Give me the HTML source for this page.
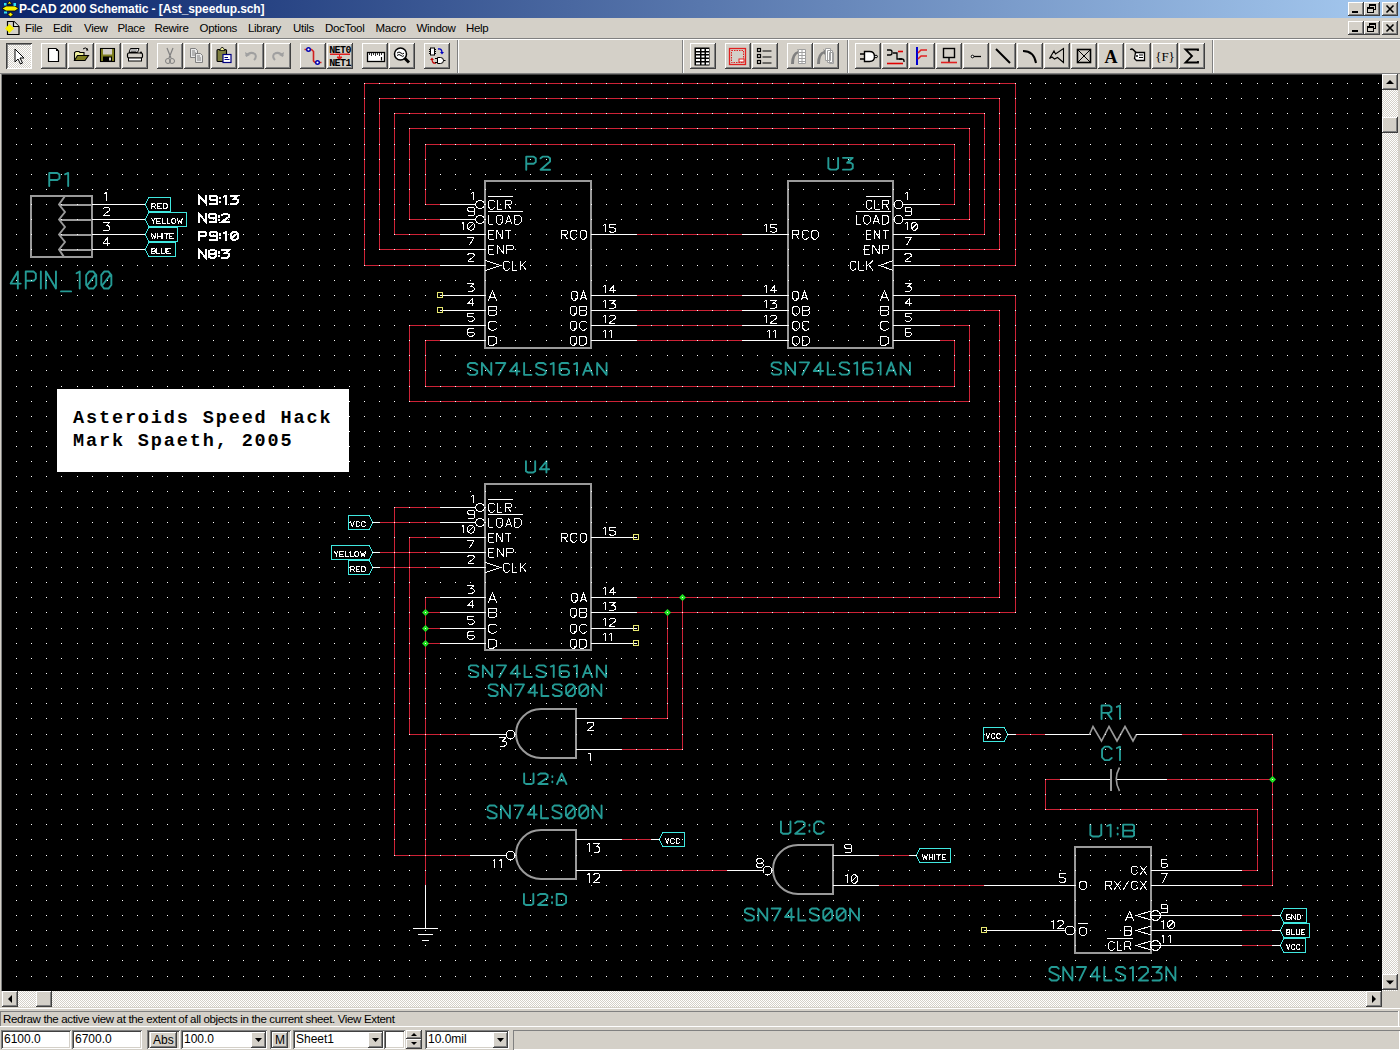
<!DOCTYPE html><html><head><meta charset="utf-8"><style>
*{margin:0;padding:0;box-sizing:border-box}
body{width:1400px;height:1050px;overflow:hidden;background:#d4d0c8;position:relative;font-family:"Liberation Sans",sans-serif;font-size:11px;color:#000}
.a{position:absolute}
.b{position:absolute;background:#d4d0c8}
.dither{background-color:#ffffff;background-image:linear-gradient(45deg,#d4d0c8 25%,transparent 25%,transparent 75%,#d4d0c8 75%),linear-gradient(45deg,#d4d0c8 25%,transparent 25%,transparent 75%,#d4d0c8 75%);background-size:2px 2px;background-position:0 0,1px 1px}
.menu{position:absolute;top:22px;font-size:11.5px;line-height:13px;letter-spacing:-0.3px}
.tsep{position:absolute;width:2px;box-shadow:inset 1px 0 #808080, inset -1px 0 #ffffff}
.field{position:absolute;background:#fff;box-shadow:inset 1px 1px #808080, inset -1px -1px #ffffff, inset 2px 2px #404040, inset -2px -2px #d4d0c8;font-size:12px;line-height:14px;padding:2px 0 0 3px}
</style></head><body>
<div class="a" style="left:0;top:0;width:1400px;height:18px;background:linear-gradient(to right,#0a246a,#a6caf0)"></div>
<svg class="a" style="left:0;top:0" width="20" height="18"><path d="M7,4 L9.5,1 L12,4 Z" fill="#f8f000" stroke="#000" stroke-width=".8"/><path d="M2,8.5 L6,6 L15,6 L18.5,8.5 L15,11 L6,11 Z" fill="#f8f000" stroke="#000" stroke-width=".8"/><path d="M8,14.5 L10.5,12 L13,14.5 L10.5,17 Z" fill="#f8f000" stroke="#000" stroke-width=".8"/><rect x="4" y="3" width="2.5" height="2.5" fill="#30e0f0"/><rect x="13.5" y="3" width="2.5" height="3" fill="#30e0f0"/><rect x="4" y="11.5" width="3" height="2" fill="#30e0f0"/></svg>
<div class="a" style="left:19px;top:2px;color:#fff;font-weight:bold;font-size:12px;line-height:14px;letter-spacing:-0.1px">P-CAD 2000 Schematic - [Ast_speedup.sch]</div>
<div class="b" style="left:1348px;top:2px;width:16px;height:14px;box-shadow: inset -1px -1px #404040, inset 1px 1px #ffffff, inset -2px -2px #808080, inset 2px 2px #d4d0c8;"><div class="a" style="left:4px;top:9px;width:6px;height:2px;background:#000"></div></div>
<div class="b" style="left:1348px;top:21px;width:16px;height:14px;box-shadow: inset -1px -1px #404040, inset 1px 1px #ffffff, inset -2px -2px #808080, inset 2px 2px #d4d0c8;"><div class="a" style="left:4px;top:9px;width:6px;height:2px;background:#000"></div></div>
<div class="b" style="left:1364px;top:2px;width:16px;height:14px;box-shadow: inset -1px -1px #404040, inset 1px 1px #ffffff, inset -2px -2px #808080, inset 2px 2px #d4d0c8;"><svg class="a" style="left:0;top:0" width="16" height="14"><rect x="5.5" y="2.5" width="6" height="5" fill="none" stroke="#000"/><rect x="5" y="2" width="7" height="2" fill="#000"/><rect x="3.5" y="5.5" width="6" height="5" fill="#d4d0c8" stroke="#000"/><rect x="3" y="5" width="7" height="2" fill="#000"/></svg></div>
<div class="b" style="left:1364px;top:21px;width:16px;height:14px;box-shadow: inset -1px -1px #404040, inset 1px 1px #ffffff, inset -2px -2px #808080, inset 2px 2px #d4d0c8;"><svg class="a" style="left:0;top:0" width="16" height="14"><rect x="5.5" y="2.5" width="6" height="5" fill="none" stroke="#000"/><rect x="5" y="2" width="7" height="2" fill="#000"/><rect x="3.5" y="5.5" width="6" height="5" fill="#d4d0c8" stroke="#000"/><rect x="3" y="5" width="7" height="2" fill="#000"/></svg></div>
<div class="b" style="left:1382px;top:2px;width:16px;height:14px;box-shadow: inset -1px -1px #404040, inset 1px 1px #ffffff, inset -2px -2px #808080, inset 2px 2px #d4d0c8;"><svg class="a" style="left:0;top:0" width="16" height="14"><path d="M4.5,3.5 L11.5,10.5 M11.5,3.5 L4.5,10.5" stroke="#000" stroke-width="1.6"/></svg></div>
<div class="b" style="left:1382px;top:21px;width:16px;height:14px;box-shadow: inset -1px -1px #404040, inset 1px 1px #ffffff, inset -2px -2px #808080, inset 2px 2px #d4d0c8;"><svg class="a" style="left:0;top:0" width="16" height="14"><path d="M4.5,3.5 L11.5,10.5 M11.5,3.5 L4.5,10.5" stroke="#000" stroke-width="1.6"/></svg></div>
<svg class="a" style="left:0;top:19px" width="22" height="18"><path d="M7.5,2.5 h6.5 l5,5 v8 h-11.5 z" fill="#d4d0c8" stroke="#000" stroke-width="1.2"/><path d="M13.5,2.5v5h5.5" fill="#e0e8e0" stroke="#000" stroke-width="1.2"/><path d="M5,9.5 L9.5,5 L14,9.5 L9.5,14 Z" fill="#f8f000"/></svg>
<div class="menu" style="left:25.0px">File</div>
<div class="menu" style="left:53.0px">Edit</div>
<div class="menu" style="left:84.0px">View</div>
<div class="menu" style="left:117.5px">Place</div>
<div class="menu" style="left:154.5px">Rewire</div>
<div class="menu" style="left:199.5px">Options</div>
<div class="menu" style="left:248.0px">Library</div>
<div class="menu" style="left:293.0px">Utils</div>
<div class="menu" style="left:325.0px">DocTool</div>
<div class="menu" style="left:375.5px">Macro</div>
<div class="menu" style="left:416.5px">Window</div>
<div class="menu" style="left:466.0px">Help</div>
<div class="a" style="left:0;top:38px;width:1400px;height:1px;background:#808080"></div>
<div class="a" style="left:0;top:39px;width:1400px;height:1px;background:#ffffff"></div>
<div class="a dither" style="left:6px;top:43px;width:26px;height:26px;box-shadow:inset 1px 1px #404040, inset -1px -1px #ffffff, inset 2px 2px #808080"><svg width="26" height="26" viewBox="0 0 26 26" style="position:absolute;left:0;top:0"><path d="M9,6 L9,19 L12,16 L14.5,21 L16.5,20 L14,15 L18,15 Z" fill="#fff" stroke="#000" stroke-width="1"/></svg></div>
<div class="b" style="left:41px;top:43px;width:26px;height:26px;box-shadow: inset -1px -1px #404040, inset 1px 1px #ffffff, inset -2px -2px #808080, inset 2px 2px #d4d0c8;"><svg width="26" height="26" viewBox="0 0 26 26" style="position:absolute;left:0;top:0"><path d="M7.5,5.5 L15,5.5 L17.5,8 L17.5,18.5 L7.5,18.5 Z" fill="#fff" stroke="#000" stroke-width="1.2"/><rect x="15" y="6" width="2" height="2" fill="#000"/></svg></div>
<div class="b" style="left:68px;top:43px;width:26px;height:26px;box-shadow: inset -1px -1px #404040, inset 1px 1px #ffffff, inset -2px -2px #808080, inset 2px 2px #d4d0c8;"><svg width="26" height="26" viewBox="0 0 26 26" style="position:absolute;left:0;top:0"><path d="M15,6 Q17,3.5 20,6.5" fill="none" stroke="#000"/><path d="M19,5 L20.5,7.5 L18,7.5Z" fill="#000"/><path d="M6.5,17.5 L6.5,9.5 L8,8.5 L11,8.5 L12,9.5 L16,9.5 L16,12" fill="#f0f0a0" stroke="#000" stroke-width="1.1"/><path d="M6.5,17.5 L9.5,12.5 L20.5,12.5 L17,17.5 Z" fill="#808020" stroke="#000" stroke-width="1.1"/></svg></div>
<div class="b" style="left:95px;top:43px;width:26px;height:26px;box-shadow: inset -1px -1px #404040, inset 1px 1px #ffffff, inset -2px -2px #808080, inset 2px 2px #d4d0c8;"><svg width="26" height="26" viewBox="0 0 26 26" style="position:absolute;left:0;top:0"><rect x="5.5" y="5.5" width="14" height="13" fill="#808020" stroke="#000" stroke-width="1.1"/><rect x="8" y="6" width="9" height="5.5" fill="#d4d0c8"/><rect x="8" y="13.5" width="9" height="5" fill="#000"/><rect x="14" y="14.5" width="2" height="3" fill="#d4d0c8"/></svg></div>
<div class="b" style="left:122px;top:43px;width:26px;height:26px;box-shadow: inset -1px -1px #404040, inset 1px 1px #ffffff, inset -2px -2px #808080, inset 2px 2px #d4d0c8;"><svg width="26" height="26" viewBox="0 0 26 26" style="position:absolute;left:0;top:0"><path d="M8.5,5.5 L17,5.5 L15.5,9.5 L7,9.5 Z" fill="#fff" stroke="#000"/><path d="M9,7h6M8.5,8.5h6" stroke="#000" stroke-width=".6"/><rect x="5.5" y="10" width="15" height="5" rx="1.5" fill="#d4d0c8" stroke="#000" stroke-width="1.2"/><rect x="6.5" y="15" width="13" height="3" fill="#fff" stroke="#000"/><circle cx="19" cy="9.5" r="1" fill="#000"/></svg></div>
<div class="b" style="left:157px;top:43px;width:26px;height:26px;box-shadow: inset -1px -1px #404040, inset 1px 1px #ffffff, inset -2px -2px #808080, inset 2px 2px #d4d0c8;"><svg width="26" height="26" viewBox="0 0 26 26" style="position:absolute;left:0;top:0"><path d="M10,5 L14,15 M16,5 L12,15" stroke="#808080" stroke-width="1.2" fill="none"/><circle cx="11" cy="18" r="2.5" fill="none" stroke="#808080"/><circle cx="15" cy="18" r="2.5" fill="none" stroke="#808080"/></svg></div>
<div class="b" style="left:184px;top:43px;width:26px;height:26px;box-shadow: inset -1px -1px #404040, inset 1px 1px #ffffff, inset -2px -2px #808080, inset 2px 2px #d4d0c8;"><svg width="26" height="26" viewBox="0 0 26 26" style="position:absolute;left:0;top:0"><path d="M6.5,5.5 h5 l2,2 v7 h-7 z" fill="#e8e8e8" stroke="#808080"/><path d="M8,8h3M8,10h4M8,12h4" stroke="#808080"/><path d="M11.5,10.5 h5 l2,2 v7 h-7 z" fill="#e8e8e8" stroke="#808080"/><path d="M13,13h3M13,15h4M13,17h4" stroke="#808080"/></svg></div>
<div class="b" style="left:211px;top:43px;width:26px;height:26px;box-shadow: inset -1px -1px #404040, inset 1px 1px #ffffff, inset -2px -2px #808080, inset 2px 2px #d4d0c8;"><svg width="26" height="26" viewBox="0 0 26 26" style="position:absolute;left:0;top:0"><rect x="6" y="6.5" width="9.5" height="12" rx="1" fill="#808040" stroke="#000" stroke-width="1.1"/><path d="M8.5,7.5 L10.5,4.5 L12,4.5 L14,7.5 Z" fill="#f0f0a0" stroke="#000" stroke-width=".8"/><rect x="12" y="11.5" width="8" height="8" fill="#fff" stroke="#000080" stroke-width="1.2"/><path d="M13.5,14.5h3.5M13.5,16.5h5" stroke="#000080"/></svg></div>
<div class="b" style="left:238px;top:43px;width:26px;height:26px;box-shadow: inset -1px -1px #404040, inset 1px 1px #ffffff, inset -2px -2px #808080, inset 2px 2px #d4d0c8;"><svg width="26" height="26" viewBox="0 0 26 26" style="position:absolute;left:0;top:0"><path d="M8,13 Q12,8 17,11 Q19,14 16,17" fill="none" stroke="#a0a0a0" stroke-width="2"/><path d="M7,9 L8,14 L12,12" fill="#a0a0a0"/></svg></div>
<div class="b" style="left:265px;top:43px;width:26px;height:26px;box-shadow: inset -1px -1px #404040, inset 1px 1px #ffffff, inset -2px -2px #808080, inset 2px 2px #d4d0c8;"><svg width="26" height="26" viewBox="0 0 26 26" style="position:absolute;left:0;top:0"><path d="M18,13 Q14,8 9,11 Q7,14 10,17" fill="none" stroke="#a0a0a0" stroke-width="2"/><path d="M19,9 L18,14 L14,12" fill="#a0a0a0"/></svg></div>
<div class="b" style="left:300px;top:43px;width:26px;height:26px;box-shadow: inset -1px -1px #404040, inset 1px 1px #ffffff, inset -2px -2px #808080, inset 2px 2px #d4d0c8;"><svg width="26" height="26" viewBox="0 0 26 26" style="position:absolute;left:0;top:0"><path d="M4.5,6.5 L11.5,6.5 L13.5,8.5 L13.5,18 L15,19.5 L21.5,19.5" fill="none" stroke="#d02020" stroke-width="1.6"/><circle cx="8.5" cy="6.5" r="1.8" fill="#fff" stroke="#0000b0" stroke-width="1.4"/><circle cx="17.5" cy="19.5" r="1.8" fill="#fff" stroke="#0000b0" stroke-width="1.4"/></svg></div>
<div class="b" style="left:327px;top:43px;width:26px;height:26px;box-shadow: inset -1px -1px #404040, inset 1px 1px #ffffff, inset -2px -2px #808080, inset 2px 2px #d4d0c8;"><svg width="26" height="26" viewBox="0 0 26 26" style="position:absolute;left:0;top:0"><text x="13" y="10" font-family="Liberation Mono" font-size="10" font-weight="bold" text-anchor="middle" fill="#000" letter-spacing="-0.6">NET0</text><rect x="3" y="10.5" width="20" height="1.5" fill="#e02020"/><path d="M12.5,12 v2 M10,14 L15,14 L12.5,17 Z" stroke="#e02020" fill="#e02020"/><text x="13" y="23" font-family="Liberation Mono" font-size="10" font-weight="bold" text-anchor="middle" fill="#000" letter-spacing="-0.6">NET1</text></svg></div>
<div class="b" style="left:362px;top:43px;width:26px;height:26px;box-shadow: inset -1px -1px #404040, inset 1px 1px #ffffff, inset -2px -2px #808080, inset 2px 2px #d4d0c8;"><svg width="26" height="26" viewBox="0 0 26 26" style="position:absolute;left:0;top:0"><rect x="5.5" y="9.5" width="17" height="9" fill="#fff" stroke="#000" stroke-width="1.3"/><path d="M7.5,10v2M9.5,10v3M11.5,10v2M13.5,10v3M15.5,10v2M17.5,10v3M19.5,10v2" stroke="#000" stroke-width=".8"/><path d="M19.5,14v3.5" stroke="#000" stroke-width="1.2"/></svg></div>
<div class="b" style="left:389px;top:43px;width:26px;height:26px;box-shadow: inset -1px -1px #404040, inset 1px 1px #ffffff, inset -2px -2px #808080, inset 2px 2px #d4d0c8;"><svg width="26" height="26" viewBox="0 0 26 26" style="position:absolute;left:0;top:0"><circle cx="11.5" cy="11" r="6" fill="#fff" stroke="#000" stroke-width="1.5"/><path d="M8,10 q2,-2 4,0 q2,2 3,0 M8,12.5 q2,-2 4,0 q2,2 3,0" stroke="#000" fill="none"/><path d="M15.5,15 L20,19.5" stroke="#000" stroke-width="3"/></svg></div>
<div class="b" style="left:424px;top:43px;width:26px;height:26px;box-shadow: inset -1px -1px #404040, inset 1px 1px #ffffff, inset -2px -2px #808080, inset 2px 2px #d4d0c8;"><svg width="26" height="26" viewBox="0 0 26 26" style="position:absolute;left:0;top:0"><rect x="6.5" y="5" width="4" height="7" fill="#fff" stroke="#000"/><path d="M5,6.5h1.5M5,8.5h1.5M5,10.5h1.5M10.5,6.5h1.5M10.5,8.5h1.5M10.5,10.5h1.5" stroke="#000"/><path d="M14,6 Q18,5 18,10" fill="none" stroke="#0000c0" stroke-width="1.3"/><path d="M16,9 L18,11.5 L20,9" fill="#0000c0"/><path d="M12,20 Q8,21 8,16" fill="none" stroke="#c00000" stroke-width="1.3"/><path d="M6,17 L8,14.5 L10,17" fill="#c00000"/><path d="M13.5,14.5 h3 q3,0 3,3 q0,3 -3,3 h-3 z M11,15.5h2.5M11,19.5h2.5M19.5,17.5h2" fill="#fff" stroke="#000"/></svg></div>
<div class="tsep" style="left:457px;top:40px;height:33px"></div>
<div class="tsep" style="left:682px;top:40px;height:33px"></div>
<div class="b" style="left:690px;top:43px;width:26px;height:26px;box-shadow: inset -1px -1px #404040, inset 1px 1px #ffffff, inset -2px -2px #808080, inset 2px 2px #d4d0c8;"><svg width="26" height="26" viewBox="0 0 26 26" style="position:absolute;left:0;top:0"><rect x="4.5" y="4.5" width="15" height="18" fill="#000"/><g fill="#fff"><rect x="6" y="6" width="4" height="2"/><rect x="11.5" y="6" width="3" height="2"/><rect x="16" y="6" width="3" height="2"/><rect x="6" y="9.5" width="4" height="1.5"/><rect x="11.5" y="9.5" width="3" height="1.5"/><rect x="16" y="9.5" width="3" height="1.5"/><rect x="6" y="12.5" width="4" height="2"/><rect x="11.5" y="12.5" width="3" height="2"/><rect x="16" y="12.5" width="3" height="2"/><rect x="6" y="16" width="4" height="2"/><rect x="11.5" y="16" width="3" height="2"/><rect x="16" y="16" width="3" height="2"/><rect x="6" y="19.5" width="4" height="2"/><rect x="11.5" y="19.5" width="3" height="2"/><rect x="16" y="19.5" width="3" height="2"/></g></svg></div>
<div class="b" style="left:725px;top:43px;width:26px;height:26px;box-shadow: inset -1px -1px #404040, inset 1px 1px #ffffff, inset -2px -2px #808080, inset 2px 2px #d4d0c8;"><svg width="26" height="26" viewBox="0 0 26 26" style="position:absolute;left:0;top:0"><rect x="4.5" y="5.5" width="16" height="16" fill="none" stroke="#e02020" stroke-width="1.3"/><rect x="6.5" y="7.5" width="12" height="12" fill="none" stroke="#e02020" stroke-dasharray="1.5,1"/><rect x="14" y="16" width="5" height="3" fill="#fff" stroke="#e02020"/></svg></div>
<div class="b" style="left:752px;top:43px;width:26px;height:26px;box-shadow: inset -1px -1px #404040, inset 1px 1px #ffffff, inset -2px -2px #808080, inset 2px 2px #d4d0c8;"><svg width="26" height="26" viewBox="0 0 26 26" style="position:absolute;left:0;top:0"><rect x="5.5" y="5.5" width="3" height="3" fill="none" stroke="#000" stroke-width="1.2"/><rect x="5.5" y="11.5" width="3" height="3" fill="none" stroke="#000" stroke-width="1.2"/><rect x="5.5" y="17.5" width="3" height="3" fill="none" stroke="#000" stroke-width="1.2"/><path d="M10.5,8h9M10.5,14h9M10.5,20h9" stroke="#000" stroke-width="1.2"/></svg></div>
<div class="b" style="left:787px;top:43px;width:26px;height:26px;box-shadow: inset -1px -1px #404040, inset 1px 1px #ffffff, inset -2px -2px #808080, inset 2px 2px #d4d0c8;"><svg width="26" height="26" viewBox="0 0 26 26" style="position:absolute;left:0;top:0"><path d="M4,21 Q4,10 11,8 L10,6 L14,8.5 L11,12 L11,10.5 Q7,12 7,21 Z" fill="#808080"/><path d="M11.5,6.5 h7v14h-7z" fill="#fff" stroke="#a0a0a0"/><path d="M11.5,9.5h7M11.5,12.5h7M11.5,15.5h7M11.5,18.5h7M15,6.5v14" stroke="#a0a0a0"/></svg></div>
<div class="b" style="left:813px;top:43px;width:26px;height:26px;box-shadow: inset -1px -1px #404040, inset 1px 1px #ffffff, inset -2px -2px #808080, inset 2px 2px #d4d0c8;"><svg width="26" height="26" viewBox="0 0 26 26" style="position:absolute;left:0;top:0"><path d="M4,21 Q4,10 11,8 L10,6 L14,8.5 L11,12 L11,10.5 Q7,12 7,21 Z" fill="#808080"/><path d="M12.5,5.5h5v12h-5z M14.5,7.5h5v12h-5z M16.5,9.5h4v11h-4z" fill="#fff" stroke="#a0a0a0"/></svg></div>
<div class="tsep" style="left:847px;top:40px;height:33px"></div>
<div class="b" style="left:855px;top:43px;width:26px;height:26px;box-shadow: inset -1px -1px #404040, inset 1px 1px #ffffff, inset -2px -2px #808080, inset 2px 2px #d4d0c8;"><svg width="26" height="26" viewBox="0 0 26 26" style="position:absolute;left:0;top:0"><path d="M9.5,8.5 h5 q5,0 5,5 q0,5 -5,5 h-5 z" fill="#fff" stroke="#000" stroke-width="1.4"/><path d="M5,11h4.5M5,16h4.5M19.5,13.5h3" stroke="#000" stroke-width="1.4"/><circle cx="21" cy="13.5" r="1.3" fill="#fff" stroke="#000"/></svg></div>
<div class="b" style="left:882px;top:43px;width:26px;height:26px;box-shadow: inset -1px -1px #404040, inset 1px 1px #ffffff, inset -2px -2px #808080, inset 2px 2px #d4d0c8;"><svg width="26" height="26" viewBox="0 0 26 26" style="position:absolute;left:0;top:0"><path d="M5,7h3q2,0 2,2v1q0,2 -2,2h-3" fill="none" stroke="#000" stroke-width="1.3"/><path d="M11,10h4v6h5" fill="none" stroke="#000" stroke-width="1.3"/><path d="M5,20.5h16" stroke="#e00000" stroke-width="1.6"/><path d="M16,8.5h5" stroke="#e00000" stroke-width="1.6"/><path d="M17,16h3q2,0 2,2v1" fill="none" stroke="#000" stroke-width="1.3"/></svg></div>
<div class="b" style="left:909px;top:43px;width:26px;height:26px;box-shadow: inset -1px -1px #404040, inset 1px 1px #ffffff, inset -2px -2px #808080, inset 2px 2px #d4d0c8;"><svg width="26" height="26" viewBox="0 0 26 26" style="position:absolute;left:0;top:0"><path d="M8,4v18" stroke="#0000d0" stroke-width="2"/><path d="M9,10 l3,-3 h6 M9,16 l3,-3 h6" fill="none" stroke="#e02020" stroke-width="1.5"/></svg></div>
<div class="b" style="left:936px;top:43px;width:26px;height:26px;box-shadow: inset -1px -1px #404040, inset 1px 1px #ffffff, inset -2px -2px #808080, inset 2px 2px #d4d0c8;"><svg width="26" height="26" viewBox="0 0 26 26" style="position:absolute;left:0;top:0"><rect x="7.5" y="5.5" width="11" height="9" fill="none" stroke="#000" stroke-width="1.4"/><path d="M13,14.5v5" stroke="#000" stroke-width="1.4"/><path d="M5,19.5h16" stroke="#e02020" stroke-width="1.6"/></svg></div>
<div class="b" style="left:963px;top:43px;width:26px;height:26px;box-shadow: inset -1px -1px #404040, inset 1px 1px #ffffff, inset -2px -2px #808080, inset 2px 2px #d4d0c8;"><svg width="26" height="26" viewBox="0 0 26 26" style="position:absolute;left:0;top:0"><circle cx="9.5" cy="13.5" r="1.3" fill="#fff" stroke="#000" stroke-width="1"/><path d="M11,13.5h7" stroke="#000" stroke-width="1.3"/></svg></div>
<div class="b" style="left:990px;top:43px;width:26px;height:26px;box-shadow: inset -1px -1px #404040, inset 1px 1px #ffffff, inset -2px -2px #808080, inset 2px 2px #d4d0c8;"><svg width="26" height="26" viewBox="0 0 26 26" style="position:absolute;left:0;top:0"><path d="M6,6 L20,20" stroke="#000" stroke-width="2"/></svg></div>
<div class="b" style="left:1017px;top:43px;width:26px;height:26px;box-shadow: inset -1px -1px #404040, inset 1px 1px #ffffff, inset -2px -2px #808080, inset 2px 2px #d4d0c8;"><svg width="26" height="26" viewBox="0 0 26 26" style="position:absolute;left:0;top:0"><path d="M6,8 Q17,8 19,20" fill="none" stroke="#000" stroke-width="2"/></svg></div>
<div class="b" style="left:1044px;top:43px;width:26px;height:26px;box-shadow: inset -1px -1px #404040, inset 1px 1px #ffffff, inset -2px -2px #808080, inset 2px 2px #d4d0c8;"><svg width="26" height="26" viewBox="0 0 26 26" style="position:absolute;left:0;top:0"><path d="M5.5,15.5 L10,8 L11.5,11 L19.5,5.5 L19.5,19.5 L13.5,14.5 L10.5,16 L8,14 Z" fill="none" stroke="#000" stroke-width="1.1"/></svg></div>
<div class="b" style="left:1071px;top:43px;width:26px;height:26px;box-shadow: inset -1px -1px #404040, inset 1px 1px #ffffff, inset -2px -2px #808080, inset 2px 2px #d4d0c8;"><svg width="26" height="26" viewBox="0 0 26 26" style="position:absolute;left:0;top:0"><rect x="6.5" y="6.5" width="13" height="13" fill="none" stroke="#000" stroke-width="1.6"/><path d="M7,7 L19,19 M19,7 L7,19" stroke="#000" stroke-width="1"/></svg></div>
<div class="b" style="left:1098px;top:43px;width:26px;height:26px;box-shadow: inset -1px -1px #404040, inset 1px 1px #ffffff, inset -2px -2px #808080, inset 2px 2px #d4d0c8;"><svg width="26" height="26" viewBox="0 0 26 26" style="position:absolute;left:0;top:0"><text x="13" y="19.5" font-family="Liberation Serif" font-size="18" font-weight="bold" text-anchor="middle" fill="#000">A</text></svg></div>
<div class="b" style="left:1125px;top:43px;width:26px;height:26px;box-shadow: inset -1px -1px #404040, inset 1px 1px #ffffff, inset -2px -2px #808080, inset 2px 2px #d4d0c8;"><svg width="26" height="26" viewBox="0 0 26 26" style="position:absolute;left:0;top:0"><path d="M10.5,9.5 h9 v8 h-8 l-2,-2 z" fill="#fff" stroke="#000" stroke-width="1.3"/><path d="M5.5,7 q1,-2 3,0 l3,3" fill="none" stroke="#000" stroke-width="1.6"/><circle cx="12" cy="13" r="1" fill="#000"/><path d="M14,12h4M14,14.5h4" stroke="#000"/></svg></div>
<div class="b" style="left:1152px;top:43px;width:26px;height:26px;box-shadow: inset -1px -1px #404040, inset 1px 1px #ffffff, inset -2px -2px #808080, inset 2px 2px #d4d0c8;"><svg width="26" height="26" viewBox="0 0 26 26" style="position:absolute;left:0;top:0"><text x="13" y="17.5" font-family="Liberation Serif" font-size="13" text-anchor="middle" fill="#000">{F}</text></svg></div>
<div class="b" style="left:1179px;top:43px;width:26px;height:26px;box-shadow: inset -1px -1px #404040, inset 1px 1px #ffffff, inset -2px -2px #808080, inset 2px 2px #d4d0c8;"><svg width="26" height="26" viewBox="0 0 26 26" style="position:absolute;left:0;top:0"><path d="M19,8 L19,6.5 L6.5,6.5 L13,13 L6.5,19.5 L19,19.5 L19,18" fill="none" stroke="#000" stroke-width="1.8"/></svg></div>
<div class="tsep" style="left:1212px;top:40px;height:33px"></div>
<div class="a" style="left:0;top:73px;width:1400px;height:1px;background:#808080"></div>
<div class="a" style="left:1px;top:73px;width:1px;height:918px;background:#808080"></div>
<svg class="a" style="left:0;top:0" width="1400" height="1050" shape-rendering="auto">
<rect x="2" y="74" width="1380" height="917" fill="#000"/><rect x="2" y="74" width="1380" height="1" fill="#404040"/>
<rect x="57" y="389" width="292" height="83" fill="#fff"/>
<rect x="364" y="265" width="77" height="1" fill="#cc2236"/>
<rect x="364" y="83" width="1" height="183" fill="#cc2236"/>
<rect x="364" y="83" width="652" height="1" fill="#cc2236"/>
<rect x="1015" y="83" width="1" height="183" fill="#cc2236"/>
<rect x="939" y="265" width="77" height="1" fill="#cc2236"/>
<rect x="379" y="249" width="62" height="1" fill="#cc2236"/>
<rect x="379" y="98" width="1" height="152" fill="#cc2236"/>
<rect x="379" y="98" width="621" height="1" fill="#cc2236"/>
<rect x="999" y="98" width="1" height="152" fill="#cc2236"/>
<rect x="939" y="249" width="61" height="1" fill="#cc2236"/>
<rect x="394" y="234" width="47" height="1" fill="#cc2236"/>
<rect x="394" y="113" width="1" height="122" fill="#cc2236"/>
<rect x="394" y="113" width="591" height="1" fill="#cc2236"/>
<rect x="984" y="113" width="1" height="122" fill="#cc2236"/>
<rect x="939" y="234" width="46" height="1" fill="#cc2236"/>
<rect x="409" y="219" width="32" height="1" fill="#cc2236"/>
<rect x="409" y="128" width="1" height="92" fill="#cc2236"/>
<rect x="409" y="128" width="561" height="1" fill="#cc2236"/>
<rect x="969" y="128" width="1" height="92" fill="#cc2236"/>
<rect x="939" y="219" width="31" height="1" fill="#cc2236"/>
<rect x="425" y="204" width="16" height="1" fill="#cc2236"/>
<rect x="425" y="144" width="1" height="61" fill="#cc2236"/>
<rect x="425" y="144" width="530" height="1" fill="#cc2236"/>
<rect x="954" y="144" width="1" height="61" fill="#cc2236"/>
<rect x="939" y="204" width="16" height="1" fill="#cc2236"/>
<rect x="636" y="234" width="107" height="1" fill="#cc2236"/>
<rect x="636" y="295" width="107" height="1" fill="#cc2236"/>
<rect x="636" y="310" width="107" height="1" fill="#cc2236"/>
<rect x="636" y="325" width="107" height="1" fill="#cc2236"/>
<rect x="636" y="340" width="107" height="1" fill="#cc2236"/>
<rect x="425" y="340" width="16" height="1" fill="#cc2236"/>
<rect x="425" y="340" width="1" height="47" fill="#cc2236"/>
<rect x="425" y="386" width="530" height="1" fill="#cc2236"/>
<rect x="954" y="340" width="1" height="47" fill="#cc2236"/>
<rect x="939" y="340" width="16" height="1" fill="#cc2236"/>
<rect x="409" y="325" width="32" height="1" fill="#cc2236"/>
<rect x="409" y="325" width="1" height="77" fill="#cc2236"/>
<rect x="409" y="401" width="561" height="1" fill="#cc2236"/>
<rect x="969" y="325" width="1" height="77" fill="#cc2236"/>
<rect x="939" y="325" width="31" height="1" fill="#cc2236"/>
<rect x="939" y="295" width="77" height="1" fill="#cc2236"/>
<rect x="1015" y="295" width="1" height="318" fill="#cc2236"/>
<rect x="636" y="612" width="380" height="1" fill="#cc2236"/>
<rect x="939" y="310" width="61" height="1" fill="#cc2236"/>
<rect x="999" y="310" width="1" height="288" fill="#cc2236"/>
<rect x="636" y="597" width="364" height="1" fill="#cc2236"/>
<rect x="682" y="597" width="1" height="153" fill="#cc2236"/>
<rect x="621" y="749" width="62" height="1" fill="#cc2236"/>
<rect x="667" y="612" width="1" height="107" fill="#cc2236"/>
<rect x="621" y="718" width="47" height="1" fill="#cc2236"/>
<rect x="394" y="507" width="47" height="1" fill="#cc2236"/>
<rect x="394" y="507" width="1" height="349" fill="#cc2236"/>
<rect x="394" y="855" width="77" height="1" fill="#cc2236"/>
<rect x="379" y="522" width="62" height="1" fill="#cc2236"/>
<rect x="409" y="537" width="32" height="1" fill="#cc2236"/>
<rect x="409" y="537" width="1" height="198" fill="#cc2236"/>
<rect x="409" y="734" width="62" height="1" fill="#cc2236"/>
<rect x="379" y="552" width="62" height="1" fill="#cc2236"/>
<rect x="379" y="567" width="62" height="1" fill="#cc2236"/>
<rect x="425" y="597" width="16" height="1" fill="#cc2236"/>
<rect x="425" y="597" width="1" height="289" fill="#cc2236"/>
<rect x="425" y="612" width="16" height="1" fill="#cc2236"/>
<rect x="425" y="628" width="16" height="1" fill="#cc2236"/>
<rect x="425" y="643" width="16" height="1" fill="#cc2236"/>
<rect x="621" y="839" width="31" height="1" fill="#cc2236"/>
<rect x="621" y="870" width="107" height="1" fill="#cc2236"/>
<rect x="878" y="855" width="32" height="1" fill="#cc2236"/>
<rect x="878" y="885" width="107" height="1" fill="#cc2236"/>
<rect x="1015" y="734" width="31" height="1" fill="#cc2236"/>
<rect x="1181" y="734" width="92" height="1" fill="#cc2236"/>
<rect x="1272" y="734" width="1" height="152" fill="#cc2236"/>
<rect x="1241" y="885" width="32" height="1" fill="#cc2236"/>
<rect x="1045" y="779" width="16" height="1" fill="#cc2236"/>
<rect x="1045" y="779" width="1" height="31" fill="#cc2236"/>
<rect x="1045" y="809" width="213" height="1" fill="#cc2236"/>
<rect x="1257" y="809" width="1" height="62" fill="#cc2236"/>
<rect x="1241" y="870" width="17" height="1" fill="#cc2236"/>
<rect x="1166" y="779" width="107" height="1" fill="#cc2236"/>
<rect x="1241" y="915" width="32" height="1" fill="#cc2236"/>
<rect x="1241" y="930" width="32" height="1" fill="#cc2236"/>
<rect x="1241" y="945" width="32" height="1" fill="#cc2236"/>
<rect x="485" y="181" width="106" height="167" fill="none" stroke="#9a9a9a" stroke-width="2"/>
<rect x="440" y="204" width="36" height="1" fill="#ffffff"/>
<circle cx="480.0" cy="204.5" r="4.2" fill="none" stroke="#ffffff" stroke-width="1" shape-rendering="crispEdges"/>
<path d="M 494.44,201.50 L 492.75,200.00 L 490.20,200.00 L 488.50,201.88 L 488.50,207.12 L 490.20,209.00 L 492.75,209.00 L 494.44,207.50 M 497.42,200.00 L 497.42,209.00 L 502.08,209.00 M 505.06,209.00 L 505.06,200.00 L 509.73,200.00 L 511.00,201.12 L 511.00,203.75 L 509.73,204.88 L 505.06,204.88 M 508.45,204.88 L 511.00,209.00" fill="none" stroke="#ffffff" stroke-width="1.00" stroke-linecap="round" stroke-linejoin="round" shape-rendering="crispEdges"/>
<rect x="488" y="196" width="25" height="1" fill="#ffffff"/>
<path d="M 471.18,193.25 L 473.12,192.50 L 473.12,200.00" fill="none" stroke="#ffffff" stroke-width="1" stroke-linecap="round" stroke-linejoin="round" shape-rendering="crispEdges"/>
<rect x="440" y="219" width="36" height="1" fill="#ffffff"/>
<circle cx="480.0" cy="219.5" r="4.2" fill="none" stroke="#ffffff" stroke-width="1" shape-rendering="crispEdges"/>
<path d="M 488.50,215.00 L 488.50,224.00 L 493.33,224.00 M 498.16,215.00 L 500.80,215.00 L 502.55,216.88 L 502.55,222.12 L 500.80,224.00 L 498.16,224.00 L 496.41,222.12 L 496.41,216.88 Z M 505.63,224.00 L 508.70,215.00 L 511.78,224.00 M 506.68,221.00 L 510.72,221.00 M 514.85,215.00 L 518.80,215.00 L 521.00,216.88 L 521.00,222.12 L 518.80,224.00 L 514.85,224.00 Z" fill="none" stroke="#ffffff" stroke-width="1.00" stroke-linecap="round" stroke-linejoin="round" shape-rendering="crispEdges"/>
<rect x="488" y="211" width="35" height="1" fill="#ffffff"/>
<path d="M 474.00,211.56 L 469.16,211.56 L 467.84,210.62 L 467.84,208.12 L 468.72,207.50 L 473.12,207.50 L 474.00,208.12 L 474.00,215.00 L 468.28,215.00" fill="none" stroke="#ffffff" stroke-width="1" stroke-linecap="round" stroke-linejoin="round" shape-rendering="crispEdges"/>
<rect x="440" y="234" width="46" height="1" fill="#ffffff"/>
<path d="M 493.82,230.00 L 488.50,230.00 L 488.50,239.00 L 493.82,239.00 M 488.50,234.50 L 492.59,234.50 M 496.68,239.00 L 496.68,230.00 L 502.41,239.00 L 502.41,230.00 M 505.27,230.00 L 511.00,230.00 M 508.14,230.00 L 508.14,239.00" fill="none" stroke="#ffffff" stroke-width="1.00" stroke-linecap="round" stroke-linejoin="round" shape-rendering="crispEdges"/>
<path d="M 461.94,223.25 L 463.88,222.50 L 463.88,230.00 M 469.60,222.50 L 472.24,222.50 L 474.00,224.06 L 474.00,228.44 L 472.24,230.00 L 469.60,230.00 L 467.84,228.44 L 467.84,224.06 Z M 468.28,228.75 L 473.56,223.75" fill="none" stroke="#ffffff" stroke-width="1" stroke-linecap="round" stroke-linejoin="round" shape-rendering="crispEdges"/>
<rect x="440" y="249" width="46" height="1" fill="#ffffff"/>
<path d="M 494.29,245.00 L 488.50,245.00 L 488.50,254.00 L 494.29,254.00 M 488.50,249.50 L 492.95,249.50 M 497.41,254.00 L 497.41,245.00 L 503.65,254.00 L 503.65,245.00 M 506.76,254.00 L 506.76,245.00 L 511.66,245.00 L 513.00,246.12 L 513.00,248.75 L 511.66,249.88 L 506.76,249.88" fill="none" stroke="#ffffff" stroke-width="1.00" stroke-linecap="round" stroke-linejoin="round" shape-rendering="crispEdges"/>
<path d="M 467.84,237.50 L 474.00,237.50 L 469.60,245.00" fill="none" stroke="#ffffff" stroke-width="1" stroke-linecap="round" stroke-linejoin="round" shape-rendering="crispEdges"/>
<rect x="440" y="265" width="46" height="1" fill="#ffffff"/>
<path d="M485.5,260.5 L500.5,265.5 L485.5,270.5" fill="none" stroke="#ffffff" stroke-width="1" shape-rendering="crispEdges"/>
<path d="M 509.44,262.50 L 507.75,261.00 L 505.20,261.00 L 503.50,262.88 L 503.50,268.12 L 505.20,270.00 L 507.75,270.00 L 509.44,268.50 M 512.42,261.00 L 512.42,270.00 L 517.08,270.00 M 520.06,261.00 L 520.06,270.00 M 526.00,261.00 L 520.06,266.62 M 522.18,264.75 L 526.00,270.00" fill="none" stroke="#ffffff" stroke-width="1.00" stroke-linecap="round" stroke-linejoin="round" shape-rendering="crispEdges"/>
<path d="M 467.84,254.44 L 469.16,253.50 L 472.68,253.50 L 474.00,254.44 L 474.00,256.31 L 467.84,261.00 L 474.00,261.00" fill="none" stroke="#ffffff" stroke-width="1" stroke-linecap="round" stroke-linejoin="round" shape-rendering="crispEdges"/>
<rect x="440" y="295" width="46" height="1" fill="#ffffff"/>
<path d="M 488.50,300.00 L 492.50,291.00 L 496.50,300.00 M 489.87,297.00 L 495.13,297.00" fill="none" stroke="#ffffff" stroke-width="1.00" stroke-linecap="round" stroke-linejoin="round" shape-rendering="crispEdges"/>
<path d="M 467.84,283.50 L 474.00,283.50 L 470.48,286.62 L 472.68,286.62 L 474.00,287.56 L 474.00,290.06 L 472.68,291.00 L 467.84,291.00" fill="none" stroke="#ffffff" stroke-width="1" stroke-linecap="round" stroke-linejoin="round" shape-rendering="crispEdges"/>
<rect x="440" y="310" width="46" height="1" fill="#ffffff"/>
<path d="M 488.50,315.00 L 488.50,306.00 L 495.36,306.00 L 496.50,306.75 L 496.50,309.75 L 495.36,310.50 L 488.50,310.50 M 495.36,310.50 L 496.50,311.25 L 496.50,314.25 L 495.36,315.00 L 488.50,315.00" fill="none" stroke="#ffffff" stroke-width="1.00" stroke-linecap="round" stroke-linejoin="round" shape-rendering="crispEdges"/>
<path d="M 472.24,306.00 L 472.24,298.50 L 467.84,303.81 L 474.00,303.81" fill="none" stroke="#ffffff" stroke-width="1" stroke-linecap="round" stroke-linejoin="round" shape-rendering="crispEdges"/>
<rect x="440" y="325" width="46" height="1" fill="#ffffff"/>
<path d="M 496.50,322.50 L 494.21,321.00 L 490.79,321.00 L 488.50,322.88 L 488.50,328.12 L 490.79,330.00 L 494.21,330.00 L 496.50,328.50" fill="none" stroke="#ffffff" stroke-width="1.00" stroke-linecap="round" stroke-linejoin="round" shape-rendering="crispEdges"/>
<path d="M 474.00,313.50 L 467.84,313.50 L 467.84,316.94 L 472.68,316.94 L 474.00,317.88 L 474.00,320.06 L 472.68,321.00 L 469.16,321.00 L 467.84,320.06" fill="none" stroke="#ffffff" stroke-width="1" stroke-linecap="round" stroke-linejoin="round" shape-rendering="crispEdges"/>
<rect x="440" y="340" width="46" height="1" fill="#ffffff"/>
<path d="M 488.50,336.00 L 493.64,336.00 L 496.50,337.88 L 496.50,343.12 L 493.64,345.00 L 488.50,345.00 Z" fill="none" stroke="#ffffff" stroke-width="1.00" stroke-linecap="round" stroke-linejoin="round" shape-rendering="crispEdges"/>
<path d="M 473.56,328.81 L 473.12,328.50 L 469.16,328.50 L 467.84,329.44 L 467.84,335.06 L 469.16,336.00 L 472.68,336.00 L 474.00,335.06 L 474.00,333.19 L 472.68,332.25 L 469.16,332.25 L 467.84,333.19" fill="none" stroke="#ffffff" stroke-width="1" stroke-linecap="round" stroke-linejoin="round" shape-rendering="crispEdges"/>
<rect x="591" y="234" width="46" height="1" fill="#ffffff"/>
<path d="M 561.00,239.00 L 561.00,230.00 L 566.01,230.00 L 567.38,231.12 L 567.38,233.75 L 566.01,234.88 L 561.00,234.88 M 564.64,234.88 L 567.38,239.00 M 576.94,231.50 L 575.12,230.00 L 572.38,230.00 L 570.56,231.88 L 570.56,237.12 L 572.38,239.00 L 575.12,239.00 L 576.94,237.50 M 581.95,230.00 L 584.68,230.00 L 586.50,231.88 L 586.50,237.12 L 584.68,239.00 L 581.95,239.00 L 580.12,237.12 L 580.12,231.88 Z" fill="none" stroke="#ffffff" stroke-width="1.00" stroke-linecap="round" stroke-linejoin="round" shape-rendering="crispEdges"/>
<path d="M 603.26,225.25 L 605.20,224.50 L 605.20,232.00 M 615.32,224.50 L 609.16,224.50 L 609.16,227.94 L 614.00,227.94 L 615.32,228.88 L 615.32,231.06 L 614.00,232.00 L 610.48,232.00 L 609.16,231.06" fill="none" stroke="#ffffff" stroke-width="1" stroke-linecap="round" stroke-linejoin="round" shape-rendering="crispEdges"/>
<rect x="591" y="295" width="46" height="1" fill="#ffffff"/>
<path d="M 573.21,291.00 L 575.79,291.00 L 577.50,292.88 L 577.50,298.12 L 575.79,300.00 L 573.21,300.00 L 571.50,298.12 L 571.50,292.88 Z M 575.36,298.88 L 576.64,300.00 M 580.50,300.00 L 583.50,291.00 L 586.50,300.00 M 581.53,297.00 L 585.47,297.00" fill="none" stroke="#ffffff" stroke-width="1.00" stroke-linecap="round" stroke-linejoin="round" shape-rendering="crispEdges"/>
<path d="M 603.26,286.25 L 605.20,285.50 L 605.20,293.00 M 613.56,293.00 L 613.56,285.50 L 609.16,290.81 L 615.32,290.81" fill="none" stroke="#ffffff" stroke-width="1" stroke-linecap="round" stroke-linejoin="round" shape-rendering="crispEdges"/>
<rect x="591" y="310" width="46" height="1" fill="#ffffff"/>
<path d="M 571.89,306.00 L 574.71,306.00 L 576.60,307.88 L 576.60,313.12 L 574.71,315.00 L 571.89,315.00 L 570.00,313.12 L 570.00,307.88 Z M 574.24,313.88 L 575.66,315.00 M 579.90,315.00 L 579.90,306.00 L 585.56,306.00 L 586.50,306.75 L 586.50,309.75 L 585.56,310.50 L 579.90,310.50 M 585.56,310.50 L 586.50,311.25 L 586.50,314.25 L 585.56,315.00 L 579.90,315.00" fill="none" stroke="#ffffff" stroke-width="1.00" stroke-linecap="round" stroke-linejoin="round" shape-rendering="crispEdges"/>
<path d="M 603.26,301.25 L 605.20,300.50 L 605.20,308.00 M 609.16,300.50 L 615.32,300.50 L 611.80,303.62 L 614.00,303.62 L 615.32,304.56 L 615.32,307.06 L 614.00,308.00 L 609.16,308.00" fill="none" stroke="#ffffff" stroke-width="1" stroke-linecap="round" stroke-linejoin="round" shape-rendering="crispEdges"/>
<rect x="591" y="325" width="46" height="1" fill="#ffffff"/>
<path d="M 571.89,321.00 L 574.71,321.00 L 576.60,322.88 L 576.60,328.12 L 574.71,330.00 L 571.89,330.00 L 570.00,328.12 L 570.00,322.88 Z M 574.24,328.88 L 575.66,330.00 M 586.50,322.50 L 584.61,321.00 L 581.79,321.00 L 579.90,322.88 L 579.90,328.12 L 581.79,330.00 L 584.61,330.00 L 586.50,328.50" fill="none" stroke="#ffffff" stroke-width="1.00" stroke-linecap="round" stroke-linejoin="round" shape-rendering="crispEdges"/>
<path d="M 603.26,316.25 L 605.20,315.50 L 605.20,323.00 M 609.16,316.44 L 610.48,315.50 L 614.00,315.50 L 615.32,316.44 L 615.32,318.31 L 609.16,323.00 L 615.32,323.00" fill="none" stroke="#ffffff" stroke-width="1" stroke-linecap="round" stroke-linejoin="round" shape-rendering="crispEdges"/>
<rect x="591" y="340" width="46" height="1" fill="#ffffff"/>
<path d="M 571.89,336.00 L 574.71,336.00 L 576.60,337.88 L 576.60,343.12 L 574.71,345.00 L 571.89,345.00 L 570.00,343.12 L 570.00,337.88 Z M 574.24,343.88 L 575.66,345.00 M 579.90,336.00 L 584.14,336.00 L 586.50,337.88 L 586.50,343.12 L 584.14,345.00 L 579.90,345.00 Z" fill="none" stroke="#ffffff" stroke-width="1.00" stroke-linecap="round" stroke-linejoin="round" shape-rendering="crispEdges"/>
<path d="M 603.26,331.25 L 605.20,330.50 L 605.20,338.00 M 609.42,331.25 L 611.36,330.50 L 611.36,338.00" fill="none" stroke="#ffffff" stroke-width="1" stroke-linecap="round" stroke-linejoin="round" shape-rendering="crispEdges"/>
<rect x="788" y="181" width="105" height="167" fill="none" stroke="#9a9a9a" stroke-width="2"/>
<rect x="903" y="204" width="37" height="1" fill="#ffffff"/>
<circle cx="898.5" cy="204.5" r="4.2" fill="none" stroke="#ffffff" stroke-width="1" shape-rendering="crispEdges"/>
<path d="M 871.94,201.50 L 870.25,200.00 L 867.70,200.00 L 866.00,201.88 L 866.00,207.12 L 867.70,209.00 L 870.25,209.00 L 871.94,207.50 M 874.92,200.00 L 874.92,209.00 L 879.58,209.00 M 882.56,209.00 L 882.56,200.00 L 887.23,200.00 L 888.50,201.12 L 888.50,203.75 L 887.23,204.88 L 882.56,204.88 M 885.95,204.88 L 888.50,209.00" fill="none" stroke="#ffffff" stroke-width="1.00" stroke-linecap="round" stroke-linejoin="round" shape-rendering="crispEdges"/>
<rect x="866" y="196" width="25" height="1" fill="#ffffff"/>
<path d="M 905.26,193.25 L 907.20,192.50 L 907.20,200.00" fill="none" stroke="#ffffff" stroke-width="1" stroke-linecap="round" stroke-linejoin="round" shape-rendering="crispEdges"/>
<rect x="903" y="219" width="37" height="1" fill="#ffffff"/>
<circle cx="898.5" cy="219.5" r="4.2" fill="none" stroke="#ffffff" stroke-width="1" shape-rendering="crispEdges"/>
<path d="M 856.00,215.00 L 856.00,224.00 L 860.83,224.00 M 865.66,215.00 L 868.30,215.00 L 870.05,216.88 L 870.05,222.12 L 868.30,224.00 L 865.66,224.00 L 863.91,222.12 L 863.91,216.88 Z M 873.13,224.00 L 876.20,215.00 L 879.28,224.00 M 874.18,221.00 L 878.22,221.00 M 882.35,215.00 L 886.30,215.00 L 888.50,216.88 L 888.50,222.12 L 886.30,224.00 L 882.35,224.00 Z" fill="none" stroke="#ffffff" stroke-width="1.00" stroke-linecap="round" stroke-linejoin="round" shape-rendering="crispEdges"/>
<rect x="856" y="211" width="35" height="1" fill="#ffffff"/>
<path d="M 911.16,211.56 L 906.32,211.56 L 905.00,210.62 L 905.00,208.12 L 905.88,207.50 L 910.28,207.50 L 911.16,208.12 L 911.16,215.00 L 905.44,215.00" fill="none" stroke="#ffffff" stroke-width="1" stroke-linecap="round" stroke-linejoin="round" shape-rendering="crispEdges"/>
<rect x="893" y="234" width="47" height="1" fill="#ffffff"/>
<path d="M 871.32,230.00 L 866.00,230.00 L 866.00,239.00 L 871.32,239.00 M 866.00,234.50 L 870.09,234.50 M 874.18,239.00 L 874.18,230.00 L 879.91,239.00 L 879.91,230.00 M 882.77,230.00 L 888.50,230.00 M 885.64,230.00 L 885.64,239.00" fill="none" stroke="#ffffff" stroke-width="1.00" stroke-linecap="round" stroke-linejoin="round" shape-rendering="crispEdges"/>
<path d="M 905.26,223.25 L 907.20,222.50 L 907.20,230.00 M 912.92,222.50 L 915.56,222.50 L 917.32,224.06 L 917.32,228.44 L 915.56,230.00 L 912.92,230.00 L 911.16,228.44 L 911.16,224.06 Z M 911.60,228.75 L 916.88,223.75" fill="none" stroke="#ffffff" stroke-width="1" stroke-linecap="round" stroke-linejoin="round" shape-rendering="crispEdges"/>
<rect x="893" y="249" width="47" height="1" fill="#ffffff"/>
<path d="M 869.79,245.00 L 864.00,245.00 L 864.00,254.00 L 869.79,254.00 M 864.00,249.50 L 868.45,249.50 M 872.91,254.00 L 872.91,245.00 L 879.15,254.00 L 879.15,245.00 M 882.26,254.00 L 882.26,245.00 L 887.16,245.00 L 888.50,246.12 L 888.50,248.75 L 887.16,249.88 L 882.26,249.88" fill="none" stroke="#ffffff" stroke-width="1.00" stroke-linecap="round" stroke-linejoin="round" shape-rendering="crispEdges"/>
<path d="M 905.00,237.50 L 911.16,237.50 L 906.76,245.00" fill="none" stroke="#ffffff" stroke-width="1" stroke-linecap="round" stroke-linejoin="round" shape-rendering="crispEdges"/>
<rect x="893" y="265" width="47" height="1" fill="#ffffff"/>
<path d="M893.5,260.5 L879.5,265.5 L893.5,270.5" fill="none" stroke="#ffffff" stroke-width="1" shape-rendering="crispEdges"/>
<path d="M 855.94,262.50 L 854.25,261.00 L 851.70,261.00 L 850.00,262.88 L 850.00,268.12 L 851.70,270.00 L 854.25,270.00 L 855.94,268.50 M 858.92,261.00 L 858.92,270.00 L 863.58,270.00 M 866.56,261.00 L 866.56,270.00 M 872.50,261.00 L 866.56,266.62 M 868.68,264.75 L 872.50,270.00" fill="none" stroke="#ffffff" stroke-width="1.00" stroke-linecap="round" stroke-linejoin="round" shape-rendering="crispEdges"/>
<path d="M 905.00,254.44 L 906.32,253.50 L 909.84,253.50 L 911.16,254.44 L 911.16,256.31 L 905.00,261.00 L 911.16,261.00" fill="none" stroke="#ffffff" stroke-width="1" stroke-linecap="round" stroke-linejoin="round" shape-rendering="crispEdges"/>
<rect x="893" y="295" width="47" height="1" fill="#ffffff"/>
<path d="M 880.50,300.00 L 884.50,291.00 L 888.50,300.00 M 881.87,297.00 L 887.13,297.00" fill="none" stroke="#ffffff" stroke-width="1.00" stroke-linecap="round" stroke-linejoin="round" shape-rendering="crispEdges"/>
<path d="M 905.00,283.50 L 911.16,283.50 L 907.64,286.62 L 909.84,286.62 L 911.16,287.56 L 911.16,290.06 L 909.84,291.00 L 905.00,291.00" fill="none" stroke="#ffffff" stroke-width="1" stroke-linecap="round" stroke-linejoin="round" shape-rendering="crispEdges"/>
<rect x="893" y="310" width="47" height="1" fill="#ffffff"/>
<path d="M 880.50,315.00 L 880.50,306.00 L 887.36,306.00 L 888.50,306.75 L 888.50,309.75 L 887.36,310.50 L 880.50,310.50 M 887.36,310.50 L 888.50,311.25 L 888.50,314.25 L 887.36,315.00 L 880.50,315.00" fill="none" stroke="#ffffff" stroke-width="1.00" stroke-linecap="round" stroke-linejoin="round" shape-rendering="crispEdges"/>
<path d="M 909.40,306.00 L 909.40,298.50 L 905.00,303.81 L 911.16,303.81" fill="none" stroke="#ffffff" stroke-width="1" stroke-linecap="round" stroke-linejoin="round" shape-rendering="crispEdges"/>
<rect x="893" y="325" width="47" height="1" fill="#ffffff"/>
<path d="M 888.50,322.50 L 886.21,321.00 L 882.79,321.00 L 880.50,322.88 L 880.50,328.12 L 882.79,330.00 L 886.21,330.00 L 888.50,328.50" fill="none" stroke="#ffffff" stroke-width="1.00" stroke-linecap="round" stroke-linejoin="round" shape-rendering="crispEdges"/>
<path d="M 911.16,313.50 L 905.00,313.50 L 905.00,316.94 L 909.84,316.94 L 911.16,317.88 L 911.16,320.06 L 909.84,321.00 L 906.32,321.00 L 905.00,320.06" fill="none" stroke="#ffffff" stroke-width="1" stroke-linecap="round" stroke-linejoin="round" shape-rendering="crispEdges"/>
<rect x="893" y="340" width="47" height="1" fill="#ffffff"/>
<path d="M 880.50,336.00 L 885.64,336.00 L 888.50,337.88 L 888.50,343.12 L 885.64,345.00 L 880.50,345.00 Z" fill="none" stroke="#ffffff" stroke-width="1.00" stroke-linecap="round" stroke-linejoin="round" shape-rendering="crispEdges"/>
<path d="M 910.72,328.81 L 910.28,328.50 L 906.32,328.50 L 905.00,329.44 L 905.00,335.06 L 906.32,336.00 L 909.84,336.00 L 911.16,335.06 L 911.16,333.19 L 909.84,332.25 L 906.32,332.25 L 905.00,333.19" fill="none" stroke="#ffffff" stroke-width="1" stroke-linecap="round" stroke-linejoin="round" shape-rendering="crispEdges"/>
<rect x="742" y="234" width="47" height="1" fill="#ffffff"/>
<path d="M 792.50,239.00 L 792.50,230.00 L 797.51,230.00 L 798.88,231.12 L 798.88,233.75 L 797.51,234.88 L 792.50,234.88 M 796.14,234.88 L 798.88,239.00 M 808.44,231.50 L 806.62,230.00 L 803.88,230.00 L 802.06,231.88 L 802.06,237.12 L 803.88,239.00 L 806.62,239.00 L 808.44,237.50 M 813.45,230.00 L 816.18,230.00 L 818.00,231.88 L 818.00,237.12 L 816.18,239.00 L 813.45,239.00 L 811.62,237.12 L 811.62,231.88 Z" fill="none" stroke="#ffffff" stroke-width="1.00" stroke-linecap="round" stroke-linejoin="round" shape-rendering="crispEdges"/>
<path d="M 764.44,225.25 L 766.38,224.50 L 766.38,232.00 M 776.50,224.50 L 770.34,224.50 L 770.34,227.94 L 775.18,227.94 L 776.50,228.88 L 776.50,231.06 L 775.18,232.00 L 771.66,232.00 L 770.34,231.06" fill="none" stroke="#ffffff" stroke-width="1" stroke-linecap="round" stroke-linejoin="round" shape-rendering="crispEdges"/>
<rect x="742" y="295" width="47" height="1" fill="#ffffff"/>
<path d="M 794.21,291.00 L 796.79,291.00 L 798.50,292.88 L 798.50,298.12 L 796.79,300.00 L 794.21,300.00 L 792.50,298.12 L 792.50,292.88 Z M 796.36,298.88 L 797.64,300.00 M 801.50,300.00 L 804.50,291.00 L 807.50,300.00 M 802.53,297.00 L 806.47,297.00" fill="none" stroke="#ffffff" stroke-width="1.00" stroke-linecap="round" stroke-linejoin="round" shape-rendering="crispEdges"/>
<path d="M 764.44,286.25 L 766.38,285.50 L 766.38,293.00 M 774.74,293.00 L 774.74,285.50 L 770.34,290.81 L 776.50,290.81" fill="none" stroke="#ffffff" stroke-width="1" stroke-linecap="round" stroke-linejoin="round" shape-rendering="crispEdges"/>
<rect x="742" y="310" width="47" height="1" fill="#ffffff"/>
<path d="M 794.39,306.00 L 797.21,306.00 L 799.10,307.88 L 799.10,313.12 L 797.21,315.00 L 794.39,315.00 L 792.50,313.12 L 792.50,307.88 Z M 796.74,313.88 L 798.16,315.00 M 802.40,315.00 L 802.40,306.00 L 808.06,306.00 L 809.00,306.75 L 809.00,309.75 L 808.06,310.50 L 802.40,310.50 M 808.06,310.50 L 809.00,311.25 L 809.00,314.25 L 808.06,315.00 L 802.40,315.00" fill="none" stroke="#ffffff" stroke-width="1.00" stroke-linecap="round" stroke-linejoin="round" shape-rendering="crispEdges"/>
<path d="M 764.44,301.25 L 766.38,300.50 L 766.38,308.00 M 770.34,300.50 L 776.50,300.50 L 772.98,303.62 L 775.18,303.62 L 776.50,304.56 L 776.50,307.06 L 775.18,308.00 L 770.34,308.00" fill="none" stroke="#ffffff" stroke-width="1" stroke-linecap="round" stroke-linejoin="round" shape-rendering="crispEdges"/>
<rect x="742" y="325" width="47" height="1" fill="#ffffff"/>
<path d="M 794.39,321.00 L 797.21,321.00 L 799.10,322.88 L 799.10,328.12 L 797.21,330.00 L 794.39,330.00 L 792.50,328.12 L 792.50,322.88 Z M 796.74,328.88 L 798.16,330.00 M 809.00,322.50 L 807.11,321.00 L 804.29,321.00 L 802.40,322.88 L 802.40,328.12 L 804.29,330.00 L 807.11,330.00 L 809.00,328.50" fill="none" stroke="#ffffff" stroke-width="1.00" stroke-linecap="round" stroke-linejoin="round" shape-rendering="crispEdges"/>
<path d="M 764.44,316.25 L 766.38,315.50 L 766.38,323.00 M 770.34,316.44 L 771.66,315.50 L 775.18,315.50 L 776.50,316.44 L 776.50,318.31 L 770.34,323.00 L 776.50,323.00" fill="none" stroke="#ffffff" stroke-width="1" stroke-linecap="round" stroke-linejoin="round" shape-rendering="crispEdges"/>
<rect x="742" y="340" width="47" height="1" fill="#ffffff"/>
<path d="M 794.39,336.00 L 797.21,336.00 L 799.10,337.88 L 799.10,343.12 L 797.21,345.00 L 794.39,345.00 L 792.50,343.12 L 792.50,337.88 Z M 796.74,343.88 L 798.16,345.00 M 802.40,336.00 L 806.64,336.00 L 809.00,337.88 L 809.00,343.12 L 806.64,345.00 L 802.40,345.00 Z" fill="none" stroke="#ffffff" stroke-width="1.00" stroke-linecap="round" stroke-linejoin="round" shape-rendering="crispEdges"/>
<path d="M 767.52,331.25 L 769.46,330.50 L 769.46,338.00 M 773.68,331.25 L 775.62,330.50 L 775.62,338.00" fill="none" stroke="#ffffff" stroke-width="1" stroke-linecap="round" stroke-linejoin="round" shape-rendering="crispEdges"/>
<rect x="485" y="484" width="106" height="166" fill="none" stroke="#9a9a9a" stroke-width="2"/>
<rect x="440" y="507" width="36" height="1" fill="#ffffff"/>
<circle cx="480.0" cy="507.5" r="4.2" fill="none" stroke="#ffffff" stroke-width="1" shape-rendering="crispEdges"/>
<path d="M 494.44,504.50 L 492.75,503.00 L 490.20,503.00 L 488.50,504.88 L 488.50,510.12 L 490.20,512.00 L 492.75,512.00 L 494.44,510.50 M 497.42,503.00 L 497.42,512.00 L 502.08,512.00 M 505.06,512.00 L 505.06,503.00 L 509.73,503.00 L 511.00,504.12 L 511.00,506.75 L 509.73,507.88 L 505.06,507.88 M 508.45,507.88 L 511.00,512.00" fill="none" stroke="#ffffff" stroke-width="1.00" stroke-linecap="round" stroke-linejoin="round" shape-rendering="crispEdges"/>
<rect x="488" y="499" width="25" height="1" fill="#ffffff"/>
<path d="M 471.18,496.25 L 473.12,495.50 L 473.12,503.00" fill="none" stroke="#ffffff" stroke-width="1" stroke-linecap="round" stroke-linejoin="round" shape-rendering="crispEdges"/>
<rect x="440" y="522" width="36" height="1" fill="#ffffff"/>
<circle cx="480.0" cy="522.5" r="4.2" fill="none" stroke="#ffffff" stroke-width="1" shape-rendering="crispEdges"/>
<path d="M 488.50,518.00 L 488.50,527.00 L 493.33,527.00 M 498.16,518.00 L 500.80,518.00 L 502.55,519.88 L 502.55,525.12 L 500.80,527.00 L 498.16,527.00 L 496.41,525.12 L 496.41,519.88 Z M 505.63,527.00 L 508.70,518.00 L 511.78,527.00 M 506.68,524.00 L 510.72,524.00 M 514.85,518.00 L 518.80,518.00 L 521.00,519.88 L 521.00,525.12 L 518.80,527.00 L 514.85,527.00 Z" fill="none" stroke="#ffffff" stroke-width="1.00" stroke-linecap="round" stroke-linejoin="round" shape-rendering="crispEdges"/>
<rect x="488" y="514" width="35" height="1" fill="#ffffff"/>
<path d="M 474.00,514.56 L 469.16,514.56 L 467.84,513.62 L 467.84,511.12 L 468.72,510.50 L 473.12,510.50 L 474.00,511.12 L 474.00,518.00 L 468.28,518.00" fill="none" stroke="#ffffff" stroke-width="1" stroke-linecap="round" stroke-linejoin="round" shape-rendering="crispEdges"/>
<rect x="440" y="537" width="46" height="1" fill="#ffffff"/>
<path d="M 493.82,533.00 L 488.50,533.00 L 488.50,542.00 L 493.82,542.00 M 488.50,537.50 L 492.59,537.50 M 496.68,542.00 L 496.68,533.00 L 502.41,542.00 L 502.41,533.00 M 505.27,533.00 L 511.00,533.00 M 508.14,533.00 L 508.14,542.00" fill="none" stroke="#ffffff" stroke-width="1.00" stroke-linecap="round" stroke-linejoin="round" shape-rendering="crispEdges"/>
<path d="M 461.94,526.25 L 463.88,525.50 L 463.88,533.00 M 469.60,525.50 L 472.24,525.50 L 474.00,527.06 L 474.00,531.44 L 472.24,533.00 L 469.60,533.00 L 467.84,531.44 L 467.84,527.06 Z M 468.28,531.75 L 473.56,526.75" fill="none" stroke="#ffffff" stroke-width="1" stroke-linecap="round" stroke-linejoin="round" shape-rendering="crispEdges"/>
<rect x="440" y="552" width="46" height="1" fill="#ffffff"/>
<path d="M 494.29,548.00 L 488.50,548.00 L 488.50,557.00 L 494.29,557.00 M 488.50,552.50 L 492.95,552.50 M 497.41,557.00 L 497.41,548.00 L 503.65,557.00 L 503.65,548.00 M 506.76,557.00 L 506.76,548.00 L 511.66,548.00 L 513.00,549.12 L 513.00,551.75 L 511.66,552.88 L 506.76,552.88" fill="none" stroke="#ffffff" stroke-width="1.00" stroke-linecap="round" stroke-linejoin="round" shape-rendering="crispEdges"/>
<path d="M 467.84,540.50 L 474.00,540.50 L 469.60,548.00" fill="none" stroke="#ffffff" stroke-width="1" stroke-linecap="round" stroke-linejoin="round" shape-rendering="crispEdges"/>
<rect x="440" y="567" width="46" height="1" fill="#ffffff"/>
<path d="M485.5,562.5 L500.5,567.5 L485.5,572.5" fill="none" stroke="#ffffff" stroke-width="1" shape-rendering="crispEdges"/>
<path d="M 509.44,564.50 L 507.75,563.00 L 505.20,563.00 L 503.50,564.88 L 503.50,570.12 L 505.20,572.00 L 507.75,572.00 L 509.44,570.50 M 512.42,563.00 L 512.42,572.00 L 517.08,572.00 M 520.06,563.00 L 520.06,572.00 M 526.00,563.00 L 520.06,568.62 M 522.18,566.75 L 526.00,572.00" fill="none" stroke="#ffffff" stroke-width="1.00" stroke-linecap="round" stroke-linejoin="round" shape-rendering="crispEdges"/>
<path d="M 467.84,556.44 L 469.16,555.50 L 472.68,555.50 L 474.00,556.44 L 474.00,558.31 L 467.84,563.00 L 474.00,563.00" fill="none" stroke="#ffffff" stroke-width="1" stroke-linecap="round" stroke-linejoin="round" shape-rendering="crispEdges"/>
<rect x="440" y="597" width="46" height="1" fill="#ffffff"/>
<path d="M 488.50,602.00 L 492.50,593.00 L 496.50,602.00 M 489.87,599.00 L 495.13,599.00" fill="none" stroke="#ffffff" stroke-width="1.00" stroke-linecap="round" stroke-linejoin="round" shape-rendering="crispEdges"/>
<path d="M 467.84,585.50 L 474.00,585.50 L 470.48,588.62 L 472.68,588.62 L 474.00,589.56 L 474.00,592.06 L 472.68,593.00 L 467.84,593.00" fill="none" stroke="#ffffff" stroke-width="1" stroke-linecap="round" stroke-linejoin="round" shape-rendering="crispEdges"/>
<rect x="440" y="612" width="46" height="1" fill="#ffffff"/>
<path d="M 488.50,617.00 L 488.50,608.00 L 495.36,608.00 L 496.50,608.75 L 496.50,611.75 L 495.36,612.50 L 488.50,612.50 M 495.36,612.50 L 496.50,613.25 L 496.50,616.25 L 495.36,617.00 L 488.50,617.00" fill="none" stroke="#ffffff" stroke-width="1.00" stroke-linecap="round" stroke-linejoin="round" shape-rendering="crispEdges"/>
<path d="M 472.24,608.00 L 472.24,600.50 L 467.84,605.81 L 474.00,605.81" fill="none" stroke="#ffffff" stroke-width="1" stroke-linecap="round" stroke-linejoin="round" shape-rendering="crispEdges"/>
<rect x="440" y="628" width="46" height="1" fill="#ffffff"/>
<path d="M 496.50,625.50 L 494.21,624.00 L 490.79,624.00 L 488.50,625.88 L 488.50,631.12 L 490.79,633.00 L 494.21,633.00 L 496.50,631.50" fill="none" stroke="#ffffff" stroke-width="1.00" stroke-linecap="round" stroke-linejoin="round" shape-rendering="crispEdges"/>
<path d="M 474.00,616.50 L 467.84,616.50 L 467.84,619.94 L 472.68,619.94 L 474.00,620.88 L 474.00,623.06 L 472.68,624.00 L 469.16,624.00 L 467.84,623.06" fill="none" stroke="#ffffff" stroke-width="1" stroke-linecap="round" stroke-linejoin="round" shape-rendering="crispEdges"/>
<rect x="440" y="643" width="46" height="1" fill="#ffffff"/>
<path d="M 488.50,639.00 L 493.64,639.00 L 496.50,640.88 L 496.50,646.12 L 493.64,648.00 L 488.50,648.00 Z" fill="none" stroke="#ffffff" stroke-width="1.00" stroke-linecap="round" stroke-linejoin="round" shape-rendering="crispEdges"/>
<path d="M 473.56,631.81 L 473.12,631.50 L 469.16,631.50 L 467.84,632.44 L 467.84,638.06 L 469.16,639.00 L 472.68,639.00 L 474.00,638.06 L 474.00,636.19 L 472.68,635.25 L 469.16,635.25 L 467.84,636.19" fill="none" stroke="#ffffff" stroke-width="1" stroke-linecap="round" stroke-linejoin="round" shape-rendering="crispEdges"/>
<rect x="591" y="537" width="46" height="1" fill="#ffffff"/>
<path d="M 561.00,542.00 L 561.00,533.00 L 566.01,533.00 L 567.38,534.12 L 567.38,536.75 L 566.01,537.88 L 561.00,537.88 M 564.64,537.88 L 567.38,542.00 M 576.94,534.50 L 575.12,533.00 L 572.38,533.00 L 570.56,534.88 L 570.56,540.12 L 572.38,542.00 L 575.12,542.00 L 576.94,540.50 M 581.95,533.00 L 584.68,533.00 L 586.50,534.88 L 586.50,540.12 L 584.68,542.00 L 581.95,542.00 L 580.12,540.12 L 580.12,534.88 Z" fill="none" stroke="#ffffff" stroke-width="1.00" stroke-linecap="round" stroke-linejoin="round" shape-rendering="crispEdges"/>
<path d="M 603.26,528.25 L 605.20,527.50 L 605.20,535.00 M 615.32,527.50 L 609.16,527.50 L 609.16,530.94 L 614.00,530.94 L 615.32,531.88 L 615.32,534.06 L 614.00,535.00 L 610.48,535.00 L 609.16,534.06" fill="none" stroke="#ffffff" stroke-width="1" stroke-linecap="round" stroke-linejoin="round" shape-rendering="crispEdges"/>
<rect x="591" y="597" width="46" height="1" fill="#ffffff"/>
<path d="M 573.21,593.00 L 575.79,593.00 L 577.50,594.88 L 577.50,600.12 L 575.79,602.00 L 573.21,602.00 L 571.50,600.12 L 571.50,594.88 Z M 575.36,600.88 L 576.64,602.00 M 580.50,602.00 L 583.50,593.00 L 586.50,602.00 M 581.53,599.00 L 585.47,599.00" fill="none" stroke="#ffffff" stroke-width="1.00" stroke-linecap="round" stroke-linejoin="round" shape-rendering="crispEdges"/>
<path d="M 603.26,588.25 L 605.20,587.50 L 605.20,595.00 M 613.56,595.00 L 613.56,587.50 L 609.16,592.81 L 615.32,592.81" fill="none" stroke="#ffffff" stroke-width="1" stroke-linecap="round" stroke-linejoin="round" shape-rendering="crispEdges"/>
<rect x="591" y="612" width="46" height="1" fill="#ffffff"/>
<path d="M 571.89,608.00 L 574.71,608.00 L 576.60,609.88 L 576.60,615.12 L 574.71,617.00 L 571.89,617.00 L 570.00,615.12 L 570.00,609.88 Z M 574.24,615.88 L 575.66,617.00 M 579.90,617.00 L 579.90,608.00 L 585.56,608.00 L 586.50,608.75 L 586.50,611.75 L 585.56,612.50 L 579.90,612.50 M 585.56,612.50 L 586.50,613.25 L 586.50,616.25 L 585.56,617.00 L 579.90,617.00" fill="none" stroke="#ffffff" stroke-width="1.00" stroke-linecap="round" stroke-linejoin="round" shape-rendering="crispEdges"/>
<path d="M 603.26,603.25 L 605.20,602.50 L 605.20,610.00 M 609.16,602.50 L 615.32,602.50 L 611.80,605.62 L 614.00,605.62 L 615.32,606.56 L 615.32,609.06 L 614.00,610.00 L 609.16,610.00" fill="none" stroke="#ffffff" stroke-width="1" stroke-linecap="round" stroke-linejoin="round" shape-rendering="crispEdges"/>
<rect x="591" y="628" width="46" height="1" fill="#ffffff"/>
<path d="M 571.89,624.00 L 574.71,624.00 L 576.60,625.88 L 576.60,631.12 L 574.71,633.00 L 571.89,633.00 L 570.00,631.12 L 570.00,625.88 Z M 574.24,631.88 L 575.66,633.00 M 586.50,625.50 L 584.61,624.00 L 581.79,624.00 L 579.90,625.88 L 579.90,631.12 L 581.79,633.00 L 584.61,633.00 L 586.50,631.50" fill="none" stroke="#ffffff" stroke-width="1.00" stroke-linecap="round" stroke-linejoin="round" shape-rendering="crispEdges"/>
<path d="M 603.26,619.25 L 605.20,618.50 L 605.20,626.00 M 609.16,619.44 L 610.48,618.50 L 614.00,618.50 L 615.32,619.44 L 615.32,621.31 L 609.16,626.00 L 615.32,626.00" fill="none" stroke="#ffffff" stroke-width="1" stroke-linecap="round" stroke-linejoin="round" shape-rendering="crispEdges"/>
<rect x="591" y="643" width="46" height="1" fill="#ffffff"/>
<path d="M 571.89,639.00 L 574.71,639.00 L 576.60,640.88 L 576.60,646.12 L 574.71,648.00 L 571.89,648.00 L 570.00,646.12 L 570.00,640.88 Z M 574.24,646.88 L 575.66,648.00 M 579.90,639.00 L 584.14,639.00 L 586.50,640.88 L 586.50,646.12 L 584.14,648.00 L 579.90,648.00 Z" fill="none" stroke="#ffffff" stroke-width="1.00" stroke-linecap="round" stroke-linejoin="round" shape-rendering="crispEdges"/>
<path d="M 603.26,634.25 L 605.20,633.50 L 605.20,641.00 M 609.42,634.25 L 611.36,633.50 L 611.36,641.00" fill="none" stroke="#ffffff" stroke-width="1" stroke-linecap="round" stroke-linejoin="round" shape-rendering="crispEdges"/>
<rect x="437.5" y="292.5" width="5" height="5" fill="none" stroke="#e8e870" stroke-width="1"/>
<rect x="437.5" y="307.5" width="5" height="5" fill="none" stroke="#e8e870" stroke-width="1"/>
<rect x="633.5" y="534.5" width="5" height="5" fill="none" stroke="#e8e870" stroke-width="1"/>
<rect x="633.5" y="625.5" width="5" height="5" fill="none" stroke="#e8e870" stroke-width="1"/>
<rect x="633.5" y="640.5" width="5" height="5" fill="none" stroke="#e8e870" stroke-width="1"/>
<path d="M 526.25,169.75 L 526.25,156.65 L 533.73,156.65 L 535.77,158.29 L 535.77,162.11 L 533.73,163.75 L 526.25,163.75 M 540.53,158.29 L 542.57,156.65 L 548.01,156.65 L 550.05,158.29 L 550.05,161.56 L 540.53,169.75 L 550.05,169.75" fill="none" stroke="#249a94" stroke-width="1.90" stroke-linecap="round" stroke-linejoin="round"/>
<path d="M 477.23,364.44 L 475.22,362.95 L 469.86,362.95 L 467.85,364.44 L 467.85,366.92 L 477.23,370.88 L 477.23,373.36 L 475.22,374.85 L 469.86,374.85 L 467.85,373.36 M 481.92,374.85 L 481.92,362.95 L 491.30,374.85 L 491.30,362.95 M 495.99,362.95 L 505.37,362.95 L 498.67,374.85 M 516.76,374.85 L 516.76,362.95 L 510.06,371.38 L 519.44,371.38 M 524.13,362.95 L 524.13,374.85 L 531.50,374.85 M 545.58,364.44 L 543.57,362.95 L 538.21,362.95 L 536.19,364.44 L 536.19,366.92 L 545.58,370.88 L 545.58,373.36 L 543.57,374.85 L 538.21,374.85 L 536.19,373.36 M 550.67,364.14 L 553.62,362.95 L 553.62,374.85 M 568.36,363.45 L 567.69,362.95 L 561.66,362.95 L 559.65,364.44 L 559.65,373.36 L 561.66,374.85 L 567.02,374.85 L 569.03,373.36 L 569.03,370.39 L 567.02,368.90 L 561.66,368.90 L 559.65,370.39 M 574.12,364.14 L 577.07,362.95 L 577.07,374.85 M 583.10,374.85 L 587.79,362.95 L 592.48,374.85 M 584.71,370.88 L 590.87,370.88 M 597.17,374.85 L 597.17,362.95 L 606.55,374.85 L 606.55,362.95" fill="none" stroke="#249a94" stroke-width="1.90" stroke-linecap="round" stroke-linejoin="round"/>
<path d="M 828.35,157.85 L 828.35,168.17 L 830.44,169.65 L 836.02,169.65 L 838.11,168.17 L 838.11,157.85 M 842.99,157.85 L 852.75,157.85 L 847.17,162.77 L 850.66,162.77 L 852.75,164.24 L 852.75,168.17 L 850.66,169.65 L 842.99,169.65" fill="none" stroke="#249a94" stroke-width="1.90" stroke-linecap="round" stroke-linejoin="round"/>
<path d="M 781.00,363.89 L 779.00,362.35 L 773.65,362.35 L 771.65,363.89 L 771.65,366.45 L 781.00,370.55 L 781.00,373.11 L 779.00,374.65 L 773.65,374.65 L 771.65,373.11 M 785.68,374.65 L 785.68,362.35 L 795.03,374.65 L 795.03,362.35 M 799.71,362.35 L 809.06,362.35 L 802.38,374.65 M 820.42,374.65 L 820.42,362.35 L 813.74,371.06 L 823.09,371.06 M 827.77,362.35 L 827.77,374.65 L 835.12,374.65 M 849.15,363.89 L 847.15,362.35 L 841.80,362.35 L 839.80,363.89 L 839.80,366.45 L 849.15,370.55 L 849.15,373.11 L 847.15,374.65 L 841.80,374.65 L 839.80,373.11 M 854.23,363.58 L 857.17,362.35 L 857.17,374.65 M 871.87,362.86 L 871.20,362.35 L 865.19,362.35 L 863.18,363.89 L 863.18,373.11 L 865.19,374.65 L 870.53,374.65 L 872.54,373.11 L 872.54,370.04 L 870.53,368.50 L 865.19,368.50 L 863.18,370.04 M 877.61,363.58 L 880.55,362.35 L 880.55,374.65 M 886.57,374.65 L 891.24,362.35 L 895.92,374.65 M 888.17,370.55 L 894.32,370.55 M 900.60,374.65 L 900.60,362.35 L 909.95,374.65 L 909.95,362.35" fill="none" stroke="#249a94" stroke-width="1.90" stroke-linecap="round" stroke-linejoin="round"/>
<path d="M 525.95,461.25 L 525.95,471.14 L 527.93,472.55 L 533.21,472.55 L 535.19,471.14 L 535.19,461.25 M 546.41,472.55 L 546.41,461.25 L 539.81,469.25 L 549.05,469.25" fill="none" stroke="#249a94" stroke-width="1.90" stroke-linecap="round" stroke-linejoin="round"/>
<path d="M 478.22,666.81 L 476.24,665.35 L 470.94,665.35 L 468.95,666.81 L 468.95,669.25 L 478.22,673.15 L 478.22,675.59 L 476.24,677.05 L 470.94,677.05 L 468.95,675.59 M 482.86,677.05 L 482.86,665.35 L 492.13,677.05 L 492.13,665.35 M 496.77,665.35 L 506.04,665.35 L 499.42,677.05 M 517.30,677.05 L 517.30,665.35 L 510.68,673.64 L 519.95,673.64 M 524.58,665.35 L 524.58,677.05 L 531.87,677.05 M 545.78,666.81 L 543.79,665.35 L 538.49,665.35 L 536.51,666.81 L 536.51,669.25 L 545.78,673.15 L 545.78,675.59 L 543.79,677.05 L 538.49,677.05 L 536.51,675.59 M 550.81,666.52 L 553.73,665.35 L 553.73,677.05 M 568.30,665.84 L 567.64,665.35 L 561.67,665.35 L 559.69,666.81 L 559.69,675.59 L 561.67,677.05 L 566.97,677.05 L 568.96,675.59 L 568.96,672.66 L 566.97,671.20 L 561.67,671.20 L 559.69,672.66 M 573.99,666.52 L 576.91,665.35 L 576.91,677.05 M 582.87,677.05 L 587.51,665.35 L 592.14,677.05 M 584.46,673.15 L 590.55,673.15 M 596.78,677.05 L 596.78,665.35 L 606.05,677.05 L 606.05,665.35" fill="none" stroke="#249a94" stroke-width="1.90" stroke-linecap="round" stroke-linejoin="round"/>
<path d="M 497.56,685.81 L 495.67,684.35 L 490.64,684.35 L 488.75,685.81 L 488.75,688.25 L 497.56,692.15 L 497.56,694.59 L 495.67,696.05 L 490.64,696.05 L 488.75,694.59 M 501.96,696.05 L 501.96,684.35 L 510.77,696.05 L 510.77,684.35 M 515.17,684.35 L 523.98,684.35 L 517.69,696.05 M 534.67,696.05 L 534.67,684.35 L 528.38,692.64 L 537.19,692.64 M 541.59,684.35 L 541.59,696.05 L 548.51,696.05 M 561.72,685.81 L 559.83,684.35 L 554.80,684.35 L 552.91,685.81 L 552.91,688.25 L 561.72,692.15 L 561.72,694.59 L 559.83,696.05 L 554.80,696.05 L 552.91,694.59 M 568.64,684.35 L 572.41,684.35 L 574.93,686.79 L 574.93,693.61 L 572.41,696.05 L 568.64,696.05 L 566.12,693.61 L 566.12,686.79 Z M 566.75,694.10 L 574.30,686.30 M 581.85,684.35 L 585.62,684.35 L 588.14,686.79 L 588.14,693.61 L 585.62,696.05 L 581.85,696.05 L 579.33,693.61 L 579.33,686.79 Z M 579.96,694.10 L 587.51,686.30 M 592.54,696.05 L 592.54,684.35 L 601.35,696.05 L 601.35,684.35" fill="none" stroke="#249a94" stroke-width="1.90" stroke-linecap="round" stroke-linejoin="round"/>
<path d="M541,709 L576,709 L576,758 L541,758 A25,24.5 0 0 1 541,709 Z" fill="none" stroke="#9a9a9a" stroke-width="2"/>
<circle cx="510.5" cy="734.5" r="4.5" fill="none" stroke="#ffffff" stroke-width="1" shape-rendering="crispEdges"/>
<rect x="470" y="734" width="37" height="1" fill="#ffffff"/>
<rect x="576" y="718" width="46" height="1" fill="#ffffff"/>
<rect x="576" y="749" width="46" height="1" fill="#ffffff"/>
<path d="M 499.84,737.50 L 506.00,737.50 L 502.48,741.04 L 504.68,741.04 L 506.00,742.10 L 506.00,744.94 L 504.68,746.00 L 499.84,746.00" fill="none" stroke="#ffffff" stroke-width="1" stroke-linecap="round" stroke-linejoin="round" shape-rendering="crispEdges"/>
<path d="M 587.50,723.06 L 588.82,722.00 L 592.34,722.00 L 593.66,723.06 L 593.66,725.19 L 587.50,730.50 L 593.66,730.50" fill="none" stroke="#ffffff" stroke-width="1" stroke-linecap="round" stroke-linejoin="round" shape-rendering="crispEdges"/>
<path d="M 588.26,753.80 L 590.20,753.00 L 590.20,761.00" fill="none" stroke="#ffffff" stroke-width="1" stroke-linecap="round" stroke-linejoin="round" shape-rendering="crispEdges"/>
<path d="M541,830 L576,830 L576,879 L541,879 A25,24.5 0 0 1 541,830 Z" fill="none" stroke="#9a9a9a" stroke-width="2"/>
<circle cx="510.5" cy="855.5" r="4.5" fill="none" stroke="#ffffff" stroke-width="1" shape-rendering="crispEdges"/>
<rect x="470" y="855" width="37" height="1" fill="#ffffff"/>
<rect x="576" y="839" width="46" height="1" fill="#ffffff"/>
<rect x="576" y="870" width="46" height="1" fill="#ffffff"/>
<path d="M 493.02,860.54 L 494.96,859.70 L 494.96,868.10 M 499.18,860.54 L 501.12,859.70 L 501.12,868.10" fill="none" stroke="#ffffff" stroke-width="1" stroke-linecap="round" stroke-linejoin="round" shape-rendering="crispEdges"/>
<path d="M 587.76,844.08 L 589.70,843.20 L 589.70,852.00 M 593.66,843.20 L 599.82,843.20 L 596.30,846.87 L 598.50,846.87 L 599.82,847.97 L 599.82,850.90 L 598.50,852.00 L 593.66,852.00" fill="none" stroke="#ffffff" stroke-width="1" stroke-linecap="round" stroke-linejoin="round" shape-rendering="crispEdges"/>
<path d="M 587.76,874.40 L 589.70,873.50 L 589.70,882.50 M 593.66,874.62 L 594.98,873.50 L 598.50,873.50 L 599.82,874.62 L 599.82,876.88 L 593.66,882.50 L 599.82,882.50" fill="none" stroke="#ffffff" stroke-width="1" stroke-linecap="round" stroke-linejoin="round" shape-rendering="crispEdges"/>
<path d="M798,845 L833,845 L833,894 L798,894 A25,24.5 0 0 1 798,845 Z" fill="none" stroke="#9a9a9a" stroke-width="2"/>
<circle cx="767.5" cy="870.5" r="4.5" fill="none" stroke="#ffffff" stroke-width="1" shape-rendering="crispEdges"/>
<rect x="727" y="870" width="37" height="1" fill="#ffffff"/>
<rect x="833" y="855" width="46" height="1" fill="#ffffff"/>
<rect x="833" y="885" width="46" height="1" fill="#ffffff"/>
<path d="M 758.16,858.50 L 761.68,858.50 L 763.00,859.62 L 763.00,861.88 L 761.68,863.00 L 758.16,863.00 L 756.84,861.88 L 756.84,859.62 Z M 758.16,863.00 L 756.84,864.12 L 756.84,866.38 L 758.16,867.50 L 761.68,867.50 L 763.00,866.38 L 763.00,864.12 L 761.68,863.00" fill="none" stroke="#ffffff" stroke-width="1" stroke-linecap="round" stroke-linejoin="round" shape-rendering="crispEdges"/>
<path d="M 851.06,848.53 L 846.22,848.53 L 844.90,847.53 L 844.90,844.87 L 845.78,844.20 L 850.18,844.20 L 851.06,844.87 L 851.06,852.20 L 845.34,852.20" fill="none" stroke="#ffffff" stroke-width="1" stroke-linecap="round" stroke-linejoin="round" shape-rendering="crispEdges"/>
<path d="M 845.26,875.72 L 847.20,874.90 L 847.20,883.10 M 852.92,874.90 L 855.56,874.90 L 857.32,876.61 L 857.32,881.39 L 855.56,883.10 L 852.92,883.10 L 851.16,881.39 L 851.16,876.61 Z M 851.60,881.73 L 856.88,876.27" fill="none" stroke="#ffffff" stroke-width="1" stroke-linecap="round" stroke-linejoin="round" shape-rendering="crispEdges"/>
<path d="M 524.15,773.55 L 524.15,782.74 L 526.16,784.05 L 531.54,784.05 L 533.55,782.74 L 533.55,773.55 M 538.25,774.86 L 540.26,773.55 L 545.64,773.55 L 547.65,774.86 L 547.65,777.49 L 538.25,784.05 L 547.65,784.05 M 552.35,776.18 L 552.35,777.05 M 552.35,781.43 L 552.35,782.30 M 557.05,784.05 L 561.75,773.55 L 566.45,784.05 M 558.66,780.55 L 564.84,780.55" fill="none" stroke="#249a94" stroke-width="1.90" stroke-linecap="round" stroke-linejoin="round"/>
<path d="M 496.56,807.14 L 494.65,805.55 L 489.56,805.55 L 487.65,807.14 L 487.65,809.78 L 496.56,814.02 L 496.56,816.66 L 494.65,818.25 L 489.56,818.25 L 487.65,816.66 M 501.01,818.25 L 501.01,805.55 L 509.92,818.25 L 509.92,805.55 M 514.38,805.55 L 523.28,805.55 L 516.92,818.25 M 534.10,818.25 L 534.10,805.55 L 527.74,814.55 L 536.65,814.55 M 541.10,805.55 L 541.10,818.25 L 548.10,818.25 M 561.46,807.14 L 559.55,805.55 L 554.46,805.55 L 552.55,807.14 L 552.55,809.78 L 561.46,814.02 L 561.46,816.66 L 559.55,818.25 L 554.46,818.25 L 552.55,816.66 M 568.46,805.55 L 572.28,805.55 L 574.82,808.20 L 574.82,815.60 L 572.28,818.25 L 568.46,818.25 L 565.92,815.60 L 565.92,808.20 Z M 566.55,816.13 L 574.19,807.67 M 581.82,805.55 L 585.64,805.55 L 588.19,808.20 L 588.19,815.60 L 585.64,818.25 L 581.82,818.25 L 579.28,815.60 L 579.28,808.20 Z M 579.92,816.13 L 587.55,807.67 M 592.64,818.25 L 592.64,805.55 L 601.55,818.25 L 601.55,805.55" fill="none" stroke="#249a94" stroke-width="1.90" stroke-linecap="round" stroke-linejoin="round"/>
<path d="M 523.95,893.95 L 523.95,903.66 L 525.95,905.05 L 531.30,905.05 L 533.31,903.66 L 533.31,893.95 M 537.98,895.34 L 539.99,893.95 L 545.33,893.95 L 547.34,895.34 L 547.34,898.11 L 537.98,905.05 L 547.34,905.05 M 552.02,896.73 L 552.02,897.65 M 552.02,902.28 L 552.02,903.20 M 556.69,893.95 L 562.71,893.95 L 566.05,896.26 L 566.05,902.74 L 562.71,905.05 L 556.69,905.05 Z" fill="none" stroke="#249a94" stroke-width="1.90" stroke-linecap="round" stroke-linejoin="round"/>
<path d="M 780.95,821.55 L 780.95,832.23 L 782.98,833.75 L 788.41,833.75 L 790.44,832.23 L 790.44,821.55 M 795.18,823.08 L 797.22,821.55 L 802.64,821.55 L 804.67,823.08 L 804.67,826.13 L 795.18,833.75 L 804.67,833.75 M 809.42,824.60 L 809.42,825.62 M 809.42,830.70 L 809.42,831.72 M 823.65,823.58 L 820.94,821.55 L 816.87,821.55 L 814.16,824.09 L 814.16,831.21 L 816.87,833.75 L 820.94,833.75 L 823.65,831.72" fill="none" stroke="#249a94" stroke-width="1.90" stroke-linecap="round" stroke-linejoin="round"/>
<path d="M 753.87,909.95 L 751.96,908.45 L 746.86,908.45 L 744.95,909.95 L 744.95,912.45 L 753.87,916.45 L 753.87,918.95 L 751.96,920.45 L 746.86,920.45 L 744.95,918.95 M 758.32,920.45 L 758.32,908.45 L 767.24,920.45 L 767.24,908.45 M 771.70,908.45 L 780.61,908.45 L 774.25,920.45 M 791.44,920.45 L 791.44,908.45 L 785.07,916.95 L 793.99,916.95 M 798.45,908.45 L 798.45,920.45 L 805.45,920.45 M 818.83,909.95 L 816.92,908.45 L 811.82,908.45 L 809.91,909.95 L 809.91,912.45 L 818.83,916.45 L 818.83,918.95 L 816.92,920.45 L 811.82,920.45 L 809.91,918.95 M 825.83,908.45 L 829.65,908.45 L 832.20,910.95 L 832.20,917.95 L 829.65,920.45 L 825.83,920.45 L 823.29,917.95 L 823.29,910.95 Z M 823.92,918.45 L 831.56,910.45 M 839.21,908.45 L 843.03,908.45 L 845.58,910.95 L 845.58,917.95 L 843.03,920.45 L 839.21,920.45 L 836.66,917.95 L 836.66,910.95 Z M 837.30,918.45 L 844.94,910.45 M 850.03,920.45 L 850.03,908.45 L 858.95,920.45 L 858.95,908.45" fill="none" stroke="#249a94" stroke-width="1.90" stroke-linecap="round" stroke-linejoin="round"/>
<rect x="425" y="885" width="1" height="44" fill="#ffffff"/>
<rect x="413" y="928" width="25" height="1" fill="#ffffff"/>
<rect x="418" y="934" width="15" height="1" fill="#ffffff"/>
<rect x="422" y="940" width="7" height="1" fill="#ffffff"/>
<rect x="31" y="196" width="61" height="61" fill="none" stroke="#9a9a9a" stroke-width="2"/>
<path d="M65,196 L59,204.5 L65,212 L59,219.5 L65,227 L59,234.5 L65,242 L59,249.5 L64,257" fill="none" stroke="#9a9a9a" stroke-width="2" stroke-linejoin="round"/>
<rect x="59" y="204" width="33" height="2" fill="#9a9a9a"/>
<rect x="92" y="204" width="54" height="1" fill="#ffffff"/>
<path d="M 104.61,193.30 L 106.87,192.50 L 106.87,200.50" fill="none" stroke="#ffffff" stroke-width="1.00" stroke-linecap="round" stroke-linejoin="round" shape-rendering="crispEdges"/>
<rect x="59" y="219" width="33" height="2" fill="#9a9a9a"/>
<rect x="92" y="219" width="54" height="1" fill="#ffffff"/>
<path d="M 103.20,208.50 L 104.55,207.50 L 108.15,207.50 L 109.50,208.50 L 109.50,210.50 L 103.20,215.50 L 109.50,215.50" fill="none" stroke="#ffffff" stroke-width="1.00" stroke-linecap="round" stroke-linejoin="round" shape-rendering="crispEdges"/>
<rect x="59" y="234" width="33" height="2" fill="#9a9a9a"/>
<rect x="92" y="234" width="54" height="1" fill="#ffffff"/>
<path d="M 103.20,222.50 L 109.50,222.50 L 105.90,225.83 L 108.15,225.83 L 109.50,226.83 L 109.50,229.50 L 108.15,230.50 L 103.20,230.50" fill="none" stroke="#ffffff" stroke-width="1.00" stroke-linecap="round" stroke-linejoin="round" shape-rendering="crispEdges"/>
<rect x="59" y="249" width="33" height="2" fill="#9a9a9a"/>
<rect x="92" y="249" width="54" height="1" fill="#ffffff"/>
<path d="M 107.70,245.50 L 107.70,237.50 L 103.20,243.17 L 109.50,243.17" fill="none" stroke="#ffffff" stroke-width="1.00" stroke-linecap="round" stroke-linejoin="round" shape-rendering="crispEdges"/>
<path d="M 49.25,186.05 L 49.25,172.95 L 57.26,172.95 L 59.45,174.59 L 59.45,178.41 L 57.26,180.05 L 49.25,180.05 M 64.99,174.26 L 68.19,172.95 L 68.19,186.05" fill="none" stroke="#249a94" stroke-width="1.90" stroke-linecap="round" stroke-linejoin="round"/>
<path d="M 17.84,288.55 L 17.84,271.55 L 10.65,283.59 L 20.72,283.59 M 25.75,288.55 L 25.75,271.55 L 33.67,271.55 L 35.82,273.68 L 35.82,278.63 L 33.67,280.76 L 25.75,280.76 M 40.86,271.55 L 40.86,288.55 M 45.89,288.55 L 45.89,271.55 L 55.96,288.55 L 55.96,271.55 M 61.00,291.38 L 71.07,291.38 M 76.54,273.25 L 79.70,271.55 L 79.70,288.55 M 89.05,271.55 L 93.37,271.55 L 96.24,275.09 L 96.24,285.01 L 93.37,288.55 L 89.05,288.55 L 86.17,285.01 L 86.17,275.09 Z M 86.89,285.72 L 95.53,274.38 M 104.16,271.55 L 108.47,271.55 L 111.35,275.09 L 111.35,285.01 L 108.47,288.55 L 104.16,288.55 L 101.28,285.01 L 101.28,275.09 Z M 102.00,285.72 L 110.63,274.38" fill="none" stroke="#249a94" stroke-width="1.90" stroke-linecap="round" stroke-linejoin="round"/>
<path d="M145.5,204.5 L148.5,197.5 L170.1,197.5 L170.1,211.5 L148.5,211.5 Z" fill="none" stroke="#40e8e0" stroke-width="1" shape-rendering="crispEdges"/>
<path d="M 151.40,208.50 L 151.40,203.50 L 154.60,203.50 L 155.47,204.12 L 155.47,205.58 L 154.60,206.21 L 151.40,206.21 M 153.73,206.21 L 155.47,208.50 M 161.29,203.50 L 157.51,203.50 L 157.51,208.50 L 161.29,208.50 M 157.51,206.00 L 160.42,206.00 M 163.33,203.50 L 165.95,203.50 L 167.40,204.54 L 167.40,207.46 L 165.95,208.50 L 163.33,208.50 Z" fill="none" stroke="#ffffff" stroke-width="1.00" stroke-linecap="round" stroke-linejoin="round" shape-rendering="crispEdges"/>
<path d="M145.5,219.5 L148.5,212.5 L186.2,212.5 L186.2,226.5 L148.5,226.5 Z" fill="none" stroke="#40e8e0" stroke-width="1" shape-rendering="crispEdges"/>
<path d="M 151.40,218.50 L 153.26,221.00 L 155.12,218.50 M 153.26,221.00 L 153.26,223.50 M 160.43,218.50 L 156.98,218.50 L 156.98,223.50 L 160.43,223.50 M 156.98,221.00 L 159.63,221.00 M 162.29,218.50 L 162.29,223.50 L 165.21,223.50 M 167.07,218.50 L 167.07,223.50 L 169.99,223.50 M 172.91,218.50 L 174.50,218.50 L 175.56,219.54 L 175.56,222.46 L 174.50,223.50 L 172.91,223.50 L 171.84,222.46 L 171.84,219.54 Z M 177.42,218.50 L 178.48,223.50 L 179.81,220.17 L 181.14,223.50 L 182.20,218.50" fill="none" stroke="#ffffff" stroke-width="1.00" stroke-linecap="round" stroke-linejoin="round" shape-rendering="crispEdges"/>
<path d="M145.5,234.5 L148.5,227.5 L177.8,227.5 L177.8,241.5 L148.5,241.5 Z" fill="none" stroke="#40e8e0" stroke-width="1" shape-rendering="crispEdges"/>
<path d="M 151.40,233.50 L 152.40,238.50 L 153.66,235.17 L 154.91,238.50 L 155.91,233.50 M 157.66,233.50 L 157.66,238.50 M 161.17,233.50 L 161.17,238.50 M 157.66,236.00 L 161.17,236.00 M 162.93,233.50 L 162.93,238.50 M 164.68,233.50 L 168.19,233.50 M 166.43,233.50 L 166.43,238.50 M 173.20,233.50 L 169.94,233.50 L 169.94,238.50 L 173.20,238.50 M 169.94,236.00 L 172.45,236.00" fill="none" stroke="#ffffff" stroke-width="1.00" stroke-linecap="round" stroke-linejoin="round" shape-rendering="crispEdges"/>
<path d="M145.5,249.5 L148.5,242.5 L175.2,242.5 L175.2,256.5 L148.5,256.5 Z" fill="none" stroke="#40e8e0" stroke-width="1" shape-rendering="crispEdges"/>
<path d="M 151.40,253.50 L 151.40,248.50 L 154.49,248.50 L 155.01,248.92 L 155.01,250.58 L 154.49,251.00 L 151.40,251.00 M 154.49,251.00 L 155.01,251.42 L 155.01,253.08 L 154.49,253.50 L 151.40,253.50 M 156.81,248.50 L 156.81,253.50 L 159.64,253.50 M 161.44,248.50 L 161.44,252.88 L 162.22,253.50 L 164.28,253.50 L 165.05,252.88 L 165.05,248.50 M 170.20,248.50 L 166.85,248.50 L 166.85,253.50 L 170.20,253.50 M 166.85,251.00 L 169.43,251.00" fill="none" stroke="#ffffff" stroke-width="1.00" stroke-linecap="round" stroke-linejoin="round" shape-rendering="crispEdges"/>
<path d="M 199.10,203.60 L 199.10,195.70 L 206.15,203.60 L 206.15,195.70 M 216.74,199.98 L 211.19,199.98 L 209.68,198.99 L 209.68,196.36 L 210.69,195.70 L 215.73,195.70 L 216.74,196.36 L 216.74,203.60 L 210.19,203.60 M 220.26,197.67 L 220.26,198.33 M 220.26,201.62 L 220.26,202.28 M 224.09,196.49 L 226.31,195.70 L 226.31,203.60 M 230.85,195.70 L 237.90,195.70 L 233.87,198.99 L 236.39,198.99 L 237.90,199.98 L 237.90,202.61 L 236.39,203.60 L 230.85,203.60" fill="none" stroke="#fff" stroke-width="2" stroke-linecap="square" stroke-linejoin="miter" shape-rendering="crispEdges"/>
<path d="M 199.10,221.60 L 199.10,214.10 L 205.72,221.60 L 205.72,214.10 M 215.66,218.16 L 210.45,218.16 L 209.03,217.22 L 209.03,214.72 L 209.98,214.10 L 214.71,214.10 L 215.66,214.72 L 215.66,221.60 L 209.51,221.60 M 218.97,215.97 L 218.97,216.60 M 218.97,219.72 L 218.97,220.35 M 222.28,215.04 L 223.70,214.10 L 227.48,214.10 L 228.90,215.04 L 228.90,216.91 L 222.28,221.60 L 228.90,221.60" fill="none" stroke="#fff" stroke-width="2" stroke-linecap="square" stroke-linejoin="miter" shape-rendering="crispEdges"/>
<path d="M 199.10,239.60 L 199.10,232.10 L 204.64,232.10 L 206.15,233.04 L 206.15,235.22 L 204.64,236.16 L 199.10,236.16 M 216.74,236.16 L 211.19,236.16 L 209.68,235.22 L 209.68,232.72 L 210.69,232.10 L 215.73,232.10 L 216.74,232.72 L 216.74,239.60 L 210.19,239.60 M 220.26,233.97 L 220.26,234.60 M 220.26,237.72 L 220.26,238.35 M 224.09,232.85 L 226.31,232.10 L 226.31,239.60 M 232.86,232.10 L 235.88,232.10 L 237.90,233.66 L 237.90,238.04 L 235.88,239.60 L 232.86,239.60 L 230.85,238.04 L 230.85,233.66 Z M 231.35,238.35 L 237.40,233.35" fill="none" stroke="#fff" stroke-width="2" stroke-linecap="square" stroke-linejoin="miter" shape-rendering="crispEdges"/>
<path d="M 199.10,257.60 L 199.10,250.10 L 205.72,257.60 L 205.72,250.10 M 210.45,250.10 L 214.24,250.10 L 215.66,251.04 L 215.66,252.91 L 214.24,253.85 L 210.45,253.85 L 209.03,252.91 L 209.03,251.04 Z M 210.45,253.85 L 209.03,254.79 L 209.03,256.66 L 210.45,257.60 L 214.24,257.60 L 215.66,256.66 L 215.66,254.79 L 214.24,253.85 M 218.97,251.97 L 218.97,252.60 M 218.97,255.73 L 218.97,256.35 M 222.28,250.10 L 228.90,250.10 L 225.12,253.22 L 227.48,253.22 L 228.90,254.16 L 228.90,256.66 L 227.48,257.60 L 222.28,257.60" fill="none" stroke="#fff" stroke-width="2" stroke-linecap="square" stroke-linejoin="miter" shape-rendering="crispEdges"/>
<path d="M372.5,522.5 L369.5,515.5 L348.0,515.5 L348.0,529.5 L369.5,529.5 Z" fill="none" stroke="#40e8e0" stroke-width="1" shape-rendering="crispEdges"/>
<rect x="372" y="522" width="8" height="1" fill="#ffffff"/>
<path d="M 350.50,521.50 L 352.34,526.50 L 354.18,521.50 M 359.69,522.33 L 358.64,521.50 L 357.06,521.50 L 356.01,522.54 L 356.01,525.46 L 357.06,526.50 L 358.64,526.50 L 359.69,525.67 M 365.20,522.33 L 364.15,521.50 L 362.57,521.50 L 361.52,522.54 L 361.52,525.46 L 362.57,526.50 L 364.15,526.50 L 365.20,525.67" fill="none" stroke="#ffffff" stroke-width="1.00" stroke-linecap="round" stroke-linejoin="round" shape-rendering="crispEdges"/>
<path d="M372.5,552.5 L369.5,545.5 L331.7,545.5 L331.7,559.5 L369.5,559.5 Z" fill="none" stroke="#40e8e0" stroke-width="1" shape-rendering="crispEdges"/>
<rect x="372" y="552" width="8" height="1" fill="#ffffff"/>
<path d="M 334.20,551.50 L 336.09,554.00 L 337.98,551.50 M 336.09,554.00 L 336.09,556.50 M 343.37,551.50 L 339.87,551.50 L 339.87,556.50 L 343.37,556.50 M 339.87,554.00 L 342.56,554.00 M 345.26,551.50 L 345.26,556.50 L 348.23,556.50 M 350.12,551.50 L 350.12,556.50 L 353.09,556.50 M 356.06,551.50 L 357.68,551.50 L 358.75,552.54 L 358.75,555.46 L 357.68,556.50 L 356.06,556.50 L 354.98,555.46 L 354.98,552.54 Z M 360.64,551.50 L 361.72,556.50 L 363.07,553.17 L 364.42,556.50 L 365.50,551.50" fill="none" stroke="#ffffff" stroke-width="1.00" stroke-linecap="round" stroke-linejoin="round" shape-rendering="crispEdges"/>
<path d="M372.5,567.5 L369.5,560.5 L348.0,560.5 L348.0,574.5 L369.5,574.5 Z" fill="none" stroke="#40e8e0" stroke-width="1" shape-rendering="crispEdges"/>
<rect x="372" y="567" width="8" height="1" fill="#ffffff"/>
<path d="M 350.50,571.50 L 350.50,566.50 L 353.50,566.50 L 354.32,567.12 L 354.32,568.58 L 353.50,569.21 L 350.50,569.21 M 352.68,569.21 L 354.32,571.50 M 359.77,566.50 L 356.23,566.50 L 356.23,571.50 L 359.77,571.50 M 356.23,569.00 L 358.95,569.00 M 361.68,566.50 L 364.14,566.50 L 365.50,567.54 L 365.50,570.46 L 364.14,571.50 L 361.68,571.50 Z" fill="none" stroke="#ffffff" stroke-width="1.00" stroke-linecap="round" stroke-linejoin="round" shape-rendering="crispEdges"/>
<path d="M659.5,839.5 L662.5,832.5 L684.5,832.5 L684.5,846.5 L662.5,846.5 Z" fill="none" stroke="#40e8e0" stroke-width="1" shape-rendering="crispEdges"/>
<rect x="651" y="839" width="9" height="1" fill="#ffffff"/>
<path d="M 665.50,838.50 L 667.25,843.50 L 669.00,838.50 M 674.25,839.33 L 673.25,838.50 L 671.75,838.50 L 670.75,839.54 L 670.75,842.46 L 671.75,843.50 L 673.25,843.50 L 674.25,842.67 M 679.50,839.33 L 678.50,838.50 L 677.00,838.50 L 676.00,839.54 L 676.00,842.46 L 677.00,843.50 L 678.50,843.50 L 679.50,842.67" fill="none" stroke="#ffffff" stroke-width="1.00" stroke-linecap="round" stroke-linejoin="round" shape-rendering="crispEdges"/>
<path d="M916.5,855.5 L919.5,848.5 L950.5,848.5 L950.5,862.5 L919.5,862.5 Z" fill="none" stroke="#40e8e0" stroke-width="1" shape-rendering="crispEdges"/>
<rect x="909" y="855" width="8" height="1" fill="#ffffff"/>
<path d="M 922.50,854.50 L 923.56,859.50 L 924.88,856.17 L 926.20,859.50 L 927.26,854.50 M 929.11,854.50 L 929.11,859.50 M 932.81,854.50 L 932.81,859.50 M 929.11,857.00 L 932.81,857.00 M 934.66,854.50 L 934.66,859.50 M 936.51,854.50 L 940.21,854.50 M 938.36,854.50 L 938.36,859.50 M 945.50,854.50 L 942.06,854.50 L 942.06,859.50 L 945.50,859.50 M 942.06,857.00 L 944.71,857.00" fill="none" stroke="#ffffff" stroke-width="1.00" stroke-linecap="round" stroke-linejoin="round" shape-rendering="crispEdges"/>
<path d="M1007.5,734.5 L1004.5,727.5 L983.5,727.5 L983.5,741.5 L1004.5,741.5 Z" fill="none" stroke="#40e8e0" stroke-width="1" shape-rendering="crispEdges"/>
<rect x="1007" y="734" width="9" height="1" fill="#ffffff"/>
<path d="M 986.00,733.50 L 987.81,738.50 L 989.62,733.50 M 995.06,734.33 L 994.03,733.50 L 992.47,733.50 L 991.44,734.54 L 991.44,737.46 L 992.47,738.50 L 994.03,738.50 L 995.06,737.67 M 1000.50,734.33 L 999.46,733.50 L 997.91,733.50 L 996.88,734.54 L 996.88,737.46 L 997.91,738.50 L 999.46,738.50 L 1000.50,737.67" fill="none" stroke="#ffffff" stroke-width="1.00" stroke-linecap="round" stroke-linejoin="round" shape-rendering="crispEdges"/>
<path d="M1280.5,915.5 L1283.5,908.5 L1306.2,908.5 L1306.2,922.5 L1283.5,922.5 Z" fill="none" stroke="#40e8e0" stroke-width="1" shape-rendering="crispEdges"/>
<rect x="1272" y="915" width="9" height="1" fill="#ffffff"/>
<path d="M 1290.00,915.12 L 1289.25,914.50 L 1287.25,914.50 L 1286.50,915.12 L 1286.50,918.88 L 1287.25,919.50 L 1289.25,919.50 L 1290.00,918.88 L 1290.00,917.21 L 1288.50,917.21 M 1291.75,919.50 L 1291.75,914.50 L 1295.25,919.50 L 1295.25,914.50 M 1297.00,914.50 L 1299.25,914.50 L 1300.50,915.54 L 1300.50,918.46 L 1299.25,919.50 L 1297.00,919.50 Z" fill="none" stroke="#ffffff" stroke-width="1.00" stroke-linecap="round" stroke-linejoin="round" shape-rendering="crispEdges"/>
<path d="M1280.5,930.5 L1283.5,923.5 L1309.9,923.5 L1309.9,937.5 L1283.5,937.5 Z" fill="none" stroke="#40e8e0" stroke-width="1" shape-rendering="crispEdges"/>
<rect x="1272" y="930" width="9" height="1" fill="#ffffff"/>
<path d="M 1286.50,934.50 L 1286.50,929.50 L 1289.46,929.50 L 1289.95,929.92 L 1289.95,931.58 L 1289.46,932.00 L 1286.50,932.00 M 1289.46,932.00 L 1289.95,932.42 L 1289.95,934.08 L 1289.46,934.50 L 1286.50,934.50 M 1291.68,929.50 L 1291.68,934.50 L 1294.39,934.50 M 1296.12,929.50 L 1296.12,933.88 L 1296.86,934.50 L 1298.83,934.50 L 1299.57,933.88 L 1299.57,929.50 M 1304.50,929.50 L 1301.29,929.50 L 1301.29,934.50 L 1304.50,934.50 M 1301.29,932.00 L 1303.76,932.00" fill="none" stroke="#ffffff" stroke-width="1.00" stroke-linecap="round" stroke-linejoin="round" shape-rendering="crispEdges"/>
<path d="M1280.5,945.5 L1283.5,938.5 L1305.4,938.5 L1305.4,952.5 L1283.5,952.5 Z" fill="none" stroke="#40e8e0" stroke-width="1" shape-rendering="crispEdges"/>
<rect x="1272" y="945" width="9" height="1" fill="#ffffff"/>
<path d="M 1286.50,944.50 L 1288.19,949.50 L 1289.88,944.50 M 1294.94,945.33 L 1293.97,944.50 L 1292.53,944.50 L 1291.56,945.54 L 1291.56,948.46 L 1292.53,949.50 L 1293.97,949.50 L 1294.94,948.67 M 1300.00,945.33 L 1299.04,944.50 L 1297.59,944.50 L 1296.62,945.54 L 1296.62,948.46 L 1297.59,949.50 L 1299.04,949.50 L 1300.00,948.67" fill="none" stroke="#ffffff" stroke-width="1.00" stroke-linecap="round" stroke-linejoin="round" shape-rendering="crispEdges"/>
<rect x="1045" y="734" width="46" height="1" fill="#ffffff"/>
<path d="M1089.5,734.5 L1093,726.5 L1101.5,741 L1109,726.5 L1117,741 L1125,726.5 L1133,741 L1136.5,734.5" fill="none" stroke="#9a9a9a" stroke-width="1.6"/>
<rect x="1137" y="734" width="45" height="1" fill="#ffffff"/>
<path d="M 1101.55,719.05 L 1101.55,705.55 L 1109.33,705.55 L 1111.45,707.24 L 1111.45,711.18 L 1109.33,712.86 L 1101.55,712.86 M 1107.21,712.86 L 1111.45,719.05 M 1116.82,706.90 L 1119.94,705.55 L 1119.94,719.05" fill="none" stroke="#249a94" stroke-width="1.90" stroke-linecap="round" stroke-linejoin="round"/>
<rect x="1060" y="779" width="51" height="1" fill="#ffffff"/>
<rect x="1110" y="769" width="2" height="22" fill="#9a9a9a"/>
<path d="M1119.5,767.5 Q1113,779 1119.5,791" fill="none" stroke="#9a9a9a" stroke-width="1.6"/>
<rect x="1117" y="779" width="50" height="1" fill="#ffffff"/>
<path d="M 1111.70,748.90 L 1108.94,746.65 L 1104.81,746.65 L 1102.05,749.46 L 1102.05,757.34 L 1104.81,760.15 L 1108.94,760.15 L 1111.70,757.90 M 1116.94,748.00 L 1119.97,746.65 L 1119.97,760.15" fill="none" stroke="#249a94" stroke-width="1.90" stroke-linecap="round" stroke-linejoin="round"/>
<rect x="1075" y="847" width="76" height="106" fill="none" stroke="#9a9a9a" stroke-width="2"/>
<rect x="1151" y="870" width="91" height="1" fill="#ffffff"/>
<rect x="1151" y="885" width="91" height="1" fill="#ffffff"/>
<rect x="1151" y="915" width="91" height="1" fill="#ffffff"/>
<rect x="1151" y="930" width="91" height="1" fill="#ffffff"/>
<rect x="1151" y="945" width="91" height="1" fill="#ffffff"/>
<rect x="984" y="885" width="92" height="1" fill="#ffffff"/>
<rect x="984" y="930" width="82" height="1" fill="#ffffff"/>
<circle cx="1070.0" cy="930.5" r="4.5" fill="none" stroke="#ffffff" stroke-width="1" shape-rendering="crispEdges"/>
<rect x="981.5" y="927.5" width="5" height="5" fill="none" stroke="#e8e870" stroke-width="1"/>
<path d="M1151,911.0 L1136.5,915.5 L1151,920.0" fill="none" stroke="#ffffff" stroke-width="1" shape-rendering="crispEdges"/>
<circle cx="1155.5" cy="915.5" r="5.0" fill="none" stroke="#ffffff" stroke-width="1" shape-rendering="crispEdges"/>
<path d="M1151,926.0 L1136.5,930.5 L1151,935.0" fill="none" stroke="#ffffff" stroke-width="1" shape-rendering="crispEdges"/>
<path d="M1151,941.0 L1136.5,945.5 L1151,950.0" fill="none" stroke="#ffffff" stroke-width="1" shape-rendering="crispEdges"/>
<circle cx="1155.5" cy="945.5" r="5.0" fill="none" stroke="#ffffff" stroke-width="1" shape-rendering="crispEdges"/>
<path d="M 1137.40,867.55 L 1135.69,866.20 L 1133.11,866.20 L 1131.40,867.89 L 1131.40,872.61 L 1133.11,874.30 L 1135.69,874.30 L 1137.40,872.95 M 1140.40,866.20 L 1146.40,874.30 M 1146.40,866.20 L 1140.40,874.30" fill="none" stroke="#ffffff" stroke-width="1.00" stroke-linecap="round" stroke-linejoin="round" shape-rendering="crispEdges"/>
<path d="M 1105.60,889.30 L 1105.60,881.10 L 1110.27,881.10 L 1111.55,882.12 L 1111.55,884.52 L 1110.27,885.54 L 1105.60,885.54 M 1109.00,885.54 L 1111.55,889.30 M 1114.52,881.10 L 1120.47,889.30 M 1120.47,881.10 L 1114.52,889.30 M 1123.45,889.30 L 1128.55,881.10 M 1137.48,882.47 L 1135.78,881.10 L 1133.23,881.10 L 1131.53,882.81 L 1131.53,887.59 L 1133.23,889.30 L 1135.78,889.30 L 1137.48,887.93 M 1140.45,881.10 L 1146.40,889.30 M 1146.40,881.10 L 1140.45,889.30" fill="none" stroke="#ffffff" stroke-width="1.00" stroke-linecap="round" stroke-linejoin="round" shape-rendering="crispEdges"/>
<path d="M 1081.40,881.10 L 1084.40,881.10 L 1086.40,882.81 L 1086.40,887.59 L 1084.40,889.30 L 1081.40,889.30 L 1079.40,887.59 L 1079.40,882.81 Z" fill="none" stroke="#ffffff" stroke-width="1.00" stroke-linecap="round" stroke-linejoin="round" shape-rendering="crispEdges"/>
<path d="M 1081.40,927.30 L 1084.40,927.30 L 1086.40,928.97 L 1086.40,933.63 L 1084.40,935.30 L 1081.40,935.30 L 1079.40,933.63 L 1079.40,928.97 Z" fill="none" stroke="#ffffff" stroke-width="1.00" stroke-linecap="round" stroke-linejoin="round" shape-rendering="crispEdges"/>
<rect x="1078" y="923" width="10" height="1" fill="#ffffff"/>
<path d="M 1125.60,920.30 L 1129.70,911.90 L 1133.80,920.30 M 1127.01,917.50 L 1132.39,917.50" fill="none" stroke="#ffffff" stroke-width="1.00" stroke-linecap="round" stroke-linejoin="round" shape-rendering="crispEdges"/>
<path d="M 1124.50,935.10 L 1124.50,926.80 L 1130.50,926.80 L 1131.50,927.49 L 1131.50,930.26 L 1130.50,930.95 L 1124.50,930.95 M 1130.50,930.95 L 1131.50,931.64 L 1131.50,934.41 L 1130.50,935.10 L 1124.50,935.10" fill="none" stroke="#ffffff" stroke-width="1.00" stroke-linecap="round" stroke-linejoin="round" shape-rendering="crispEdges"/>
<path d="M 1114.42,943.00 L 1112.73,941.60 L 1110.19,941.60 L 1108.50,943.35 L 1108.50,948.25 L 1110.19,950.00 L 1112.73,950.00 L 1114.42,948.60 M 1117.38,941.60 L 1117.38,950.00 L 1122.02,950.00 M 1124.98,950.00 L 1124.98,941.60 L 1129.63,941.60 L 1130.90,942.65 L 1130.90,945.10 L 1129.63,946.15 L 1124.98,946.15 M 1128.36,946.15 L 1130.90,950.00" fill="none" stroke="#ffffff" stroke-width="1.00" stroke-linecap="round" stroke-linejoin="round" shape-rendering="crispEdges"/>
<rect x="1107" y="938" width="26" height="1" fill="#ffffff"/>
<path d="M 1166.82,859.72 L 1166.38,859.40 L 1162.42,859.40 L 1161.10,860.36 L 1161.10,866.14 L 1162.42,867.10 L 1165.94,867.10 L 1167.26,866.14 L 1167.26,864.21 L 1165.94,863.25 L 1162.42,863.25 L 1161.10,864.21" fill="none" stroke="#ffffff" stroke-width="1" stroke-linecap="round" stroke-linejoin="round" shape-rendering="crispEdges"/>
<path d="M 1161.10,873.60 L 1167.26,873.60 L 1162.86,882.50" fill="none" stroke="#ffffff" stroke-width="1" stroke-linecap="round" stroke-linejoin="round" shape-rendering="crispEdges"/>
<path d="M 1167.26,908.73 L 1162.42,908.73 L 1161.10,907.75 L 1161.10,905.15 L 1161.98,904.50 L 1166.38,904.50 L 1167.26,905.15 L 1167.26,912.30 L 1161.54,912.30" fill="none" stroke="#ffffff" stroke-width="1" stroke-linecap="round" stroke-linejoin="round" shape-rendering="crispEdges"/>
<path d="M 1161.96,921.57 L 1163.90,920.80 L 1163.90,928.50 M 1169.62,920.80 L 1172.26,920.80 L 1174.02,922.40 L 1174.02,926.90 L 1172.26,928.50 L 1169.62,928.50 L 1167.86,926.90 L 1167.86,922.40 Z M 1168.30,927.22 L 1173.58,922.08" fill="none" stroke="#ffffff" stroke-width="1" stroke-linecap="round" stroke-linejoin="round" shape-rendering="crispEdges"/>
<path d="M 1161.96,936.23 L 1163.90,935.50 L 1163.90,942.80 M 1168.12,936.23 L 1170.06,935.50 L 1170.06,942.80" fill="none" stroke="#ffffff" stroke-width="1" stroke-linecap="round" stroke-linejoin="round" shape-rendering="crispEdges"/>
<path d="M 1065.20,873.60 L 1059.04,873.60 L 1059.04,877.68 L 1063.88,877.68 L 1065.20,878.79 L 1065.20,881.39 L 1063.88,882.50 L 1060.36,882.50 L 1059.04,881.39" fill="none" stroke="#ffffff" stroke-width="1" stroke-linecap="round" stroke-linejoin="round" shape-rendering="crispEdges"/>
<path d="M 1051.44,921.57 L 1053.38,920.80 L 1053.38,928.50 M 1057.34,921.76 L 1058.66,920.80 L 1062.18,920.80 L 1063.50,921.76 L 1063.50,923.69 L 1057.34,928.50 L 1063.50,928.50" fill="none" stroke="#ffffff" stroke-width="1" stroke-linecap="round" stroke-linejoin="round" shape-rendering="crispEdges"/>
<path d="M 1090.35,824.65 L 1090.35,835.06 L 1092.69,836.55 L 1098.93,836.55 L 1101.28,835.06 L 1101.28,824.65 M 1107.21,825.84 L 1110.64,824.65 L 1110.64,836.55 M 1117.66,827.63 L 1117.66,828.62 M 1117.66,833.58 L 1117.66,834.57 M 1123.12,836.55 L 1123.12,824.65 L 1132.49,824.65 L 1134.05,825.64 L 1134.05,829.61 L 1132.49,830.60 L 1123.12,830.60 M 1132.49,830.60 L 1134.05,831.59 L 1134.05,835.56 L 1132.49,836.55 L 1123.12,836.55" fill="none" stroke="#249a94" stroke-width="1.90" stroke-linecap="round" stroke-linejoin="round"/>
<path d="M 1058.68,968.64 L 1056.72,966.95 L 1051.51,966.95 L 1049.55,968.64 L 1049.55,971.45 L 1058.68,975.95 L 1058.68,978.76 L 1056.72,980.45 L 1051.51,980.45 L 1049.55,978.76 M 1063.24,980.45 L 1063.24,966.95 L 1072.36,980.45 L 1072.36,966.95 M 1076.93,966.95 L 1086.05,966.95 L 1079.53,980.45 M 1097.13,980.45 L 1097.13,966.95 L 1090.61,976.51 L 1099.74,976.51 M 1104.30,966.95 L 1104.30,980.45 L 1111.47,980.45 M 1125.16,968.64 L 1123.20,966.95 L 1117.99,966.95 L 1116.03,968.64 L 1116.03,971.45 L 1125.16,975.95 L 1125.16,978.76 L 1123.20,980.45 L 1117.99,980.45 L 1116.03,978.76 M 1130.11,968.30 L 1132.98,966.95 L 1132.98,980.45 M 1138.85,968.64 L 1140.80,966.95 L 1146.02,966.95 L 1147.97,968.64 L 1147.97,972.01 L 1138.85,980.45 L 1147.97,980.45 M 1152.54,966.95 L 1161.66,966.95 L 1156.45,972.58 L 1159.71,972.58 L 1161.66,974.26 L 1161.66,978.76 L 1159.71,980.45 L 1152.54,980.45 M 1166.22,980.45 L 1166.22,966.95 L 1175.35,980.45 L 1175.35,966.95" fill="none" stroke="#249a94" stroke-width="1.90" stroke-linecap="round" stroke-linejoin="round"/>
<path d="M682.5,594.0 l3.5,3.5 l-3.5,3.5 l-3.5,-3.5 z" fill="#22e022"/>
<path d="M667.5,609.0 l3.5,3.5 l-3.5,3.5 l-3.5,-3.5 z" fill="#22e022"/>
<path d="M425.5,609.0 l3.5,3.5 l-3.5,3.5 l-3.5,-3.5 z" fill="#22e022"/>
<path d="M425.5,625.0 l3.5,3.5 l-3.5,3.5 l-3.5,-3.5 z" fill="#22e022"/>
<path d="M425.5,640.0 l3.5,3.5 l-3.5,3.5 l-3.5,-3.5 z" fill="#22e022"/>
<path d="M1272.5,776.0 l3.5,3.5 l-3.5,3.5 l-3.5,-3.5 z" fill="#22e022"/>
<path d="M16 83h1v1h-1zM16 98h1v1h-1zM16 113h1v1h-1zM16 128h1v1h-1zM16 144h1v1h-1zM16 159h1v1h-1zM16 174h1v1h-1zM16 189h1v1h-1zM16 204h1v1h-1zM16 219h1v1h-1zM16 234h1v1h-1zM16 249h1v1h-1zM16 265h1v1h-1zM16 280h1v1h-1zM16 295h1v1h-1zM16 310h1v1h-1zM16 325h1v1h-1zM16 340h1v1h-1zM16 355h1v1h-1zM16 370h1v1h-1zM16 386h1v1h-1zM16 401h1v1h-1zM16 416h1v1h-1zM16 431h1v1h-1zM16 446h1v1h-1zM16 461h1v1h-1zM16 476h1v1h-1zM16 491h1v1h-1zM16 507h1v1h-1zM16 522h1v1h-1zM16 537h1v1h-1zM16 552h1v1h-1zM16 567h1v1h-1zM16 582h1v1h-1zM16 597h1v1h-1zM16 612h1v1h-1zM16 628h1v1h-1zM16 643h1v1h-1zM16 658h1v1h-1zM16 673h1v1h-1zM16 688h1v1h-1zM16 703h1v1h-1zM16 718h1v1h-1zM16 734h1v1h-1zM16 749h1v1h-1zM16 764h1v1h-1zM16 779h1v1h-1zM16 794h1v1h-1zM16 809h1v1h-1zM16 824h1v1h-1zM16 839h1v1h-1zM16 855h1v1h-1zM16 870h1v1h-1zM16 885h1v1h-1zM16 900h1v1h-1zM16 915h1v1h-1zM16 930h1v1h-1zM16 945h1v1h-1zM16 960h1v1h-1zM16 976h1v1h-1zM31 83h1v1h-1zM31 98h1v1h-1zM31 113h1v1h-1zM31 128h1v1h-1zM31 144h1v1h-1zM31 159h1v1h-1zM31 174h1v1h-1zM31 189h1v1h-1zM31 204h1v1h-1zM31 219h1v1h-1zM31 234h1v1h-1zM31 249h1v1h-1zM31 265h1v1h-1zM31 280h1v1h-1zM31 295h1v1h-1zM31 310h1v1h-1zM31 325h1v1h-1zM31 340h1v1h-1zM31 355h1v1h-1zM31 370h1v1h-1zM31 386h1v1h-1zM31 401h1v1h-1zM31 416h1v1h-1zM31 431h1v1h-1zM31 446h1v1h-1zM31 461h1v1h-1zM31 476h1v1h-1zM31 491h1v1h-1zM31 507h1v1h-1zM31 522h1v1h-1zM31 537h1v1h-1zM31 552h1v1h-1zM31 567h1v1h-1zM31 582h1v1h-1zM31 597h1v1h-1zM31 612h1v1h-1zM31 628h1v1h-1zM31 643h1v1h-1zM31 658h1v1h-1zM31 673h1v1h-1zM31 688h1v1h-1zM31 703h1v1h-1zM31 718h1v1h-1zM31 734h1v1h-1zM31 749h1v1h-1zM31 764h1v1h-1zM31 779h1v1h-1zM31 794h1v1h-1zM31 809h1v1h-1zM31 824h1v1h-1zM31 839h1v1h-1zM31 855h1v1h-1zM31 870h1v1h-1zM31 885h1v1h-1zM31 900h1v1h-1zM31 915h1v1h-1zM31 930h1v1h-1zM31 945h1v1h-1zM31 960h1v1h-1zM31 976h1v1h-1zM46 83h1v1h-1zM46 98h1v1h-1zM46 113h1v1h-1zM46 128h1v1h-1zM46 144h1v1h-1zM46 159h1v1h-1zM46 174h1v1h-1zM46 189h1v1h-1zM46 204h1v1h-1zM46 219h1v1h-1zM46 234h1v1h-1zM46 249h1v1h-1zM46 265h1v1h-1zM46 280h1v1h-1zM46 295h1v1h-1zM46 310h1v1h-1zM46 325h1v1h-1zM46 340h1v1h-1zM46 355h1v1h-1zM46 370h1v1h-1zM46 386h1v1h-1zM46 401h1v1h-1zM46 416h1v1h-1zM46 431h1v1h-1zM46 446h1v1h-1zM46 461h1v1h-1zM46 476h1v1h-1zM46 491h1v1h-1zM46 507h1v1h-1zM46 522h1v1h-1zM46 537h1v1h-1zM46 552h1v1h-1zM46 567h1v1h-1zM46 582h1v1h-1zM46 597h1v1h-1zM46 612h1v1h-1zM46 628h1v1h-1zM46 643h1v1h-1zM46 658h1v1h-1zM46 673h1v1h-1zM46 688h1v1h-1zM46 703h1v1h-1zM46 718h1v1h-1zM46 734h1v1h-1zM46 749h1v1h-1zM46 764h1v1h-1zM46 779h1v1h-1zM46 794h1v1h-1zM46 809h1v1h-1zM46 824h1v1h-1zM46 839h1v1h-1zM46 855h1v1h-1zM46 870h1v1h-1zM46 885h1v1h-1zM46 900h1v1h-1zM46 915h1v1h-1zM46 930h1v1h-1zM46 945h1v1h-1zM46 960h1v1h-1zM46 976h1v1h-1zM61 83h1v1h-1zM61 98h1v1h-1zM61 113h1v1h-1zM61 128h1v1h-1zM61 144h1v1h-1zM61 159h1v1h-1zM61 174h1v1h-1zM61 189h1v1h-1zM61 204h1v1h-1zM61 219h1v1h-1zM61 234h1v1h-1zM61 249h1v1h-1zM61 265h1v1h-1zM61 280h1v1h-1zM61 295h1v1h-1zM61 310h1v1h-1zM61 325h1v1h-1zM61 340h1v1h-1zM61 355h1v1h-1zM61 370h1v1h-1zM61 386h1v1h-1zM61 476h1v1h-1zM61 491h1v1h-1zM61 507h1v1h-1zM61 522h1v1h-1zM61 537h1v1h-1zM61 552h1v1h-1zM61 567h1v1h-1zM61 582h1v1h-1zM61 597h1v1h-1zM61 612h1v1h-1zM61 628h1v1h-1zM61 643h1v1h-1zM61 658h1v1h-1zM61 673h1v1h-1zM61 688h1v1h-1zM61 703h1v1h-1zM61 718h1v1h-1zM61 734h1v1h-1zM61 749h1v1h-1zM61 764h1v1h-1zM61 779h1v1h-1zM61 794h1v1h-1zM61 809h1v1h-1zM61 824h1v1h-1zM61 839h1v1h-1zM61 855h1v1h-1zM61 870h1v1h-1zM61 885h1v1h-1zM61 900h1v1h-1zM61 915h1v1h-1zM61 930h1v1h-1zM61 945h1v1h-1zM61 960h1v1h-1zM61 976h1v1h-1zM77 83h1v1h-1zM77 98h1v1h-1zM77 113h1v1h-1zM77 128h1v1h-1zM77 144h1v1h-1zM77 159h1v1h-1zM77 174h1v1h-1zM77 189h1v1h-1zM77 204h1v1h-1zM77 219h1v1h-1zM77 234h1v1h-1zM77 249h1v1h-1zM77 265h1v1h-1zM77 280h1v1h-1zM77 295h1v1h-1zM77 310h1v1h-1zM77 325h1v1h-1zM77 340h1v1h-1zM77 355h1v1h-1zM77 370h1v1h-1zM77 386h1v1h-1zM77 476h1v1h-1zM77 491h1v1h-1zM77 507h1v1h-1zM77 522h1v1h-1zM77 537h1v1h-1zM77 552h1v1h-1zM77 567h1v1h-1zM77 582h1v1h-1zM77 597h1v1h-1zM77 612h1v1h-1zM77 628h1v1h-1zM77 643h1v1h-1zM77 658h1v1h-1zM77 673h1v1h-1zM77 688h1v1h-1zM77 703h1v1h-1zM77 718h1v1h-1zM77 734h1v1h-1zM77 749h1v1h-1zM77 764h1v1h-1zM77 779h1v1h-1zM77 794h1v1h-1zM77 809h1v1h-1zM77 824h1v1h-1zM77 839h1v1h-1zM77 855h1v1h-1zM77 870h1v1h-1zM77 885h1v1h-1zM77 900h1v1h-1zM77 915h1v1h-1zM77 930h1v1h-1zM77 945h1v1h-1zM77 960h1v1h-1zM77 976h1v1h-1zM92 83h1v1h-1zM92 98h1v1h-1zM92 113h1v1h-1zM92 128h1v1h-1zM92 144h1v1h-1zM92 159h1v1h-1zM92 174h1v1h-1zM92 189h1v1h-1zM92 204h1v1h-1zM92 219h1v1h-1zM92 234h1v1h-1zM92 249h1v1h-1zM92 265h1v1h-1zM92 280h1v1h-1zM92 295h1v1h-1zM92 310h1v1h-1zM92 325h1v1h-1zM92 340h1v1h-1zM92 355h1v1h-1zM92 370h1v1h-1zM92 386h1v1h-1zM92 476h1v1h-1zM92 491h1v1h-1zM92 507h1v1h-1zM92 522h1v1h-1zM92 537h1v1h-1zM92 552h1v1h-1zM92 567h1v1h-1zM92 582h1v1h-1zM92 597h1v1h-1zM92 612h1v1h-1zM92 628h1v1h-1zM92 643h1v1h-1zM92 658h1v1h-1zM92 673h1v1h-1zM92 688h1v1h-1zM92 703h1v1h-1zM92 718h1v1h-1zM92 734h1v1h-1zM92 749h1v1h-1zM92 764h1v1h-1zM92 779h1v1h-1zM92 794h1v1h-1zM92 809h1v1h-1zM92 824h1v1h-1zM92 839h1v1h-1zM92 855h1v1h-1zM92 870h1v1h-1zM92 885h1v1h-1zM92 900h1v1h-1zM92 915h1v1h-1zM92 930h1v1h-1zM92 945h1v1h-1zM92 960h1v1h-1zM92 976h1v1h-1zM107 83h1v1h-1zM107 98h1v1h-1zM107 113h1v1h-1zM107 128h1v1h-1zM107 144h1v1h-1zM107 159h1v1h-1zM107 174h1v1h-1zM107 189h1v1h-1zM107 204h1v1h-1zM107 219h1v1h-1zM107 234h1v1h-1zM107 249h1v1h-1zM107 265h1v1h-1zM107 280h1v1h-1zM107 295h1v1h-1zM107 310h1v1h-1zM107 325h1v1h-1zM107 340h1v1h-1zM107 355h1v1h-1zM107 370h1v1h-1zM107 386h1v1h-1zM107 476h1v1h-1zM107 491h1v1h-1zM107 507h1v1h-1zM107 522h1v1h-1zM107 537h1v1h-1zM107 552h1v1h-1zM107 567h1v1h-1zM107 582h1v1h-1zM107 597h1v1h-1zM107 612h1v1h-1zM107 628h1v1h-1zM107 643h1v1h-1zM107 658h1v1h-1zM107 673h1v1h-1zM107 688h1v1h-1zM107 703h1v1h-1zM107 718h1v1h-1zM107 734h1v1h-1zM107 749h1v1h-1zM107 764h1v1h-1zM107 779h1v1h-1zM107 794h1v1h-1zM107 809h1v1h-1zM107 824h1v1h-1zM107 839h1v1h-1zM107 855h1v1h-1zM107 870h1v1h-1zM107 885h1v1h-1zM107 900h1v1h-1zM107 915h1v1h-1zM107 930h1v1h-1zM107 945h1v1h-1zM107 960h1v1h-1zM107 976h1v1h-1zM122 83h1v1h-1zM122 98h1v1h-1zM122 113h1v1h-1zM122 128h1v1h-1zM122 144h1v1h-1zM122 159h1v1h-1zM122 174h1v1h-1zM122 189h1v1h-1zM122 204h1v1h-1zM122 219h1v1h-1zM122 234h1v1h-1zM122 249h1v1h-1zM122 265h1v1h-1zM122 280h1v1h-1zM122 295h1v1h-1zM122 310h1v1h-1zM122 325h1v1h-1zM122 340h1v1h-1zM122 355h1v1h-1zM122 370h1v1h-1zM122 386h1v1h-1zM122 476h1v1h-1zM122 491h1v1h-1zM122 507h1v1h-1zM122 522h1v1h-1zM122 537h1v1h-1zM122 552h1v1h-1zM122 567h1v1h-1zM122 582h1v1h-1zM122 597h1v1h-1zM122 612h1v1h-1zM122 628h1v1h-1zM122 643h1v1h-1zM122 658h1v1h-1zM122 673h1v1h-1zM122 688h1v1h-1zM122 703h1v1h-1zM122 718h1v1h-1zM122 734h1v1h-1zM122 749h1v1h-1zM122 764h1v1h-1zM122 779h1v1h-1zM122 794h1v1h-1zM122 809h1v1h-1zM122 824h1v1h-1zM122 839h1v1h-1zM122 855h1v1h-1zM122 870h1v1h-1zM122 885h1v1h-1zM122 900h1v1h-1zM122 915h1v1h-1zM122 930h1v1h-1zM122 945h1v1h-1zM122 960h1v1h-1zM122 976h1v1h-1zM137 83h1v1h-1zM137 98h1v1h-1zM137 113h1v1h-1zM137 128h1v1h-1zM137 144h1v1h-1zM137 159h1v1h-1zM137 174h1v1h-1zM137 189h1v1h-1zM137 204h1v1h-1zM137 219h1v1h-1zM137 234h1v1h-1zM137 249h1v1h-1zM137 265h1v1h-1zM137 280h1v1h-1zM137 295h1v1h-1zM137 310h1v1h-1zM137 325h1v1h-1zM137 340h1v1h-1zM137 355h1v1h-1zM137 370h1v1h-1zM137 386h1v1h-1zM137 476h1v1h-1zM137 491h1v1h-1zM137 507h1v1h-1zM137 522h1v1h-1zM137 537h1v1h-1zM137 552h1v1h-1zM137 567h1v1h-1zM137 582h1v1h-1zM137 597h1v1h-1zM137 612h1v1h-1zM137 628h1v1h-1zM137 643h1v1h-1zM137 658h1v1h-1zM137 673h1v1h-1zM137 688h1v1h-1zM137 703h1v1h-1zM137 718h1v1h-1zM137 734h1v1h-1zM137 749h1v1h-1zM137 764h1v1h-1zM137 779h1v1h-1zM137 794h1v1h-1zM137 809h1v1h-1zM137 824h1v1h-1zM137 839h1v1h-1zM137 855h1v1h-1zM137 870h1v1h-1zM137 885h1v1h-1zM137 900h1v1h-1zM137 915h1v1h-1zM137 930h1v1h-1zM137 945h1v1h-1zM137 960h1v1h-1zM137 976h1v1h-1zM152 83h1v1h-1zM152 98h1v1h-1zM152 113h1v1h-1zM152 128h1v1h-1zM152 144h1v1h-1zM152 159h1v1h-1zM152 174h1v1h-1zM152 189h1v1h-1zM152 204h1v1h-1zM152 219h1v1h-1zM152 234h1v1h-1zM152 249h1v1h-1zM152 265h1v1h-1zM152 280h1v1h-1zM152 295h1v1h-1zM152 310h1v1h-1zM152 325h1v1h-1zM152 340h1v1h-1zM152 355h1v1h-1zM152 370h1v1h-1zM152 386h1v1h-1zM152 476h1v1h-1zM152 491h1v1h-1zM152 507h1v1h-1zM152 522h1v1h-1zM152 537h1v1h-1zM152 552h1v1h-1zM152 567h1v1h-1zM152 582h1v1h-1zM152 597h1v1h-1zM152 612h1v1h-1zM152 628h1v1h-1zM152 643h1v1h-1zM152 658h1v1h-1zM152 673h1v1h-1zM152 688h1v1h-1zM152 703h1v1h-1zM152 718h1v1h-1zM152 734h1v1h-1zM152 749h1v1h-1zM152 764h1v1h-1zM152 779h1v1h-1zM152 794h1v1h-1zM152 809h1v1h-1zM152 824h1v1h-1zM152 839h1v1h-1zM152 855h1v1h-1zM152 870h1v1h-1zM152 885h1v1h-1zM152 900h1v1h-1zM152 915h1v1h-1zM152 930h1v1h-1zM152 945h1v1h-1zM152 960h1v1h-1zM152 976h1v1h-1zM167 83h1v1h-1zM167 98h1v1h-1zM167 113h1v1h-1zM167 128h1v1h-1zM167 144h1v1h-1zM167 159h1v1h-1zM167 174h1v1h-1zM167 189h1v1h-1zM167 204h1v1h-1zM167 219h1v1h-1zM167 234h1v1h-1zM167 249h1v1h-1zM167 265h1v1h-1zM167 280h1v1h-1zM167 295h1v1h-1zM167 310h1v1h-1zM167 325h1v1h-1zM167 340h1v1h-1zM167 355h1v1h-1zM167 370h1v1h-1zM167 386h1v1h-1zM167 476h1v1h-1zM167 491h1v1h-1zM167 507h1v1h-1zM167 522h1v1h-1zM167 537h1v1h-1zM167 552h1v1h-1zM167 567h1v1h-1zM167 582h1v1h-1zM167 597h1v1h-1zM167 612h1v1h-1zM167 628h1v1h-1zM167 643h1v1h-1zM167 658h1v1h-1zM167 673h1v1h-1zM167 688h1v1h-1zM167 703h1v1h-1zM167 718h1v1h-1zM167 734h1v1h-1zM167 749h1v1h-1zM167 764h1v1h-1zM167 779h1v1h-1zM167 794h1v1h-1zM167 809h1v1h-1zM167 824h1v1h-1zM167 839h1v1h-1zM167 855h1v1h-1zM167 870h1v1h-1zM167 885h1v1h-1zM167 900h1v1h-1zM167 915h1v1h-1zM167 930h1v1h-1zM167 945h1v1h-1zM167 960h1v1h-1zM167 976h1v1h-1zM182 83h1v1h-1zM182 98h1v1h-1zM182 113h1v1h-1zM182 128h1v1h-1zM182 144h1v1h-1zM182 159h1v1h-1zM182 174h1v1h-1zM182 189h1v1h-1zM182 204h1v1h-1zM182 219h1v1h-1zM182 234h1v1h-1zM182 249h1v1h-1zM182 265h1v1h-1zM182 280h1v1h-1zM182 295h1v1h-1zM182 310h1v1h-1zM182 325h1v1h-1zM182 340h1v1h-1zM182 355h1v1h-1zM182 370h1v1h-1zM182 386h1v1h-1zM182 476h1v1h-1zM182 491h1v1h-1zM182 507h1v1h-1zM182 522h1v1h-1zM182 537h1v1h-1zM182 552h1v1h-1zM182 567h1v1h-1zM182 582h1v1h-1zM182 597h1v1h-1zM182 612h1v1h-1zM182 628h1v1h-1zM182 643h1v1h-1zM182 658h1v1h-1zM182 673h1v1h-1zM182 688h1v1h-1zM182 703h1v1h-1zM182 718h1v1h-1zM182 734h1v1h-1zM182 749h1v1h-1zM182 764h1v1h-1zM182 779h1v1h-1zM182 794h1v1h-1zM182 809h1v1h-1zM182 824h1v1h-1zM182 839h1v1h-1zM182 855h1v1h-1zM182 870h1v1h-1zM182 885h1v1h-1zM182 900h1v1h-1zM182 915h1v1h-1zM182 930h1v1h-1zM182 945h1v1h-1zM182 960h1v1h-1zM182 976h1v1h-1zM198 83h1v1h-1zM198 98h1v1h-1zM198 113h1v1h-1zM198 128h1v1h-1zM198 144h1v1h-1zM198 159h1v1h-1zM198 174h1v1h-1zM198 189h1v1h-1zM198 204h1v1h-1zM198 219h1v1h-1zM198 234h1v1h-1zM198 249h1v1h-1zM198 265h1v1h-1zM198 280h1v1h-1zM198 295h1v1h-1zM198 310h1v1h-1zM198 325h1v1h-1zM198 340h1v1h-1zM198 355h1v1h-1zM198 370h1v1h-1zM198 386h1v1h-1zM198 476h1v1h-1zM198 491h1v1h-1zM198 507h1v1h-1zM198 522h1v1h-1zM198 537h1v1h-1zM198 552h1v1h-1zM198 567h1v1h-1zM198 582h1v1h-1zM198 597h1v1h-1zM198 612h1v1h-1zM198 628h1v1h-1zM198 643h1v1h-1zM198 658h1v1h-1zM198 673h1v1h-1zM198 688h1v1h-1zM198 703h1v1h-1zM198 718h1v1h-1zM198 734h1v1h-1zM198 749h1v1h-1zM198 764h1v1h-1zM198 779h1v1h-1zM198 794h1v1h-1zM198 809h1v1h-1zM198 824h1v1h-1zM198 839h1v1h-1zM198 855h1v1h-1zM198 870h1v1h-1zM198 885h1v1h-1zM198 900h1v1h-1zM198 915h1v1h-1zM198 930h1v1h-1zM198 945h1v1h-1zM198 960h1v1h-1zM198 976h1v1h-1zM213 83h1v1h-1zM213 98h1v1h-1zM213 113h1v1h-1zM213 128h1v1h-1zM213 144h1v1h-1zM213 159h1v1h-1zM213 174h1v1h-1zM213 189h1v1h-1zM213 204h1v1h-1zM213 219h1v1h-1zM213 234h1v1h-1zM213 249h1v1h-1zM213 265h1v1h-1zM213 280h1v1h-1zM213 295h1v1h-1zM213 310h1v1h-1zM213 325h1v1h-1zM213 340h1v1h-1zM213 355h1v1h-1zM213 370h1v1h-1zM213 386h1v1h-1zM213 476h1v1h-1zM213 491h1v1h-1zM213 507h1v1h-1zM213 522h1v1h-1zM213 537h1v1h-1zM213 552h1v1h-1zM213 567h1v1h-1zM213 582h1v1h-1zM213 597h1v1h-1zM213 612h1v1h-1zM213 628h1v1h-1zM213 643h1v1h-1zM213 658h1v1h-1zM213 673h1v1h-1zM213 688h1v1h-1zM213 703h1v1h-1zM213 718h1v1h-1zM213 734h1v1h-1zM213 749h1v1h-1zM213 764h1v1h-1zM213 779h1v1h-1zM213 794h1v1h-1zM213 809h1v1h-1zM213 824h1v1h-1zM213 839h1v1h-1zM213 855h1v1h-1zM213 870h1v1h-1zM213 885h1v1h-1zM213 900h1v1h-1zM213 915h1v1h-1zM213 930h1v1h-1zM213 945h1v1h-1zM213 960h1v1h-1zM213 976h1v1h-1zM228 83h1v1h-1zM228 98h1v1h-1zM228 113h1v1h-1zM228 128h1v1h-1zM228 144h1v1h-1zM228 159h1v1h-1zM228 174h1v1h-1zM228 189h1v1h-1zM228 204h1v1h-1zM228 219h1v1h-1zM228 234h1v1h-1zM228 249h1v1h-1zM228 265h1v1h-1zM228 280h1v1h-1zM228 295h1v1h-1zM228 310h1v1h-1zM228 325h1v1h-1zM228 340h1v1h-1zM228 355h1v1h-1zM228 370h1v1h-1zM228 386h1v1h-1zM228 476h1v1h-1zM228 491h1v1h-1zM228 507h1v1h-1zM228 522h1v1h-1zM228 537h1v1h-1zM228 552h1v1h-1zM228 567h1v1h-1zM228 582h1v1h-1zM228 597h1v1h-1zM228 612h1v1h-1zM228 628h1v1h-1zM228 643h1v1h-1zM228 658h1v1h-1zM228 673h1v1h-1zM228 688h1v1h-1zM228 703h1v1h-1zM228 718h1v1h-1zM228 734h1v1h-1zM228 749h1v1h-1zM228 764h1v1h-1zM228 779h1v1h-1zM228 794h1v1h-1zM228 809h1v1h-1zM228 824h1v1h-1zM228 839h1v1h-1zM228 855h1v1h-1zM228 870h1v1h-1zM228 885h1v1h-1zM228 900h1v1h-1zM228 915h1v1h-1zM228 930h1v1h-1zM228 945h1v1h-1zM228 960h1v1h-1zM228 976h1v1h-1zM243 83h1v1h-1zM243 98h1v1h-1zM243 113h1v1h-1zM243 128h1v1h-1zM243 144h1v1h-1zM243 159h1v1h-1zM243 174h1v1h-1zM243 189h1v1h-1zM243 204h1v1h-1zM243 219h1v1h-1zM243 234h1v1h-1zM243 249h1v1h-1zM243 265h1v1h-1zM243 280h1v1h-1zM243 295h1v1h-1zM243 310h1v1h-1zM243 325h1v1h-1zM243 340h1v1h-1zM243 355h1v1h-1zM243 370h1v1h-1zM243 386h1v1h-1zM243 476h1v1h-1zM243 491h1v1h-1zM243 507h1v1h-1zM243 522h1v1h-1zM243 537h1v1h-1zM243 552h1v1h-1zM243 567h1v1h-1zM243 582h1v1h-1zM243 597h1v1h-1zM243 612h1v1h-1zM243 628h1v1h-1zM243 643h1v1h-1zM243 658h1v1h-1zM243 673h1v1h-1zM243 688h1v1h-1zM243 703h1v1h-1zM243 718h1v1h-1zM243 734h1v1h-1zM243 749h1v1h-1zM243 764h1v1h-1zM243 779h1v1h-1zM243 794h1v1h-1zM243 809h1v1h-1zM243 824h1v1h-1zM243 839h1v1h-1zM243 855h1v1h-1zM243 870h1v1h-1zM243 885h1v1h-1zM243 900h1v1h-1zM243 915h1v1h-1zM243 930h1v1h-1zM243 945h1v1h-1zM243 960h1v1h-1zM243 976h1v1h-1zM258 83h1v1h-1zM258 98h1v1h-1zM258 113h1v1h-1zM258 128h1v1h-1zM258 144h1v1h-1zM258 159h1v1h-1zM258 174h1v1h-1zM258 189h1v1h-1zM258 204h1v1h-1zM258 219h1v1h-1zM258 234h1v1h-1zM258 249h1v1h-1zM258 265h1v1h-1zM258 280h1v1h-1zM258 295h1v1h-1zM258 310h1v1h-1zM258 325h1v1h-1zM258 340h1v1h-1zM258 355h1v1h-1zM258 370h1v1h-1zM258 386h1v1h-1zM258 476h1v1h-1zM258 491h1v1h-1zM258 507h1v1h-1zM258 522h1v1h-1zM258 537h1v1h-1zM258 552h1v1h-1zM258 567h1v1h-1zM258 582h1v1h-1zM258 597h1v1h-1zM258 612h1v1h-1zM258 628h1v1h-1zM258 643h1v1h-1zM258 658h1v1h-1zM258 673h1v1h-1zM258 688h1v1h-1zM258 703h1v1h-1zM258 718h1v1h-1zM258 734h1v1h-1zM258 749h1v1h-1zM258 764h1v1h-1zM258 779h1v1h-1zM258 794h1v1h-1zM258 809h1v1h-1zM258 824h1v1h-1zM258 839h1v1h-1zM258 855h1v1h-1zM258 870h1v1h-1zM258 885h1v1h-1zM258 900h1v1h-1zM258 915h1v1h-1zM258 930h1v1h-1zM258 945h1v1h-1zM258 960h1v1h-1zM258 976h1v1h-1zM273 83h1v1h-1zM273 98h1v1h-1zM273 113h1v1h-1zM273 128h1v1h-1zM273 144h1v1h-1zM273 159h1v1h-1zM273 174h1v1h-1zM273 189h1v1h-1zM273 204h1v1h-1zM273 219h1v1h-1zM273 234h1v1h-1zM273 249h1v1h-1zM273 265h1v1h-1zM273 280h1v1h-1zM273 295h1v1h-1zM273 310h1v1h-1zM273 325h1v1h-1zM273 340h1v1h-1zM273 355h1v1h-1zM273 370h1v1h-1zM273 386h1v1h-1zM273 476h1v1h-1zM273 491h1v1h-1zM273 507h1v1h-1zM273 522h1v1h-1zM273 537h1v1h-1zM273 552h1v1h-1zM273 567h1v1h-1zM273 582h1v1h-1zM273 597h1v1h-1zM273 612h1v1h-1zM273 628h1v1h-1zM273 643h1v1h-1zM273 658h1v1h-1zM273 673h1v1h-1zM273 688h1v1h-1zM273 703h1v1h-1zM273 718h1v1h-1zM273 734h1v1h-1zM273 749h1v1h-1zM273 764h1v1h-1zM273 779h1v1h-1zM273 794h1v1h-1zM273 809h1v1h-1zM273 824h1v1h-1zM273 839h1v1h-1zM273 855h1v1h-1zM273 870h1v1h-1zM273 885h1v1h-1zM273 900h1v1h-1zM273 915h1v1h-1zM273 930h1v1h-1zM273 945h1v1h-1zM273 960h1v1h-1zM273 976h1v1h-1zM288 83h1v1h-1zM288 98h1v1h-1zM288 113h1v1h-1zM288 128h1v1h-1zM288 144h1v1h-1zM288 159h1v1h-1zM288 174h1v1h-1zM288 189h1v1h-1zM288 204h1v1h-1zM288 219h1v1h-1zM288 234h1v1h-1zM288 249h1v1h-1zM288 265h1v1h-1zM288 280h1v1h-1zM288 295h1v1h-1zM288 310h1v1h-1zM288 325h1v1h-1zM288 340h1v1h-1zM288 355h1v1h-1zM288 370h1v1h-1zM288 386h1v1h-1zM288 476h1v1h-1zM288 491h1v1h-1zM288 507h1v1h-1zM288 522h1v1h-1zM288 537h1v1h-1zM288 552h1v1h-1zM288 567h1v1h-1zM288 582h1v1h-1zM288 597h1v1h-1zM288 612h1v1h-1zM288 628h1v1h-1zM288 643h1v1h-1zM288 658h1v1h-1zM288 673h1v1h-1zM288 688h1v1h-1zM288 703h1v1h-1zM288 718h1v1h-1zM288 734h1v1h-1zM288 749h1v1h-1zM288 764h1v1h-1zM288 779h1v1h-1zM288 794h1v1h-1zM288 809h1v1h-1zM288 824h1v1h-1zM288 839h1v1h-1zM288 855h1v1h-1zM288 870h1v1h-1zM288 885h1v1h-1zM288 900h1v1h-1zM288 915h1v1h-1zM288 930h1v1h-1zM288 945h1v1h-1zM288 960h1v1h-1zM288 976h1v1h-1zM303 83h1v1h-1zM303 98h1v1h-1zM303 113h1v1h-1zM303 128h1v1h-1zM303 144h1v1h-1zM303 159h1v1h-1zM303 174h1v1h-1zM303 189h1v1h-1zM303 204h1v1h-1zM303 219h1v1h-1zM303 234h1v1h-1zM303 249h1v1h-1zM303 265h1v1h-1zM303 280h1v1h-1zM303 295h1v1h-1zM303 310h1v1h-1zM303 325h1v1h-1zM303 340h1v1h-1zM303 355h1v1h-1zM303 370h1v1h-1zM303 386h1v1h-1zM303 476h1v1h-1zM303 491h1v1h-1zM303 507h1v1h-1zM303 522h1v1h-1zM303 537h1v1h-1zM303 552h1v1h-1zM303 567h1v1h-1zM303 582h1v1h-1zM303 597h1v1h-1zM303 612h1v1h-1zM303 628h1v1h-1zM303 643h1v1h-1zM303 658h1v1h-1zM303 673h1v1h-1zM303 688h1v1h-1zM303 703h1v1h-1zM303 718h1v1h-1zM303 734h1v1h-1zM303 749h1v1h-1zM303 764h1v1h-1zM303 779h1v1h-1zM303 794h1v1h-1zM303 809h1v1h-1zM303 824h1v1h-1zM303 839h1v1h-1zM303 855h1v1h-1zM303 870h1v1h-1zM303 885h1v1h-1zM303 900h1v1h-1zM303 915h1v1h-1zM303 930h1v1h-1zM303 945h1v1h-1zM303 960h1v1h-1zM303 976h1v1h-1zM319 83h1v1h-1zM319 98h1v1h-1zM319 113h1v1h-1zM319 128h1v1h-1zM319 144h1v1h-1zM319 159h1v1h-1zM319 174h1v1h-1zM319 189h1v1h-1zM319 204h1v1h-1zM319 219h1v1h-1zM319 234h1v1h-1zM319 249h1v1h-1zM319 265h1v1h-1zM319 280h1v1h-1zM319 295h1v1h-1zM319 310h1v1h-1zM319 325h1v1h-1zM319 340h1v1h-1zM319 355h1v1h-1zM319 370h1v1h-1zM319 386h1v1h-1zM319 476h1v1h-1zM319 491h1v1h-1zM319 507h1v1h-1zM319 522h1v1h-1zM319 537h1v1h-1zM319 552h1v1h-1zM319 567h1v1h-1zM319 582h1v1h-1zM319 597h1v1h-1zM319 612h1v1h-1zM319 628h1v1h-1zM319 643h1v1h-1zM319 658h1v1h-1zM319 673h1v1h-1zM319 688h1v1h-1zM319 703h1v1h-1zM319 718h1v1h-1zM319 734h1v1h-1zM319 749h1v1h-1zM319 764h1v1h-1zM319 779h1v1h-1zM319 794h1v1h-1zM319 809h1v1h-1zM319 824h1v1h-1zM319 839h1v1h-1zM319 855h1v1h-1zM319 870h1v1h-1zM319 885h1v1h-1zM319 900h1v1h-1zM319 915h1v1h-1zM319 930h1v1h-1zM319 945h1v1h-1zM319 960h1v1h-1zM319 976h1v1h-1zM334 83h1v1h-1zM334 98h1v1h-1zM334 113h1v1h-1zM334 128h1v1h-1zM334 144h1v1h-1zM334 159h1v1h-1zM334 174h1v1h-1zM334 189h1v1h-1zM334 204h1v1h-1zM334 219h1v1h-1zM334 234h1v1h-1zM334 249h1v1h-1zM334 265h1v1h-1zM334 280h1v1h-1zM334 295h1v1h-1zM334 310h1v1h-1zM334 325h1v1h-1zM334 340h1v1h-1zM334 355h1v1h-1zM334 370h1v1h-1zM334 386h1v1h-1zM334 476h1v1h-1zM334 491h1v1h-1zM334 507h1v1h-1zM334 522h1v1h-1zM334 537h1v1h-1zM334 552h1v1h-1zM334 567h1v1h-1zM334 582h1v1h-1zM334 597h1v1h-1zM334 612h1v1h-1zM334 628h1v1h-1zM334 643h1v1h-1zM334 658h1v1h-1zM334 673h1v1h-1zM334 688h1v1h-1zM334 703h1v1h-1zM334 718h1v1h-1zM334 734h1v1h-1zM334 749h1v1h-1zM334 764h1v1h-1zM334 779h1v1h-1zM334 794h1v1h-1zM334 809h1v1h-1zM334 824h1v1h-1zM334 839h1v1h-1zM334 855h1v1h-1zM334 870h1v1h-1zM334 885h1v1h-1zM334 900h1v1h-1zM334 915h1v1h-1zM334 930h1v1h-1zM334 945h1v1h-1zM334 960h1v1h-1zM334 976h1v1h-1zM349 83h1v1h-1zM349 98h1v1h-1zM349 113h1v1h-1zM349 128h1v1h-1zM349 144h1v1h-1zM349 159h1v1h-1zM349 174h1v1h-1zM349 189h1v1h-1zM349 204h1v1h-1zM349 219h1v1h-1zM349 234h1v1h-1zM349 249h1v1h-1zM349 265h1v1h-1zM349 280h1v1h-1zM349 295h1v1h-1zM349 310h1v1h-1zM349 325h1v1h-1zM349 340h1v1h-1zM349 355h1v1h-1zM349 370h1v1h-1zM349 386h1v1h-1zM349 401h1v1h-1zM349 416h1v1h-1zM349 431h1v1h-1zM349 446h1v1h-1zM349 461h1v1h-1zM349 476h1v1h-1zM349 491h1v1h-1zM349 507h1v1h-1zM349 522h1v1h-1zM349 537h1v1h-1zM349 552h1v1h-1zM349 567h1v1h-1zM349 582h1v1h-1zM349 597h1v1h-1zM349 612h1v1h-1zM349 628h1v1h-1zM349 643h1v1h-1zM349 658h1v1h-1zM349 673h1v1h-1zM349 688h1v1h-1zM349 703h1v1h-1zM349 718h1v1h-1zM349 734h1v1h-1zM349 749h1v1h-1zM349 764h1v1h-1zM349 779h1v1h-1zM349 794h1v1h-1zM349 809h1v1h-1zM349 824h1v1h-1zM349 839h1v1h-1zM349 855h1v1h-1zM349 870h1v1h-1zM349 885h1v1h-1zM349 900h1v1h-1zM349 915h1v1h-1zM349 930h1v1h-1zM349 945h1v1h-1zM349 960h1v1h-1zM349 976h1v1h-1zM364 83h1v1h-1zM364 98h1v1h-1zM364 113h1v1h-1zM364 128h1v1h-1zM364 144h1v1h-1zM364 159h1v1h-1zM364 174h1v1h-1zM364 189h1v1h-1zM364 204h1v1h-1zM364 219h1v1h-1zM364 234h1v1h-1zM364 249h1v1h-1zM364 265h1v1h-1zM364 280h1v1h-1zM364 295h1v1h-1zM364 310h1v1h-1zM364 325h1v1h-1zM364 340h1v1h-1zM364 355h1v1h-1zM364 370h1v1h-1zM364 386h1v1h-1zM364 401h1v1h-1zM364 416h1v1h-1zM364 431h1v1h-1zM364 446h1v1h-1zM364 461h1v1h-1zM364 476h1v1h-1zM364 491h1v1h-1zM364 507h1v1h-1zM364 522h1v1h-1zM364 537h1v1h-1zM364 552h1v1h-1zM364 567h1v1h-1zM364 582h1v1h-1zM364 597h1v1h-1zM364 612h1v1h-1zM364 628h1v1h-1zM364 643h1v1h-1zM364 658h1v1h-1zM364 673h1v1h-1zM364 688h1v1h-1zM364 703h1v1h-1zM364 718h1v1h-1zM364 734h1v1h-1zM364 749h1v1h-1zM364 764h1v1h-1zM364 779h1v1h-1zM364 794h1v1h-1zM364 809h1v1h-1zM364 824h1v1h-1zM364 839h1v1h-1zM364 855h1v1h-1zM364 870h1v1h-1zM364 885h1v1h-1zM364 900h1v1h-1zM364 915h1v1h-1zM364 930h1v1h-1zM364 945h1v1h-1zM364 960h1v1h-1zM364 976h1v1h-1zM379 83h1v1h-1zM379 98h1v1h-1zM379 113h1v1h-1zM379 128h1v1h-1zM379 144h1v1h-1zM379 159h1v1h-1zM379 174h1v1h-1zM379 189h1v1h-1zM379 204h1v1h-1zM379 219h1v1h-1zM379 234h1v1h-1zM379 249h1v1h-1zM379 265h1v1h-1zM379 280h1v1h-1zM379 295h1v1h-1zM379 310h1v1h-1zM379 325h1v1h-1zM379 340h1v1h-1zM379 355h1v1h-1zM379 370h1v1h-1zM379 386h1v1h-1zM379 401h1v1h-1zM379 416h1v1h-1zM379 431h1v1h-1zM379 446h1v1h-1zM379 461h1v1h-1zM379 476h1v1h-1zM379 491h1v1h-1zM379 507h1v1h-1zM379 522h1v1h-1zM379 537h1v1h-1zM379 552h1v1h-1zM379 567h1v1h-1zM379 582h1v1h-1zM379 597h1v1h-1zM379 612h1v1h-1zM379 628h1v1h-1zM379 643h1v1h-1zM379 658h1v1h-1zM379 673h1v1h-1zM379 688h1v1h-1zM379 703h1v1h-1zM379 718h1v1h-1zM379 734h1v1h-1zM379 749h1v1h-1zM379 764h1v1h-1zM379 779h1v1h-1zM379 794h1v1h-1zM379 809h1v1h-1zM379 824h1v1h-1zM379 839h1v1h-1zM379 855h1v1h-1zM379 870h1v1h-1zM379 885h1v1h-1zM379 900h1v1h-1zM379 915h1v1h-1zM379 930h1v1h-1zM379 945h1v1h-1zM379 960h1v1h-1zM379 976h1v1h-1zM394 83h1v1h-1zM394 98h1v1h-1zM394 113h1v1h-1zM394 128h1v1h-1zM394 144h1v1h-1zM394 159h1v1h-1zM394 174h1v1h-1zM394 189h1v1h-1zM394 204h1v1h-1zM394 219h1v1h-1zM394 234h1v1h-1zM394 249h1v1h-1zM394 265h1v1h-1zM394 280h1v1h-1zM394 295h1v1h-1zM394 310h1v1h-1zM394 325h1v1h-1zM394 340h1v1h-1zM394 355h1v1h-1zM394 370h1v1h-1zM394 386h1v1h-1zM394 401h1v1h-1zM394 416h1v1h-1zM394 431h1v1h-1zM394 446h1v1h-1zM394 461h1v1h-1zM394 476h1v1h-1zM394 491h1v1h-1zM394 507h1v1h-1zM394 522h1v1h-1zM394 537h1v1h-1zM394 552h1v1h-1zM394 567h1v1h-1zM394 582h1v1h-1zM394 597h1v1h-1zM394 612h1v1h-1zM394 628h1v1h-1zM394 643h1v1h-1zM394 658h1v1h-1zM394 673h1v1h-1zM394 688h1v1h-1zM394 703h1v1h-1zM394 718h1v1h-1zM394 734h1v1h-1zM394 749h1v1h-1zM394 764h1v1h-1zM394 779h1v1h-1zM394 794h1v1h-1zM394 809h1v1h-1zM394 824h1v1h-1zM394 839h1v1h-1zM394 855h1v1h-1zM394 870h1v1h-1zM394 885h1v1h-1zM394 900h1v1h-1zM394 915h1v1h-1zM394 930h1v1h-1zM394 945h1v1h-1zM394 960h1v1h-1zM394 976h1v1h-1zM409 83h1v1h-1zM409 98h1v1h-1zM409 113h1v1h-1zM409 128h1v1h-1zM409 144h1v1h-1zM409 159h1v1h-1zM409 174h1v1h-1zM409 189h1v1h-1zM409 204h1v1h-1zM409 219h1v1h-1zM409 234h1v1h-1zM409 249h1v1h-1zM409 265h1v1h-1zM409 280h1v1h-1zM409 295h1v1h-1zM409 310h1v1h-1zM409 325h1v1h-1zM409 340h1v1h-1zM409 355h1v1h-1zM409 370h1v1h-1zM409 386h1v1h-1zM409 401h1v1h-1zM409 416h1v1h-1zM409 431h1v1h-1zM409 446h1v1h-1zM409 461h1v1h-1zM409 476h1v1h-1zM409 491h1v1h-1zM409 507h1v1h-1zM409 522h1v1h-1zM409 537h1v1h-1zM409 552h1v1h-1zM409 567h1v1h-1zM409 582h1v1h-1zM409 597h1v1h-1zM409 612h1v1h-1zM409 628h1v1h-1zM409 643h1v1h-1zM409 658h1v1h-1zM409 673h1v1h-1zM409 688h1v1h-1zM409 703h1v1h-1zM409 718h1v1h-1zM409 734h1v1h-1zM409 749h1v1h-1zM409 764h1v1h-1zM409 779h1v1h-1zM409 794h1v1h-1zM409 809h1v1h-1zM409 824h1v1h-1zM409 839h1v1h-1zM409 855h1v1h-1zM409 870h1v1h-1zM409 885h1v1h-1zM409 900h1v1h-1zM409 915h1v1h-1zM409 930h1v1h-1zM409 945h1v1h-1zM409 960h1v1h-1zM409 976h1v1h-1zM425 83h1v1h-1zM425 98h1v1h-1zM425 113h1v1h-1zM425 128h1v1h-1zM425 144h1v1h-1zM425 159h1v1h-1zM425 174h1v1h-1zM425 189h1v1h-1zM425 204h1v1h-1zM425 219h1v1h-1zM425 234h1v1h-1zM425 249h1v1h-1zM425 265h1v1h-1zM425 280h1v1h-1zM425 295h1v1h-1zM425 310h1v1h-1zM425 325h1v1h-1zM425 340h1v1h-1zM425 355h1v1h-1zM425 370h1v1h-1zM425 386h1v1h-1zM425 401h1v1h-1zM425 416h1v1h-1zM425 431h1v1h-1zM425 446h1v1h-1zM425 461h1v1h-1zM425 476h1v1h-1zM425 491h1v1h-1zM425 507h1v1h-1zM425 522h1v1h-1zM425 537h1v1h-1zM425 552h1v1h-1zM425 567h1v1h-1zM425 582h1v1h-1zM425 597h1v1h-1zM425 612h1v1h-1zM425 628h1v1h-1zM425 643h1v1h-1zM425 658h1v1h-1zM425 673h1v1h-1zM425 688h1v1h-1zM425 703h1v1h-1zM425 718h1v1h-1zM425 734h1v1h-1zM425 749h1v1h-1zM425 764h1v1h-1zM425 779h1v1h-1zM425 794h1v1h-1zM425 809h1v1h-1zM425 824h1v1h-1zM425 839h1v1h-1zM425 855h1v1h-1zM425 870h1v1h-1zM425 885h1v1h-1zM425 900h1v1h-1zM425 915h1v1h-1zM425 930h1v1h-1zM425 945h1v1h-1zM425 960h1v1h-1zM425 976h1v1h-1zM440 83h1v1h-1zM440 98h1v1h-1zM440 113h1v1h-1zM440 128h1v1h-1zM440 144h1v1h-1zM440 159h1v1h-1zM440 174h1v1h-1zM440 189h1v1h-1zM440 204h1v1h-1zM440 219h1v1h-1zM440 234h1v1h-1zM440 249h1v1h-1zM440 265h1v1h-1zM440 280h1v1h-1zM440 295h1v1h-1zM440 310h1v1h-1zM440 325h1v1h-1zM440 340h1v1h-1zM440 355h1v1h-1zM440 370h1v1h-1zM440 386h1v1h-1zM440 401h1v1h-1zM440 416h1v1h-1zM440 431h1v1h-1zM440 446h1v1h-1zM440 461h1v1h-1zM440 476h1v1h-1zM440 491h1v1h-1zM440 507h1v1h-1zM440 522h1v1h-1zM440 537h1v1h-1zM440 552h1v1h-1zM440 567h1v1h-1zM440 582h1v1h-1zM440 597h1v1h-1zM440 612h1v1h-1zM440 628h1v1h-1zM440 643h1v1h-1zM440 658h1v1h-1zM440 673h1v1h-1zM440 688h1v1h-1zM440 703h1v1h-1zM440 718h1v1h-1zM440 734h1v1h-1zM440 749h1v1h-1zM440 764h1v1h-1zM440 779h1v1h-1zM440 794h1v1h-1zM440 809h1v1h-1zM440 824h1v1h-1zM440 839h1v1h-1zM440 855h1v1h-1zM440 870h1v1h-1zM440 885h1v1h-1zM440 900h1v1h-1zM440 915h1v1h-1zM440 930h1v1h-1zM440 945h1v1h-1zM440 960h1v1h-1zM440 976h1v1h-1zM455 83h1v1h-1zM455 98h1v1h-1zM455 113h1v1h-1zM455 128h1v1h-1zM455 144h1v1h-1zM455 159h1v1h-1zM455 174h1v1h-1zM455 189h1v1h-1zM455 204h1v1h-1zM455 219h1v1h-1zM455 234h1v1h-1zM455 249h1v1h-1zM455 265h1v1h-1zM455 280h1v1h-1zM455 295h1v1h-1zM455 310h1v1h-1zM455 325h1v1h-1zM455 340h1v1h-1zM455 355h1v1h-1zM455 370h1v1h-1zM455 386h1v1h-1zM455 401h1v1h-1zM455 416h1v1h-1zM455 431h1v1h-1zM455 446h1v1h-1zM455 461h1v1h-1zM455 476h1v1h-1zM455 491h1v1h-1zM455 507h1v1h-1zM455 522h1v1h-1zM455 537h1v1h-1zM455 552h1v1h-1zM455 567h1v1h-1zM455 582h1v1h-1zM455 597h1v1h-1zM455 612h1v1h-1zM455 628h1v1h-1zM455 643h1v1h-1zM455 658h1v1h-1zM455 673h1v1h-1zM455 688h1v1h-1zM455 703h1v1h-1zM455 718h1v1h-1zM455 734h1v1h-1zM455 749h1v1h-1zM455 764h1v1h-1zM455 779h1v1h-1zM455 794h1v1h-1zM455 809h1v1h-1zM455 824h1v1h-1zM455 839h1v1h-1zM455 855h1v1h-1zM455 870h1v1h-1zM455 885h1v1h-1zM455 900h1v1h-1zM455 915h1v1h-1zM455 930h1v1h-1zM455 945h1v1h-1zM455 960h1v1h-1zM455 976h1v1h-1zM470 83h1v1h-1zM470 98h1v1h-1zM470 113h1v1h-1zM470 128h1v1h-1zM470 144h1v1h-1zM470 159h1v1h-1zM470 174h1v1h-1zM470 189h1v1h-1zM470 204h1v1h-1zM470 219h1v1h-1zM470 234h1v1h-1zM470 249h1v1h-1zM470 265h1v1h-1zM470 280h1v1h-1zM470 295h1v1h-1zM470 310h1v1h-1zM470 325h1v1h-1zM470 340h1v1h-1zM470 355h1v1h-1zM470 370h1v1h-1zM470 386h1v1h-1zM470 401h1v1h-1zM470 416h1v1h-1zM470 431h1v1h-1zM470 446h1v1h-1zM470 461h1v1h-1zM470 476h1v1h-1zM470 491h1v1h-1zM470 507h1v1h-1zM470 522h1v1h-1zM470 537h1v1h-1zM470 552h1v1h-1zM470 567h1v1h-1zM470 582h1v1h-1zM470 597h1v1h-1zM470 612h1v1h-1zM470 628h1v1h-1zM470 643h1v1h-1zM470 658h1v1h-1zM470 673h1v1h-1zM470 688h1v1h-1zM470 703h1v1h-1zM470 718h1v1h-1zM470 734h1v1h-1zM470 749h1v1h-1zM470 764h1v1h-1zM470 779h1v1h-1zM470 794h1v1h-1zM470 809h1v1h-1zM470 824h1v1h-1zM470 839h1v1h-1zM470 855h1v1h-1zM470 870h1v1h-1zM470 885h1v1h-1zM470 900h1v1h-1zM470 915h1v1h-1zM470 930h1v1h-1zM470 945h1v1h-1zM470 960h1v1h-1zM470 976h1v1h-1zM485 83h1v1h-1zM485 98h1v1h-1zM485 113h1v1h-1zM485 128h1v1h-1zM485 144h1v1h-1zM485 159h1v1h-1zM485 174h1v1h-1zM485 189h1v1h-1zM485 204h1v1h-1zM485 219h1v1h-1zM485 234h1v1h-1zM485 249h1v1h-1zM485 265h1v1h-1zM485 280h1v1h-1zM485 295h1v1h-1zM485 310h1v1h-1zM485 325h1v1h-1zM485 340h1v1h-1zM485 355h1v1h-1zM485 370h1v1h-1zM485 386h1v1h-1zM485 401h1v1h-1zM485 416h1v1h-1zM485 431h1v1h-1zM485 446h1v1h-1zM485 461h1v1h-1zM485 476h1v1h-1zM485 491h1v1h-1zM485 507h1v1h-1zM485 522h1v1h-1zM485 537h1v1h-1zM485 552h1v1h-1zM485 567h1v1h-1zM485 582h1v1h-1zM485 597h1v1h-1zM485 612h1v1h-1zM485 628h1v1h-1zM485 643h1v1h-1zM485 658h1v1h-1zM485 673h1v1h-1zM485 688h1v1h-1zM485 703h1v1h-1zM485 718h1v1h-1zM485 734h1v1h-1zM485 749h1v1h-1zM485 764h1v1h-1zM485 779h1v1h-1zM485 794h1v1h-1zM485 809h1v1h-1zM485 824h1v1h-1zM485 839h1v1h-1zM485 855h1v1h-1zM485 870h1v1h-1zM485 885h1v1h-1zM485 900h1v1h-1zM485 915h1v1h-1zM485 930h1v1h-1zM485 945h1v1h-1zM485 960h1v1h-1zM485 976h1v1h-1zM500 83h1v1h-1zM500 98h1v1h-1zM500 113h1v1h-1zM500 128h1v1h-1zM500 144h1v1h-1zM500 159h1v1h-1zM500 174h1v1h-1zM500 189h1v1h-1zM500 204h1v1h-1zM500 219h1v1h-1zM500 234h1v1h-1zM500 249h1v1h-1zM500 265h1v1h-1zM500 280h1v1h-1zM500 295h1v1h-1zM500 310h1v1h-1zM500 325h1v1h-1zM500 340h1v1h-1zM500 355h1v1h-1zM500 370h1v1h-1zM500 386h1v1h-1zM500 401h1v1h-1zM500 416h1v1h-1zM500 431h1v1h-1zM500 446h1v1h-1zM500 461h1v1h-1zM500 476h1v1h-1zM500 491h1v1h-1zM500 507h1v1h-1zM500 522h1v1h-1zM500 537h1v1h-1zM500 552h1v1h-1zM500 567h1v1h-1zM500 582h1v1h-1zM500 597h1v1h-1zM500 612h1v1h-1zM500 628h1v1h-1zM500 643h1v1h-1zM500 658h1v1h-1zM500 673h1v1h-1zM500 688h1v1h-1zM500 703h1v1h-1zM500 718h1v1h-1zM500 734h1v1h-1zM500 749h1v1h-1zM500 764h1v1h-1zM500 779h1v1h-1zM500 794h1v1h-1zM500 809h1v1h-1zM500 824h1v1h-1zM500 839h1v1h-1zM500 855h1v1h-1zM500 870h1v1h-1zM500 885h1v1h-1zM500 900h1v1h-1zM500 915h1v1h-1zM500 930h1v1h-1zM500 945h1v1h-1zM500 960h1v1h-1zM500 976h1v1h-1zM515 83h1v1h-1zM515 98h1v1h-1zM515 113h1v1h-1zM515 128h1v1h-1zM515 144h1v1h-1zM515 159h1v1h-1zM515 174h1v1h-1zM515 189h1v1h-1zM515 204h1v1h-1zM515 219h1v1h-1zM515 234h1v1h-1zM515 249h1v1h-1zM515 265h1v1h-1zM515 280h1v1h-1zM515 295h1v1h-1zM515 310h1v1h-1zM515 325h1v1h-1zM515 340h1v1h-1zM515 355h1v1h-1zM515 370h1v1h-1zM515 386h1v1h-1zM515 401h1v1h-1zM515 416h1v1h-1zM515 431h1v1h-1zM515 446h1v1h-1zM515 461h1v1h-1zM515 476h1v1h-1zM515 491h1v1h-1zM515 507h1v1h-1zM515 522h1v1h-1zM515 537h1v1h-1zM515 552h1v1h-1zM515 567h1v1h-1zM515 582h1v1h-1zM515 597h1v1h-1zM515 612h1v1h-1zM515 628h1v1h-1zM515 643h1v1h-1zM515 658h1v1h-1zM515 673h1v1h-1zM515 688h1v1h-1zM515 703h1v1h-1zM515 718h1v1h-1zM515 734h1v1h-1zM515 749h1v1h-1zM515 764h1v1h-1zM515 779h1v1h-1zM515 794h1v1h-1zM515 809h1v1h-1zM515 824h1v1h-1zM515 839h1v1h-1zM515 855h1v1h-1zM515 870h1v1h-1zM515 885h1v1h-1zM515 900h1v1h-1zM515 915h1v1h-1zM515 930h1v1h-1zM515 945h1v1h-1zM515 960h1v1h-1zM515 976h1v1h-1zM530 83h1v1h-1zM530 98h1v1h-1zM530 113h1v1h-1zM530 128h1v1h-1zM530 144h1v1h-1zM530 159h1v1h-1zM530 174h1v1h-1zM530 189h1v1h-1zM530 204h1v1h-1zM530 219h1v1h-1zM530 234h1v1h-1zM530 249h1v1h-1zM530 265h1v1h-1zM530 280h1v1h-1zM530 295h1v1h-1zM530 310h1v1h-1zM530 325h1v1h-1zM530 340h1v1h-1zM530 355h1v1h-1zM530 370h1v1h-1zM530 386h1v1h-1zM530 401h1v1h-1zM530 416h1v1h-1zM530 431h1v1h-1zM530 446h1v1h-1zM530 461h1v1h-1zM530 476h1v1h-1zM530 491h1v1h-1zM530 507h1v1h-1zM530 522h1v1h-1zM530 537h1v1h-1zM530 552h1v1h-1zM530 567h1v1h-1zM530 582h1v1h-1zM530 597h1v1h-1zM530 612h1v1h-1zM530 628h1v1h-1zM530 643h1v1h-1zM530 658h1v1h-1zM530 673h1v1h-1zM530 688h1v1h-1zM530 703h1v1h-1zM530 718h1v1h-1zM530 734h1v1h-1zM530 749h1v1h-1zM530 764h1v1h-1zM530 779h1v1h-1zM530 794h1v1h-1zM530 809h1v1h-1zM530 824h1v1h-1zM530 839h1v1h-1zM530 855h1v1h-1zM530 870h1v1h-1zM530 885h1v1h-1zM530 900h1v1h-1zM530 915h1v1h-1zM530 930h1v1h-1zM530 945h1v1h-1zM530 960h1v1h-1zM530 976h1v1h-1zM546 83h1v1h-1zM546 98h1v1h-1zM546 113h1v1h-1zM546 128h1v1h-1zM546 144h1v1h-1zM546 159h1v1h-1zM546 174h1v1h-1zM546 189h1v1h-1zM546 204h1v1h-1zM546 219h1v1h-1zM546 234h1v1h-1zM546 249h1v1h-1zM546 265h1v1h-1zM546 280h1v1h-1zM546 295h1v1h-1zM546 310h1v1h-1zM546 325h1v1h-1zM546 340h1v1h-1zM546 355h1v1h-1zM546 370h1v1h-1zM546 386h1v1h-1zM546 401h1v1h-1zM546 416h1v1h-1zM546 431h1v1h-1zM546 446h1v1h-1zM546 461h1v1h-1zM546 476h1v1h-1zM546 491h1v1h-1zM546 507h1v1h-1zM546 522h1v1h-1zM546 537h1v1h-1zM546 552h1v1h-1zM546 567h1v1h-1zM546 582h1v1h-1zM546 597h1v1h-1zM546 612h1v1h-1zM546 628h1v1h-1zM546 643h1v1h-1zM546 658h1v1h-1zM546 673h1v1h-1zM546 688h1v1h-1zM546 703h1v1h-1zM546 718h1v1h-1zM546 734h1v1h-1zM546 749h1v1h-1zM546 764h1v1h-1zM546 779h1v1h-1zM546 794h1v1h-1zM546 809h1v1h-1zM546 824h1v1h-1zM546 839h1v1h-1zM546 855h1v1h-1zM546 870h1v1h-1zM546 885h1v1h-1zM546 900h1v1h-1zM546 915h1v1h-1zM546 930h1v1h-1zM546 945h1v1h-1zM546 960h1v1h-1zM546 976h1v1h-1zM561 83h1v1h-1zM561 98h1v1h-1zM561 113h1v1h-1zM561 128h1v1h-1zM561 144h1v1h-1zM561 159h1v1h-1zM561 174h1v1h-1zM561 189h1v1h-1zM561 204h1v1h-1zM561 219h1v1h-1zM561 234h1v1h-1zM561 249h1v1h-1zM561 265h1v1h-1zM561 280h1v1h-1zM561 295h1v1h-1zM561 310h1v1h-1zM561 325h1v1h-1zM561 340h1v1h-1zM561 355h1v1h-1zM561 370h1v1h-1zM561 386h1v1h-1zM561 401h1v1h-1zM561 416h1v1h-1zM561 431h1v1h-1zM561 446h1v1h-1zM561 461h1v1h-1zM561 476h1v1h-1zM561 491h1v1h-1zM561 507h1v1h-1zM561 522h1v1h-1zM561 537h1v1h-1zM561 552h1v1h-1zM561 567h1v1h-1zM561 582h1v1h-1zM561 597h1v1h-1zM561 612h1v1h-1zM561 628h1v1h-1zM561 643h1v1h-1zM561 658h1v1h-1zM561 673h1v1h-1zM561 688h1v1h-1zM561 703h1v1h-1zM561 718h1v1h-1zM561 734h1v1h-1zM561 749h1v1h-1zM561 764h1v1h-1zM561 779h1v1h-1zM561 794h1v1h-1zM561 809h1v1h-1zM561 824h1v1h-1zM561 839h1v1h-1zM561 855h1v1h-1zM561 870h1v1h-1zM561 885h1v1h-1zM561 900h1v1h-1zM561 915h1v1h-1zM561 930h1v1h-1zM561 945h1v1h-1zM561 960h1v1h-1zM561 976h1v1h-1zM576 83h1v1h-1zM576 98h1v1h-1zM576 113h1v1h-1zM576 128h1v1h-1zM576 144h1v1h-1zM576 159h1v1h-1zM576 174h1v1h-1zM576 189h1v1h-1zM576 204h1v1h-1zM576 219h1v1h-1zM576 234h1v1h-1zM576 249h1v1h-1zM576 265h1v1h-1zM576 280h1v1h-1zM576 295h1v1h-1zM576 310h1v1h-1zM576 325h1v1h-1zM576 340h1v1h-1zM576 355h1v1h-1zM576 370h1v1h-1zM576 386h1v1h-1zM576 401h1v1h-1zM576 416h1v1h-1zM576 431h1v1h-1zM576 446h1v1h-1zM576 461h1v1h-1zM576 476h1v1h-1zM576 491h1v1h-1zM576 507h1v1h-1zM576 522h1v1h-1zM576 537h1v1h-1zM576 552h1v1h-1zM576 567h1v1h-1zM576 582h1v1h-1zM576 597h1v1h-1zM576 612h1v1h-1zM576 628h1v1h-1zM576 643h1v1h-1zM576 658h1v1h-1zM576 673h1v1h-1zM576 688h1v1h-1zM576 703h1v1h-1zM576 718h1v1h-1zM576 734h1v1h-1zM576 749h1v1h-1zM576 764h1v1h-1zM576 779h1v1h-1zM576 794h1v1h-1zM576 809h1v1h-1zM576 824h1v1h-1zM576 839h1v1h-1zM576 855h1v1h-1zM576 870h1v1h-1zM576 885h1v1h-1zM576 900h1v1h-1zM576 915h1v1h-1zM576 930h1v1h-1zM576 945h1v1h-1zM576 960h1v1h-1zM576 976h1v1h-1zM591 83h1v1h-1zM591 98h1v1h-1zM591 113h1v1h-1zM591 128h1v1h-1zM591 144h1v1h-1zM591 159h1v1h-1zM591 174h1v1h-1zM591 189h1v1h-1zM591 204h1v1h-1zM591 219h1v1h-1zM591 234h1v1h-1zM591 249h1v1h-1zM591 265h1v1h-1zM591 280h1v1h-1zM591 295h1v1h-1zM591 310h1v1h-1zM591 325h1v1h-1zM591 340h1v1h-1zM591 355h1v1h-1zM591 370h1v1h-1zM591 386h1v1h-1zM591 401h1v1h-1zM591 416h1v1h-1zM591 431h1v1h-1zM591 446h1v1h-1zM591 461h1v1h-1zM591 476h1v1h-1zM591 491h1v1h-1zM591 507h1v1h-1zM591 522h1v1h-1zM591 537h1v1h-1zM591 552h1v1h-1zM591 567h1v1h-1zM591 582h1v1h-1zM591 597h1v1h-1zM591 612h1v1h-1zM591 628h1v1h-1zM591 643h1v1h-1zM591 658h1v1h-1zM591 673h1v1h-1zM591 688h1v1h-1zM591 703h1v1h-1zM591 718h1v1h-1zM591 734h1v1h-1zM591 749h1v1h-1zM591 764h1v1h-1zM591 779h1v1h-1zM591 794h1v1h-1zM591 809h1v1h-1zM591 824h1v1h-1zM591 839h1v1h-1zM591 855h1v1h-1zM591 870h1v1h-1zM591 885h1v1h-1zM591 900h1v1h-1zM591 915h1v1h-1zM591 930h1v1h-1zM591 945h1v1h-1zM591 960h1v1h-1zM591 976h1v1h-1zM606 83h1v1h-1zM606 98h1v1h-1zM606 113h1v1h-1zM606 128h1v1h-1zM606 144h1v1h-1zM606 159h1v1h-1zM606 174h1v1h-1zM606 189h1v1h-1zM606 204h1v1h-1zM606 219h1v1h-1zM606 234h1v1h-1zM606 249h1v1h-1zM606 265h1v1h-1zM606 280h1v1h-1zM606 295h1v1h-1zM606 310h1v1h-1zM606 325h1v1h-1zM606 340h1v1h-1zM606 355h1v1h-1zM606 370h1v1h-1zM606 386h1v1h-1zM606 401h1v1h-1zM606 416h1v1h-1zM606 431h1v1h-1zM606 446h1v1h-1zM606 461h1v1h-1zM606 476h1v1h-1zM606 491h1v1h-1zM606 507h1v1h-1zM606 522h1v1h-1zM606 537h1v1h-1zM606 552h1v1h-1zM606 567h1v1h-1zM606 582h1v1h-1zM606 597h1v1h-1zM606 612h1v1h-1zM606 628h1v1h-1zM606 643h1v1h-1zM606 658h1v1h-1zM606 673h1v1h-1zM606 688h1v1h-1zM606 703h1v1h-1zM606 718h1v1h-1zM606 734h1v1h-1zM606 749h1v1h-1zM606 764h1v1h-1zM606 779h1v1h-1zM606 794h1v1h-1zM606 809h1v1h-1zM606 824h1v1h-1zM606 839h1v1h-1zM606 855h1v1h-1zM606 870h1v1h-1zM606 885h1v1h-1zM606 900h1v1h-1zM606 915h1v1h-1zM606 930h1v1h-1zM606 945h1v1h-1zM606 960h1v1h-1zM606 976h1v1h-1zM621 83h1v1h-1zM621 98h1v1h-1zM621 113h1v1h-1zM621 128h1v1h-1zM621 144h1v1h-1zM621 159h1v1h-1zM621 174h1v1h-1zM621 189h1v1h-1zM621 204h1v1h-1zM621 219h1v1h-1zM621 234h1v1h-1zM621 249h1v1h-1zM621 265h1v1h-1zM621 280h1v1h-1zM621 295h1v1h-1zM621 310h1v1h-1zM621 325h1v1h-1zM621 340h1v1h-1zM621 355h1v1h-1zM621 370h1v1h-1zM621 386h1v1h-1zM621 401h1v1h-1zM621 416h1v1h-1zM621 431h1v1h-1zM621 446h1v1h-1zM621 461h1v1h-1zM621 476h1v1h-1zM621 491h1v1h-1zM621 507h1v1h-1zM621 522h1v1h-1zM621 537h1v1h-1zM621 552h1v1h-1zM621 567h1v1h-1zM621 582h1v1h-1zM621 597h1v1h-1zM621 612h1v1h-1zM621 628h1v1h-1zM621 643h1v1h-1zM621 658h1v1h-1zM621 673h1v1h-1zM621 688h1v1h-1zM621 703h1v1h-1zM621 718h1v1h-1zM621 734h1v1h-1zM621 749h1v1h-1zM621 764h1v1h-1zM621 779h1v1h-1zM621 794h1v1h-1zM621 809h1v1h-1zM621 824h1v1h-1zM621 839h1v1h-1zM621 855h1v1h-1zM621 870h1v1h-1zM621 885h1v1h-1zM621 900h1v1h-1zM621 915h1v1h-1zM621 930h1v1h-1zM621 945h1v1h-1zM621 960h1v1h-1zM621 976h1v1h-1zM636 83h1v1h-1zM636 98h1v1h-1zM636 113h1v1h-1zM636 128h1v1h-1zM636 144h1v1h-1zM636 159h1v1h-1zM636 174h1v1h-1zM636 189h1v1h-1zM636 204h1v1h-1zM636 219h1v1h-1zM636 234h1v1h-1zM636 249h1v1h-1zM636 265h1v1h-1zM636 280h1v1h-1zM636 295h1v1h-1zM636 310h1v1h-1zM636 325h1v1h-1zM636 340h1v1h-1zM636 355h1v1h-1zM636 370h1v1h-1zM636 386h1v1h-1zM636 401h1v1h-1zM636 416h1v1h-1zM636 431h1v1h-1zM636 446h1v1h-1zM636 461h1v1h-1zM636 476h1v1h-1zM636 491h1v1h-1zM636 507h1v1h-1zM636 522h1v1h-1zM636 537h1v1h-1zM636 552h1v1h-1zM636 567h1v1h-1zM636 582h1v1h-1zM636 597h1v1h-1zM636 612h1v1h-1zM636 628h1v1h-1zM636 643h1v1h-1zM636 658h1v1h-1zM636 673h1v1h-1zM636 688h1v1h-1zM636 703h1v1h-1zM636 718h1v1h-1zM636 734h1v1h-1zM636 749h1v1h-1zM636 764h1v1h-1zM636 779h1v1h-1zM636 794h1v1h-1zM636 809h1v1h-1zM636 824h1v1h-1zM636 839h1v1h-1zM636 855h1v1h-1zM636 870h1v1h-1zM636 885h1v1h-1zM636 900h1v1h-1zM636 915h1v1h-1zM636 930h1v1h-1zM636 945h1v1h-1zM636 960h1v1h-1zM636 976h1v1h-1zM651 83h1v1h-1zM651 98h1v1h-1zM651 113h1v1h-1zM651 128h1v1h-1zM651 144h1v1h-1zM651 159h1v1h-1zM651 174h1v1h-1zM651 189h1v1h-1zM651 204h1v1h-1zM651 219h1v1h-1zM651 234h1v1h-1zM651 249h1v1h-1zM651 265h1v1h-1zM651 280h1v1h-1zM651 295h1v1h-1zM651 310h1v1h-1zM651 325h1v1h-1zM651 340h1v1h-1zM651 355h1v1h-1zM651 370h1v1h-1zM651 386h1v1h-1zM651 401h1v1h-1zM651 416h1v1h-1zM651 431h1v1h-1zM651 446h1v1h-1zM651 461h1v1h-1zM651 476h1v1h-1zM651 491h1v1h-1zM651 507h1v1h-1zM651 522h1v1h-1zM651 537h1v1h-1zM651 552h1v1h-1zM651 567h1v1h-1zM651 582h1v1h-1zM651 597h1v1h-1zM651 612h1v1h-1zM651 628h1v1h-1zM651 643h1v1h-1zM651 658h1v1h-1zM651 673h1v1h-1zM651 688h1v1h-1zM651 703h1v1h-1zM651 718h1v1h-1zM651 734h1v1h-1zM651 749h1v1h-1zM651 764h1v1h-1zM651 779h1v1h-1zM651 794h1v1h-1zM651 809h1v1h-1zM651 824h1v1h-1zM651 839h1v1h-1zM651 855h1v1h-1zM651 870h1v1h-1zM651 885h1v1h-1zM651 900h1v1h-1zM651 915h1v1h-1zM651 930h1v1h-1zM651 945h1v1h-1zM651 960h1v1h-1zM651 976h1v1h-1zM667 83h1v1h-1zM667 98h1v1h-1zM667 113h1v1h-1zM667 128h1v1h-1zM667 144h1v1h-1zM667 159h1v1h-1zM667 174h1v1h-1zM667 189h1v1h-1zM667 204h1v1h-1zM667 219h1v1h-1zM667 234h1v1h-1zM667 249h1v1h-1zM667 265h1v1h-1zM667 280h1v1h-1zM667 295h1v1h-1zM667 310h1v1h-1zM667 325h1v1h-1zM667 340h1v1h-1zM667 355h1v1h-1zM667 370h1v1h-1zM667 386h1v1h-1zM667 401h1v1h-1zM667 416h1v1h-1zM667 431h1v1h-1zM667 446h1v1h-1zM667 461h1v1h-1zM667 476h1v1h-1zM667 491h1v1h-1zM667 507h1v1h-1zM667 522h1v1h-1zM667 537h1v1h-1zM667 552h1v1h-1zM667 567h1v1h-1zM667 582h1v1h-1zM667 597h1v1h-1zM667 612h1v1h-1zM667 628h1v1h-1zM667 643h1v1h-1zM667 658h1v1h-1zM667 673h1v1h-1zM667 688h1v1h-1zM667 703h1v1h-1zM667 718h1v1h-1zM667 734h1v1h-1zM667 749h1v1h-1zM667 764h1v1h-1zM667 779h1v1h-1zM667 794h1v1h-1zM667 809h1v1h-1zM667 824h1v1h-1zM667 839h1v1h-1zM667 855h1v1h-1zM667 870h1v1h-1zM667 885h1v1h-1zM667 900h1v1h-1zM667 915h1v1h-1zM667 930h1v1h-1zM667 945h1v1h-1zM667 960h1v1h-1zM667 976h1v1h-1zM682 83h1v1h-1zM682 98h1v1h-1zM682 113h1v1h-1zM682 128h1v1h-1zM682 144h1v1h-1zM682 159h1v1h-1zM682 174h1v1h-1zM682 189h1v1h-1zM682 204h1v1h-1zM682 219h1v1h-1zM682 234h1v1h-1zM682 249h1v1h-1zM682 265h1v1h-1zM682 280h1v1h-1zM682 295h1v1h-1zM682 310h1v1h-1zM682 325h1v1h-1zM682 340h1v1h-1zM682 355h1v1h-1zM682 370h1v1h-1zM682 386h1v1h-1zM682 401h1v1h-1zM682 416h1v1h-1zM682 431h1v1h-1zM682 446h1v1h-1zM682 461h1v1h-1zM682 476h1v1h-1zM682 491h1v1h-1zM682 507h1v1h-1zM682 522h1v1h-1zM682 537h1v1h-1zM682 552h1v1h-1zM682 567h1v1h-1zM682 582h1v1h-1zM682 597h1v1h-1zM682 612h1v1h-1zM682 628h1v1h-1zM682 643h1v1h-1zM682 658h1v1h-1zM682 673h1v1h-1zM682 688h1v1h-1zM682 703h1v1h-1zM682 718h1v1h-1zM682 734h1v1h-1zM682 749h1v1h-1zM682 764h1v1h-1zM682 779h1v1h-1zM682 794h1v1h-1zM682 809h1v1h-1zM682 824h1v1h-1zM682 839h1v1h-1zM682 855h1v1h-1zM682 870h1v1h-1zM682 885h1v1h-1zM682 900h1v1h-1zM682 915h1v1h-1zM682 930h1v1h-1zM682 945h1v1h-1zM682 960h1v1h-1zM682 976h1v1h-1zM697 83h1v1h-1zM697 98h1v1h-1zM697 113h1v1h-1zM697 128h1v1h-1zM697 144h1v1h-1zM697 159h1v1h-1zM697 174h1v1h-1zM697 189h1v1h-1zM697 204h1v1h-1zM697 219h1v1h-1zM697 234h1v1h-1zM697 249h1v1h-1zM697 265h1v1h-1zM697 280h1v1h-1zM697 295h1v1h-1zM697 310h1v1h-1zM697 325h1v1h-1zM697 340h1v1h-1zM697 355h1v1h-1zM697 370h1v1h-1zM697 386h1v1h-1zM697 401h1v1h-1zM697 416h1v1h-1zM697 431h1v1h-1zM697 446h1v1h-1zM697 461h1v1h-1zM697 476h1v1h-1zM697 491h1v1h-1zM697 507h1v1h-1zM697 522h1v1h-1zM697 537h1v1h-1zM697 552h1v1h-1zM697 567h1v1h-1zM697 582h1v1h-1zM697 597h1v1h-1zM697 612h1v1h-1zM697 628h1v1h-1zM697 643h1v1h-1zM697 658h1v1h-1zM697 673h1v1h-1zM697 688h1v1h-1zM697 703h1v1h-1zM697 718h1v1h-1zM697 734h1v1h-1zM697 749h1v1h-1zM697 764h1v1h-1zM697 779h1v1h-1zM697 794h1v1h-1zM697 809h1v1h-1zM697 824h1v1h-1zM697 839h1v1h-1zM697 855h1v1h-1zM697 870h1v1h-1zM697 885h1v1h-1zM697 900h1v1h-1zM697 915h1v1h-1zM697 930h1v1h-1zM697 945h1v1h-1zM697 960h1v1h-1zM697 976h1v1h-1zM712 83h1v1h-1zM712 98h1v1h-1zM712 113h1v1h-1zM712 128h1v1h-1zM712 144h1v1h-1zM712 159h1v1h-1zM712 174h1v1h-1zM712 189h1v1h-1zM712 204h1v1h-1zM712 219h1v1h-1zM712 234h1v1h-1zM712 249h1v1h-1zM712 265h1v1h-1zM712 280h1v1h-1zM712 295h1v1h-1zM712 310h1v1h-1zM712 325h1v1h-1zM712 340h1v1h-1zM712 355h1v1h-1zM712 370h1v1h-1zM712 386h1v1h-1zM712 401h1v1h-1zM712 416h1v1h-1zM712 431h1v1h-1zM712 446h1v1h-1zM712 461h1v1h-1zM712 476h1v1h-1zM712 491h1v1h-1zM712 507h1v1h-1zM712 522h1v1h-1zM712 537h1v1h-1zM712 552h1v1h-1zM712 567h1v1h-1zM712 582h1v1h-1zM712 597h1v1h-1zM712 612h1v1h-1zM712 628h1v1h-1zM712 643h1v1h-1zM712 658h1v1h-1zM712 673h1v1h-1zM712 688h1v1h-1zM712 703h1v1h-1zM712 718h1v1h-1zM712 734h1v1h-1zM712 749h1v1h-1zM712 764h1v1h-1zM712 779h1v1h-1zM712 794h1v1h-1zM712 809h1v1h-1zM712 824h1v1h-1zM712 839h1v1h-1zM712 855h1v1h-1zM712 870h1v1h-1zM712 885h1v1h-1zM712 900h1v1h-1zM712 915h1v1h-1zM712 930h1v1h-1zM712 945h1v1h-1zM712 960h1v1h-1zM712 976h1v1h-1zM727 83h1v1h-1zM727 98h1v1h-1zM727 113h1v1h-1zM727 128h1v1h-1zM727 144h1v1h-1zM727 159h1v1h-1zM727 174h1v1h-1zM727 189h1v1h-1zM727 204h1v1h-1zM727 219h1v1h-1zM727 234h1v1h-1zM727 249h1v1h-1zM727 265h1v1h-1zM727 280h1v1h-1zM727 295h1v1h-1zM727 310h1v1h-1zM727 325h1v1h-1zM727 340h1v1h-1zM727 355h1v1h-1zM727 370h1v1h-1zM727 386h1v1h-1zM727 401h1v1h-1zM727 416h1v1h-1zM727 431h1v1h-1zM727 446h1v1h-1zM727 461h1v1h-1zM727 476h1v1h-1zM727 491h1v1h-1zM727 507h1v1h-1zM727 522h1v1h-1zM727 537h1v1h-1zM727 552h1v1h-1zM727 567h1v1h-1zM727 582h1v1h-1zM727 597h1v1h-1zM727 612h1v1h-1zM727 628h1v1h-1zM727 643h1v1h-1zM727 658h1v1h-1zM727 673h1v1h-1zM727 688h1v1h-1zM727 703h1v1h-1zM727 718h1v1h-1zM727 734h1v1h-1zM727 749h1v1h-1zM727 764h1v1h-1zM727 779h1v1h-1zM727 794h1v1h-1zM727 809h1v1h-1zM727 824h1v1h-1zM727 839h1v1h-1zM727 855h1v1h-1zM727 870h1v1h-1zM727 885h1v1h-1zM727 900h1v1h-1zM727 915h1v1h-1zM727 930h1v1h-1zM727 945h1v1h-1zM727 960h1v1h-1zM727 976h1v1h-1zM742 83h1v1h-1zM742 98h1v1h-1zM742 113h1v1h-1zM742 128h1v1h-1zM742 144h1v1h-1zM742 159h1v1h-1zM742 174h1v1h-1zM742 189h1v1h-1zM742 204h1v1h-1zM742 219h1v1h-1zM742 234h1v1h-1zM742 249h1v1h-1zM742 265h1v1h-1zM742 280h1v1h-1zM742 295h1v1h-1zM742 310h1v1h-1zM742 325h1v1h-1zM742 340h1v1h-1zM742 355h1v1h-1zM742 370h1v1h-1zM742 386h1v1h-1zM742 401h1v1h-1zM742 416h1v1h-1zM742 431h1v1h-1zM742 446h1v1h-1zM742 461h1v1h-1zM742 476h1v1h-1zM742 491h1v1h-1zM742 507h1v1h-1zM742 522h1v1h-1zM742 537h1v1h-1zM742 552h1v1h-1zM742 567h1v1h-1zM742 582h1v1h-1zM742 597h1v1h-1zM742 612h1v1h-1zM742 628h1v1h-1zM742 643h1v1h-1zM742 658h1v1h-1zM742 673h1v1h-1zM742 688h1v1h-1zM742 703h1v1h-1zM742 718h1v1h-1zM742 734h1v1h-1zM742 749h1v1h-1zM742 764h1v1h-1zM742 779h1v1h-1zM742 794h1v1h-1zM742 809h1v1h-1zM742 824h1v1h-1zM742 839h1v1h-1zM742 855h1v1h-1zM742 870h1v1h-1zM742 885h1v1h-1zM742 900h1v1h-1zM742 915h1v1h-1zM742 930h1v1h-1zM742 945h1v1h-1zM742 960h1v1h-1zM742 976h1v1h-1zM757 83h1v1h-1zM757 98h1v1h-1zM757 113h1v1h-1zM757 128h1v1h-1zM757 144h1v1h-1zM757 159h1v1h-1zM757 174h1v1h-1zM757 189h1v1h-1zM757 204h1v1h-1zM757 219h1v1h-1zM757 234h1v1h-1zM757 249h1v1h-1zM757 265h1v1h-1zM757 280h1v1h-1zM757 295h1v1h-1zM757 310h1v1h-1zM757 325h1v1h-1zM757 340h1v1h-1zM757 355h1v1h-1zM757 370h1v1h-1zM757 386h1v1h-1zM757 401h1v1h-1zM757 416h1v1h-1zM757 431h1v1h-1zM757 446h1v1h-1zM757 461h1v1h-1zM757 476h1v1h-1zM757 491h1v1h-1zM757 507h1v1h-1zM757 522h1v1h-1zM757 537h1v1h-1zM757 552h1v1h-1zM757 567h1v1h-1zM757 582h1v1h-1zM757 597h1v1h-1zM757 612h1v1h-1zM757 628h1v1h-1zM757 643h1v1h-1zM757 658h1v1h-1zM757 673h1v1h-1zM757 688h1v1h-1zM757 703h1v1h-1zM757 718h1v1h-1zM757 734h1v1h-1zM757 749h1v1h-1zM757 764h1v1h-1zM757 779h1v1h-1zM757 794h1v1h-1zM757 809h1v1h-1zM757 824h1v1h-1zM757 839h1v1h-1zM757 855h1v1h-1zM757 870h1v1h-1zM757 885h1v1h-1zM757 900h1v1h-1zM757 915h1v1h-1zM757 930h1v1h-1zM757 945h1v1h-1zM757 960h1v1h-1zM757 976h1v1h-1zM772 83h1v1h-1zM772 98h1v1h-1zM772 113h1v1h-1zM772 128h1v1h-1zM772 144h1v1h-1zM772 159h1v1h-1zM772 174h1v1h-1zM772 189h1v1h-1zM772 204h1v1h-1zM772 219h1v1h-1zM772 234h1v1h-1zM772 249h1v1h-1zM772 265h1v1h-1zM772 280h1v1h-1zM772 295h1v1h-1zM772 310h1v1h-1zM772 325h1v1h-1zM772 340h1v1h-1zM772 355h1v1h-1zM772 370h1v1h-1zM772 386h1v1h-1zM772 401h1v1h-1zM772 416h1v1h-1zM772 431h1v1h-1zM772 446h1v1h-1zM772 461h1v1h-1zM772 476h1v1h-1zM772 491h1v1h-1zM772 507h1v1h-1zM772 522h1v1h-1zM772 537h1v1h-1zM772 552h1v1h-1zM772 567h1v1h-1zM772 582h1v1h-1zM772 597h1v1h-1zM772 612h1v1h-1zM772 628h1v1h-1zM772 643h1v1h-1zM772 658h1v1h-1zM772 673h1v1h-1zM772 688h1v1h-1zM772 703h1v1h-1zM772 718h1v1h-1zM772 734h1v1h-1zM772 749h1v1h-1zM772 764h1v1h-1zM772 779h1v1h-1zM772 794h1v1h-1zM772 809h1v1h-1zM772 824h1v1h-1zM772 839h1v1h-1zM772 855h1v1h-1zM772 870h1v1h-1zM772 885h1v1h-1zM772 900h1v1h-1zM772 915h1v1h-1zM772 930h1v1h-1zM772 945h1v1h-1zM772 960h1v1h-1zM772 976h1v1h-1zM788 83h1v1h-1zM788 98h1v1h-1zM788 113h1v1h-1zM788 128h1v1h-1zM788 144h1v1h-1zM788 159h1v1h-1zM788 174h1v1h-1zM788 189h1v1h-1zM788 204h1v1h-1zM788 219h1v1h-1zM788 234h1v1h-1zM788 249h1v1h-1zM788 265h1v1h-1zM788 280h1v1h-1zM788 295h1v1h-1zM788 310h1v1h-1zM788 325h1v1h-1zM788 340h1v1h-1zM788 355h1v1h-1zM788 370h1v1h-1zM788 386h1v1h-1zM788 401h1v1h-1zM788 416h1v1h-1zM788 431h1v1h-1zM788 446h1v1h-1zM788 461h1v1h-1zM788 476h1v1h-1zM788 491h1v1h-1zM788 507h1v1h-1zM788 522h1v1h-1zM788 537h1v1h-1zM788 552h1v1h-1zM788 567h1v1h-1zM788 582h1v1h-1zM788 597h1v1h-1zM788 612h1v1h-1zM788 628h1v1h-1zM788 643h1v1h-1zM788 658h1v1h-1zM788 673h1v1h-1zM788 688h1v1h-1zM788 703h1v1h-1zM788 718h1v1h-1zM788 734h1v1h-1zM788 749h1v1h-1zM788 764h1v1h-1zM788 779h1v1h-1zM788 794h1v1h-1zM788 809h1v1h-1zM788 824h1v1h-1zM788 839h1v1h-1zM788 855h1v1h-1zM788 870h1v1h-1zM788 885h1v1h-1zM788 900h1v1h-1zM788 915h1v1h-1zM788 930h1v1h-1zM788 945h1v1h-1zM788 960h1v1h-1zM788 976h1v1h-1zM803 83h1v1h-1zM803 98h1v1h-1zM803 113h1v1h-1zM803 128h1v1h-1zM803 144h1v1h-1zM803 159h1v1h-1zM803 174h1v1h-1zM803 189h1v1h-1zM803 204h1v1h-1zM803 219h1v1h-1zM803 234h1v1h-1zM803 249h1v1h-1zM803 265h1v1h-1zM803 280h1v1h-1zM803 295h1v1h-1zM803 310h1v1h-1zM803 325h1v1h-1zM803 340h1v1h-1zM803 355h1v1h-1zM803 370h1v1h-1zM803 386h1v1h-1zM803 401h1v1h-1zM803 416h1v1h-1zM803 431h1v1h-1zM803 446h1v1h-1zM803 461h1v1h-1zM803 476h1v1h-1zM803 491h1v1h-1zM803 507h1v1h-1zM803 522h1v1h-1zM803 537h1v1h-1zM803 552h1v1h-1zM803 567h1v1h-1zM803 582h1v1h-1zM803 597h1v1h-1zM803 612h1v1h-1zM803 628h1v1h-1zM803 643h1v1h-1zM803 658h1v1h-1zM803 673h1v1h-1zM803 688h1v1h-1zM803 703h1v1h-1zM803 718h1v1h-1zM803 734h1v1h-1zM803 749h1v1h-1zM803 764h1v1h-1zM803 779h1v1h-1zM803 794h1v1h-1zM803 809h1v1h-1zM803 824h1v1h-1zM803 839h1v1h-1zM803 855h1v1h-1zM803 870h1v1h-1zM803 885h1v1h-1zM803 900h1v1h-1zM803 915h1v1h-1zM803 930h1v1h-1zM803 945h1v1h-1zM803 960h1v1h-1zM803 976h1v1h-1zM818 83h1v1h-1zM818 98h1v1h-1zM818 113h1v1h-1zM818 128h1v1h-1zM818 144h1v1h-1zM818 159h1v1h-1zM818 174h1v1h-1zM818 189h1v1h-1zM818 204h1v1h-1zM818 219h1v1h-1zM818 234h1v1h-1zM818 249h1v1h-1zM818 265h1v1h-1zM818 280h1v1h-1zM818 295h1v1h-1zM818 310h1v1h-1zM818 325h1v1h-1zM818 340h1v1h-1zM818 355h1v1h-1zM818 370h1v1h-1zM818 386h1v1h-1zM818 401h1v1h-1zM818 416h1v1h-1zM818 431h1v1h-1zM818 446h1v1h-1zM818 461h1v1h-1zM818 476h1v1h-1zM818 491h1v1h-1zM818 507h1v1h-1zM818 522h1v1h-1zM818 537h1v1h-1zM818 552h1v1h-1zM818 567h1v1h-1zM818 582h1v1h-1zM818 597h1v1h-1zM818 612h1v1h-1zM818 628h1v1h-1zM818 643h1v1h-1zM818 658h1v1h-1zM818 673h1v1h-1zM818 688h1v1h-1zM818 703h1v1h-1zM818 718h1v1h-1zM818 734h1v1h-1zM818 749h1v1h-1zM818 764h1v1h-1zM818 779h1v1h-1zM818 794h1v1h-1zM818 809h1v1h-1zM818 824h1v1h-1zM818 839h1v1h-1zM818 855h1v1h-1zM818 870h1v1h-1zM818 885h1v1h-1zM818 900h1v1h-1zM818 915h1v1h-1zM818 930h1v1h-1zM818 945h1v1h-1zM818 960h1v1h-1zM818 976h1v1h-1zM833 83h1v1h-1zM833 98h1v1h-1zM833 113h1v1h-1zM833 128h1v1h-1zM833 144h1v1h-1zM833 159h1v1h-1zM833 174h1v1h-1zM833 189h1v1h-1zM833 204h1v1h-1zM833 219h1v1h-1zM833 234h1v1h-1zM833 249h1v1h-1zM833 265h1v1h-1zM833 280h1v1h-1zM833 295h1v1h-1zM833 310h1v1h-1zM833 325h1v1h-1zM833 340h1v1h-1zM833 355h1v1h-1zM833 370h1v1h-1zM833 386h1v1h-1zM833 401h1v1h-1zM833 416h1v1h-1zM833 431h1v1h-1zM833 446h1v1h-1zM833 461h1v1h-1zM833 476h1v1h-1zM833 491h1v1h-1zM833 507h1v1h-1zM833 522h1v1h-1zM833 537h1v1h-1zM833 552h1v1h-1zM833 567h1v1h-1zM833 582h1v1h-1zM833 597h1v1h-1zM833 612h1v1h-1zM833 628h1v1h-1zM833 643h1v1h-1zM833 658h1v1h-1zM833 673h1v1h-1zM833 688h1v1h-1zM833 703h1v1h-1zM833 718h1v1h-1zM833 734h1v1h-1zM833 749h1v1h-1zM833 764h1v1h-1zM833 779h1v1h-1zM833 794h1v1h-1zM833 809h1v1h-1zM833 824h1v1h-1zM833 839h1v1h-1zM833 855h1v1h-1zM833 870h1v1h-1zM833 885h1v1h-1zM833 900h1v1h-1zM833 915h1v1h-1zM833 930h1v1h-1zM833 945h1v1h-1zM833 960h1v1h-1zM833 976h1v1h-1zM848 83h1v1h-1zM848 98h1v1h-1zM848 113h1v1h-1zM848 128h1v1h-1zM848 144h1v1h-1zM848 159h1v1h-1zM848 174h1v1h-1zM848 189h1v1h-1zM848 204h1v1h-1zM848 219h1v1h-1zM848 234h1v1h-1zM848 249h1v1h-1zM848 265h1v1h-1zM848 280h1v1h-1zM848 295h1v1h-1zM848 310h1v1h-1zM848 325h1v1h-1zM848 340h1v1h-1zM848 355h1v1h-1zM848 370h1v1h-1zM848 386h1v1h-1zM848 401h1v1h-1zM848 416h1v1h-1zM848 431h1v1h-1zM848 446h1v1h-1zM848 461h1v1h-1zM848 476h1v1h-1zM848 491h1v1h-1zM848 507h1v1h-1zM848 522h1v1h-1zM848 537h1v1h-1zM848 552h1v1h-1zM848 567h1v1h-1zM848 582h1v1h-1zM848 597h1v1h-1zM848 612h1v1h-1zM848 628h1v1h-1zM848 643h1v1h-1zM848 658h1v1h-1zM848 673h1v1h-1zM848 688h1v1h-1zM848 703h1v1h-1zM848 718h1v1h-1zM848 734h1v1h-1zM848 749h1v1h-1zM848 764h1v1h-1zM848 779h1v1h-1zM848 794h1v1h-1zM848 809h1v1h-1zM848 824h1v1h-1zM848 839h1v1h-1zM848 855h1v1h-1zM848 870h1v1h-1zM848 885h1v1h-1zM848 900h1v1h-1zM848 915h1v1h-1zM848 930h1v1h-1zM848 945h1v1h-1zM848 960h1v1h-1zM848 976h1v1h-1zM863 83h1v1h-1zM863 98h1v1h-1zM863 113h1v1h-1zM863 128h1v1h-1zM863 144h1v1h-1zM863 159h1v1h-1zM863 174h1v1h-1zM863 189h1v1h-1zM863 204h1v1h-1zM863 219h1v1h-1zM863 234h1v1h-1zM863 249h1v1h-1zM863 265h1v1h-1zM863 280h1v1h-1zM863 295h1v1h-1zM863 310h1v1h-1zM863 325h1v1h-1zM863 340h1v1h-1zM863 355h1v1h-1zM863 370h1v1h-1zM863 386h1v1h-1zM863 401h1v1h-1zM863 416h1v1h-1zM863 431h1v1h-1zM863 446h1v1h-1zM863 461h1v1h-1zM863 476h1v1h-1zM863 491h1v1h-1zM863 507h1v1h-1zM863 522h1v1h-1zM863 537h1v1h-1zM863 552h1v1h-1zM863 567h1v1h-1zM863 582h1v1h-1zM863 597h1v1h-1zM863 612h1v1h-1zM863 628h1v1h-1zM863 643h1v1h-1zM863 658h1v1h-1zM863 673h1v1h-1zM863 688h1v1h-1zM863 703h1v1h-1zM863 718h1v1h-1zM863 734h1v1h-1zM863 749h1v1h-1zM863 764h1v1h-1zM863 779h1v1h-1zM863 794h1v1h-1zM863 809h1v1h-1zM863 824h1v1h-1zM863 839h1v1h-1zM863 855h1v1h-1zM863 870h1v1h-1zM863 885h1v1h-1zM863 900h1v1h-1zM863 915h1v1h-1zM863 930h1v1h-1zM863 945h1v1h-1zM863 960h1v1h-1zM863 976h1v1h-1zM878 83h1v1h-1zM878 98h1v1h-1zM878 113h1v1h-1zM878 128h1v1h-1zM878 144h1v1h-1zM878 159h1v1h-1zM878 174h1v1h-1zM878 189h1v1h-1zM878 204h1v1h-1zM878 219h1v1h-1zM878 234h1v1h-1zM878 249h1v1h-1zM878 265h1v1h-1zM878 280h1v1h-1zM878 295h1v1h-1zM878 310h1v1h-1zM878 325h1v1h-1zM878 340h1v1h-1zM878 355h1v1h-1zM878 370h1v1h-1zM878 386h1v1h-1zM878 401h1v1h-1zM878 416h1v1h-1zM878 431h1v1h-1zM878 446h1v1h-1zM878 461h1v1h-1zM878 476h1v1h-1zM878 491h1v1h-1zM878 507h1v1h-1zM878 522h1v1h-1zM878 537h1v1h-1zM878 552h1v1h-1zM878 567h1v1h-1zM878 582h1v1h-1zM878 597h1v1h-1zM878 612h1v1h-1zM878 628h1v1h-1zM878 643h1v1h-1zM878 658h1v1h-1zM878 673h1v1h-1zM878 688h1v1h-1zM878 703h1v1h-1zM878 718h1v1h-1zM878 734h1v1h-1zM878 749h1v1h-1zM878 764h1v1h-1zM878 779h1v1h-1zM878 794h1v1h-1zM878 809h1v1h-1zM878 824h1v1h-1zM878 839h1v1h-1zM878 855h1v1h-1zM878 870h1v1h-1zM878 885h1v1h-1zM878 900h1v1h-1zM878 915h1v1h-1zM878 930h1v1h-1zM878 945h1v1h-1zM878 960h1v1h-1zM878 976h1v1h-1zM893 83h1v1h-1zM893 98h1v1h-1zM893 113h1v1h-1zM893 128h1v1h-1zM893 144h1v1h-1zM893 159h1v1h-1zM893 174h1v1h-1zM893 189h1v1h-1zM893 204h1v1h-1zM893 219h1v1h-1zM893 234h1v1h-1zM893 249h1v1h-1zM893 265h1v1h-1zM893 280h1v1h-1zM893 295h1v1h-1zM893 310h1v1h-1zM893 325h1v1h-1zM893 340h1v1h-1zM893 355h1v1h-1zM893 370h1v1h-1zM893 386h1v1h-1zM893 401h1v1h-1zM893 416h1v1h-1zM893 431h1v1h-1zM893 446h1v1h-1zM893 461h1v1h-1zM893 476h1v1h-1zM893 491h1v1h-1zM893 507h1v1h-1zM893 522h1v1h-1zM893 537h1v1h-1zM893 552h1v1h-1zM893 567h1v1h-1zM893 582h1v1h-1zM893 597h1v1h-1zM893 612h1v1h-1zM893 628h1v1h-1zM893 643h1v1h-1zM893 658h1v1h-1zM893 673h1v1h-1zM893 688h1v1h-1zM893 703h1v1h-1zM893 718h1v1h-1zM893 734h1v1h-1zM893 749h1v1h-1zM893 764h1v1h-1zM893 779h1v1h-1zM893 794h1v1h-1zM893 809h1v1h-1zM893 824h1v1h-1zM893 839h1v1h-1zM893 855h1v1h-1zM893 870h1v1h-1zM893 885h1v1h-1zM893 900h1v1h-1zM893 915h1v1h-1zM893 930h1v1h-1zM893 945h1v1h-1zM893 960h1v1h-1zM893 976h1v1h-1zM909 83h1v1h-1zM909 98h1v1h-1zM909 113h1v1h-1zM909 128h1v1h-1zM909 144h1v1h-1zM909 159h1v1h-1zM909 174h1v1h-1zM909 189h1v1h-1zM909 204h1v1h-1zM909 219h1v1h-1zM909 234h1v1h-1zM909 249h1v1h-1zM909 265h1v1h-1zM909 280h1v1h-1zM909 295h1v1h-1zM909 310h1v1h-1zM909 325h1v1h-1zM909 340h1v1h-1zM909 355h1v1h-1zM909 370h1v1h-1zM909 386h1v1h-1zM909 401h1v1h-1zM909 416h1v1h-1zM909 431h1v1h-1zM909 446h1v1h-1zM909 461h1v1h-1zM909 476h1v1h-1zM909 491h1v1h-1zM909 507h1v1h-1zM909 522h1v1h-1zM909 537h1v1h-1zM909 552h1v1h-1zM909 567h1v1h-1zM909 582h1v1h-1zM909 597h1v1h-1zM909 612h1v1h-1zM909 628h1v1h-1zM909 643h1v1h-1zM909 658h1v1h-1zM909 673h1v1h-1zM909 688h1v1h-1zM909 703h1v1h-1zM909 718h1v1h-1zM909 734h1v1h-1zM909 749h1v1h-1zM909 764h1v1h-1zM909 779h1v1h-1zM909 794h1v1h-1zM909 809h1v1h-1zM909 824h1v1h-1zM909 839h1v1h-1zM909 855h1v1h-1zM909 870h1v1h-1zM909 885h1v1h-1zM909 900h1v1h-1zM909 915h1v1h-1zM909 930h1v1h-1zM909 945h1v1h-1zM909 960h1v1h-1zM909 976h1v1h-1zM924 83h1v1h-1zM924 98h1v1h-1zM924 113h1v1h-1zM924 128h1v1h-1zM924 144h1v1h-1zM924 159h1v1h-1zM924 174h1v1h-1zM924 189h1v1h-1zM924 204h1v1h-1zM924 219h1v1h-1zM924 234h1v1h-1zM924 249h1v1h-1zM924 265h1v1h-1zM924 280h1v1h-1zM924 295h1v1h-1zM924 310h1v1h-1zM924 325h1v1h-1zM924 340h1v1h-1zM924 355h1v1h-1zM924 370h1v1h-1zM924 386h1v1h-1zM924 401h1v1h-1zM924 416h1v1h-1zM924 431h1v1h-1zM924 446h1v1h-1zM924 461h1v1h-1zM924 476h1v1h-1zM924 491h1v1h-1zM924 507h1v1h-1zM924 522h1v1h-1zM924 537h1v1h-1zM924 552h1v1h-1zM924 567h1v1h-1zM924 582h1v1h-1zM924 597h1v1h-1zM924 612h1v1h-1zM924 628h1v1h-1zM924 643h1v1h-1zM924 658h1v1h-1zM924 673h1v1h-1zM924 688h1v1h-1zM924 703h1v1h-1zM924 718h1v1h-1zM924 734h1v1h-1zM924 749h1v1h-1zM924 764h1v1h-1zM924 779h1v1h-1zM924 794h1v1h-1zM924 809h1v1h-1zM924 824h1v1h-1zM924 839h1v1h-1zM924 855h1v1h-1zM924 870h1v1h-1zM924 885h1v1h-1zM924 900h1v1h-1zM924 915h1v1h-1zM924 930h1v1h-1zM924 945h1v1h-1zM924 960h1v1h-1zM924 976h1v1h-1zM939 83h1v1h-1zM939 98h1v1h-1zM939 113h1v1h-1zM939 128h1v1h-1zM939 144h1v1h-1zM939 159h1v1h-1zM939 174h1v1h-1zM939 189h1v1h-1zM939 204h1v1h-1zM939 219h1v1h-1zM939 234h1v1h-1zM939 249h1v1h-1zM939 265h1v1h-1zM939 280h1v1h-1zM939 295h1v1h-1zM939 310h1v1h-1zM939 325h1v1h-1zM939 340h1v1h-1zM939 355h1v1h-1zM939 370h1v1h-1zM939 386h1v1h-1zM939 401h1v1h-1zM939 416h1v1h-1zM939 431h1v1h-1zM939 446h1v1h-1zM939 461h1v1h-1zM939 476h1v1h-1zM939 491h1v1h-1zM939 507h1v1h-1zM939 522h1v1h-1zM939 537h1v1h-1zM939 552h1v1h-1zM939 567h1v1h-1zM939 582h1v1h-1zM939 597h1v1h-1zM939 612h1v1h-1zM939 628h1v1h-1zM939 643h1v1h-1zM939 658h1v1h-1zM939 673h1v1h-1zM939 688h1v1h-1zM939 703h1v1h-1zM939 718h1v1h-1zM939 734h1v1h-1zM939 749h1v1h-1zM939 764h1v1h-1zM939 779h1v1h-1zM939 794h1v1h-1zM939 809h1v1h-1zM939 824h1v1h-1zM939 839h1v1h-1zM939 855h1v1h-1zM939 870h1v1h-1zM939 885h1v1h-1zM939 900h1v1h-1zM939 915h1v1h-1zM939 930h1v1h-1zM939 945h1v1h-1zM939 960h1v1h-1zM939 976h1v1h-1zM954 83h1v1h-1zM954 98h1v1h-1zM954 113h1v1h-1zM954 128h1v1h-1zM954 144h1v1h-1zM954 159h1v1h-1zM954 174h1v1h-1zM954 189h1v1h-1zM954 204h1v1h-1zM954 219h1v1h-1zM954 234h1v1h-1zM954 249h1v1h-1zM954 265h1v1h-1zM954 280h1v1h-1zM954 295h1v1h-1zM954 310h1v1h-1zM954 325h1v1h-1zM954 340h1v1h-1zM954 355h1v1h-1zM954 370h1v1h-1zM954 386h1v1h-1zM954 401h1v1h-1zM954 416h1v1h-1zM954 431h1v1h-1zM954 446h1v1h-1zM954 461h1v1h-1zM954 476h1v1h-1zM954 491h1v1h-1zM954 507h1v1h-1zM954 522h1v1h-1zM954 537h1v1h-1zM954 552h1v1h-1zM954 567h1v1h-1zM954 582h1v1h-1zM954 597h1v1h-1zM954 612h1v1h-1zM954 628h1v1h-1zM954 643h1v1h-1zM954 658h1v1h-1zM954 673h1v1h-1zM954 688h1v1h-1zM954 703h1v1h-1zM954 718h1v1h-1zM954 734h1v1h-1zM954 749h1v1h-1zM954 764h1v1h-1zM954 779h1v1h-1zM954 794h1v1h-1zM954 809h1v1h-1zM954 824h1v1h-1zM954 839h1v1h-1zM954 855h1v1h-1zM954 870h1v1h-1zM954 885h1v1h-1zM954 900h1v1h-1zM954 915h1v1h-1zM954 930h1v1h-1zM954 945h1v1h-1zM954 960h1v1h-1zM954 976h1v1h-1zM969 83h1v1h-1zM969 98h1v1h-1zM969 113h1v1h-1zM969 128h1v1h-1zM969 144h1v1h-1zM969 159h1v1h-1zM969 174h1v1h-1zM969 189h1v1h-1zM969 204h1v1h-1zM969 219h1v1h-1zM969 234h1v1h-1zM969 249h1v1h-1zM969 265h1v1h-1zM969 280h1v1h-1zM969 295h1v1h-1zM969 310h1v1h-1zM969 325h1v1h-1zM969 340h1v1h-1zM969 355h1v1h-1zM969 370h1v1h-1zM969 386h1v1h-1zM969 401h1v1h-1zM969 416h1v1h-1zM969 431h1v1h-1zM969 446h1v1h-1zM969 461h1v1h-1zM969 476h1v1h-1zM969 491h1v1h-1zM969 507h1v1h-1zM969 522h1v1h-1zM969 537h1v1h-1zM969 552h1v1h-1zM969 567h1v1h-1zM969 582h1v1h-1zM969 597h1v1h-1zM969 612h1v1h-1zM969 628h1v1h-1zM969 643h1v1h-1zM969 658h1v1h-1zM969 673h1v1h-1zM969 688h1v1h-1zM969 703h1v1h-1zM969 718h1v1h-1zM969 734h1v1h-1zM969 749h1v1h-1zM969 764h1v1h-1zM969 779h1v1h-1zM969 794h1v1h-1zM969 809h1v1h-1zM969 824h1v1h-1zM969 839h1v1h-1zM969 855h1v1h-1zM969 870h1v1h-1zM969 885h1v1h-1zM969 900h1v1h-1zM969 915h1v1h-1zM969 930h1v1h-1zM969 945h1v1h-1zM969 960h1v1h-1zM969 976h1v1h-1zM984 83h1v1h-1zM984 98h1v1h-1zM984 113h1v1h-1zM984 128h1v1h-1zM984 144h1v1h-1zM984 159h1v1h-1zM984 174h1v1h-1zM984 189h1v1h-1zM984 204h1v1h-1zM984 219h1v1h-1zM984 234h1v1h-1zM984 249h1v1h-1zM984 265h1v1h-1zM984 280h1v1h-1zM984 295h1v1h-1zM984 310h1v1h-1zM984 325h1v1h-1zM984 340h1v1h-1zM984 355h1v1h-1zM984 370h1v1h-1zM984 386h1v1h-1zM984 401h1v1h-1zM984 416h1v1h-1zM984 431h1v1h-1zM984 446h1v1h-1zM984 461h1v1h-1zM984 476h1v1h-1zM984 491h1v1h-1zM984 507h1v1h-1zM984 522h1v1h-1zM984 537h1v1h-1zM984 552h1v1h-1zM984 567h1v1h-1zM984 582h1v1h-1zM984 597h1v1h-1zM984 612h1v1h-1zM984 628h1v1h-1zM984 643h1v1h-1zM984 658h1v1h-1zM984 673h1v1h-1zM984 688h1v1h-1zM984 703h1v1h-1zM984 718h1v1h-1zM984 734h1v1h-1zM984 749h1v1h-1zM984 764h1v1h-1zM984 779h1v1h-1zM984 794h1v1h-1zM984 809h1v1h-1zM984 824h1v1h-1zM984 839h1v1h-1zM984 855h1v1h-1zM984 870h1v1h-1zM984 885h1v1h-1zM984 900h1v1h-1zM984 915h1v1h-1zM984 930h1v1h-1zM984 945h1v1h-1zM984 960h1v1h-1zM984 976h1v1h-1zM999 83h1v1h-1zM999 98h1v1h-1zM999 113h1v1h-1zM999 128h1v1h-1zM999 144h1v1h-1zM999 159h1v1h-1zM999 174h1v1h-1zM999 189h1v1h-1zM999 204h1v1h-1zM999 219h1v1h-1zM999 234h1v1h-1zM999 249h1v1h-1zM999 265h1v1h-1zM999 280h1v1h-1zM999 295h1v1h-1zM999 310h1v1h-1zM999 325h1v1h-1zM999 340h1v1h-1zM999 355h1v1h-1zM999 370h1v1h-1zM999 386h1v1h-1zM999 401h1v1h-1zM999 416h1v1h-1zM999 431h1v1h-1zM999 446h1v1h-1zM999 461h1v1h-1zM999 476h1v1h-1zM999 491h1v1h-1zM999 507h1v1h-1zM999 522h1v1h-1zM999 537h1v1h-1zM999 552h1v1h-1zM999 567h1v1h-1zM999 582h1v1h-1zM999 597h1v1h-1zM999 612h1v1h-1zM999 628h1v1h-1zM999 643h1v1h-1zM999 658h1v1h-1zM999 673h1v1h-1zM999 688h1v1h-1zM999 703h1v1h-1zM999 718h1v1h-1zM999 734h1v1h-1zM999 749h1v1h-1zM999 764h1v1h-1zM999 779h1v1h-1zM999 794h1v1h-1zM999 809h1v1h-1zM999 824h1v1h-1zM999 839h1v1h-1zM999 855h1v1h-1zM999 870h1v1h-1zM999 885h1v1h-1zM999 900h1v1h-1zM999 915h1v1h-1zM999 930h1v1h-1zM999 945h1v1h-1zM999 960h1v1h-1zM999 976h1v1h-1zM1015 83h1v1h-1zM1015 98h1v1h-1zM1015 113h1v1h-1zM1015 128h1v1h-1zM1015 144h1v1h-1zM1015 159h1v1h-1zM1015 174h1v1h-1zM1015 189h1v1h-1zM1015 204h1v1h-1zM1015 219h1v1h-1zM1015 234h1v1h-1zM1015 249h1v1h-1zM1015 265h1v1h-1zM1015 280h1v1h-1zM1015 295h1v1h-1zM1015 310h1v1h-1zM1015 325h1v1h-1zM1015 340h1v1h-1zM1015 355h1v1h-1zM1015 370h1v1h-1zM1015 386h1v1h-1zM1015 401h1v1h-1zM1015 416h1v1h-1zM1015 431h1v1h-1zM1015 446h1v1h-1zM1015 461h1v1h-1zM1015 476h1v1h-1zM1015 491h1v1h-1zM1015 507h1v1h-1zM1015 522h1v1h-1zM1015 537h1v1h-1zM1015 552h1v1h-1zM1015 567h1v1h-1zM1015 582h1v1h-1zM1015 597h1v1h-1zM1015 612h1v1h-1zM1015 628h1v1h-1zM1015 643h1v1h-1zM1015 658h1v1h-1zM1015 673h1v1h-1zM1015 688h1v1h-1zM1015 703h1v1h-1zM1015 718h1v1h-1zM1015 734h1v1h-1zM1015 749h1v1h-1zM1015 764h1v1h-1zM1015 779h1v1h-1zM1015 794h1v1h-1zM1015 809h1v1h-1zM1015 824h1v1h-1zM1015 839h1v1h-1zM1015 855h1v1h-1zM1015 870h1v1h-1zM1015 885h1v1h-1zM1015 900h1v1h-1zM1015 915h1v1h-1zM1015 930h1v1h-1zM1015 945h1v1h-1zM1015 960h1v1h-1zM1015 976h1v1h-1zM1030 83h1v1h-1zM1030 98h1v1h-1zM1030 113h1v1h-1zM1030 128h1v1h-1zM1030 144h1v1h-1zM1030 159h1v1h-1zM1030 174h1v1h-1zM1030 189h1v1h-1zM1030 204h1v1h-1zM1030 219h1v1h-1zM1030 234h1v1h-1zM1030 249h1v1h-1zM1030 265h1v1h-1zM1030 280h1v1h-1zM1030 295h1v1h-1zM1030 310h1v1h-1zM1030 325h1v1h-1zM1030 340h1v1h-1zM1030 355h1v1h-1zM1030 370h1v1h-1zM1030 386h1v1h-1zM1030 401h1v1h-1zM1030 416h1v1h-1zM1030 431h1v1h-1zM1030 446h1v1h-1zM1030 461h1v1h-1zM1030 476h1v1h-1zM1030 491h1v1h-1zM1030 507h1v1h-1zM1030 522h1v1h-1zM1030 537h1v1h-1zM1030 552h1v1h-1zM1030 567h1v1h-1zM1030 582h1v1h-1zM1030 597h1v1h-1zM1030 612h1v1h-1zM1030 628h1v1h-1zM1030 643h1v1h-1zM1030 658h1v1h-1zM1030 673h1v1h-1zM1030 688h1v1h-1zM1030 703h1v1h-1zM1030 718h1v1h-1zM1030 734h1v1h-1zM1030 749h1v1h-1zM1030 764h1v1h-1zM1030 779h1v1h-1zM1030 794h1v1h-1zM1030 809h1v1h-1zM1030 824h1v1h-1zM1030 839h1v1h-1zM1030 855h1v1h-1zM1030 870h1v1h-1zM1030 885h1v1h-1zM1030 900h1v1h-1zM1030 915h1v1h-1zM1030 930h1v1h-1zM1030 945h1v1h-1zM1030 960h1v1h-1zM1030 976h1v1h-1zM1045 83h1v1h-1zM1045 98h1v1h-1zM1045 113h1v1h-1zM1045 128h1v1h-1zM1045 144h1v1h-1zM1045 159h1v1h-1zM1045 174h1v1h-1zM1045 189h1v1h-1zM1045 204h1v1h-1zM1045 219h1v1h-1zM1045 234h1v1h-1zM1045 249h1v1h-1zM1045 265h1v1h-1zM1045 280h1v1h-1zM1045 295h1v1h-1zM1045 310h1v1h-1zM1045 325h1v1h-1zM1045 340h1v1h-1zM1045 355h1v1h-1zM1045 370h1v1h-1zM1045 386h1v1h-1zM1045 401h1v1h-1zM1045 416h1v1h-1zM1045 431h1v1h-1zM1045 446h1v1h-1zM1045 461h1v1h-1zM1045 476h1v1h-1zM1045 491h1v1h-1zM1045 507h1v1h-1zM1045 522h1v1h-1zM1045 537h1v1h-1zM1045 552h1v1h-1zM1045 567h1v1h-1zM1045 582h1v1h-1zM1045 597h1v1h-1zM1045 612h1v1h-1zM1045 628h1v1h-1zM1045 643h1v1h-1zM1045 658h1v1h-1zM1045 673h1v1h-1zM1045 688h1v1h-1zM1045 703h1v1h-1zM1045 718h1v1h-1zM1045 734h1v1h-1zM1045 749h1v1h-1zM1045 764h1v1h-1zM1045 779h1v1h-1zM1045 794h1v1h-1zM1045 809h1v1h-1zM1045 824h1v1h-1zM1045 839h1v1h-1zM1045 855h1v1h-1zM1045 870h1v1h-1zM1045 885h1v1h-1zM1045 900h1v1h-1zM1045 915h1v1h-1zM1045 930h1v1h-1zM1045 945h1v1h-1zM1045 960h1v1h-1zM1045 976h1v1h-1zM1060 83h1v1h-1zM1060 98h1v1h-1zM1060 113h1v1h-1zM1060 128h1v1h-1zM1060 144h1v1h-1zM1060 159h1v1h-1zM1060 174h1v1h-1zM1060 189h1v1h-1zM1060 204h1v1h-1zM1060 219h1v1h-1zM1060 234h1v1h-1zM1060 249h1v1h-1zM1060 265h1v1h-1zM1060 280h1v1h-1zM1060 295h1v1h-1zM1060 310h1v1h-1zM1060 325h1v1h-1zM1060 340h1v1h-1zM1060 355h1v1h-1zM1060 370h1v1h-1zM1060 386h1v1h-1zM1060 401h1v1h-1zM1060 416h1v1h-1zM1060 431h1v1h-1zM1060 446h1v1h-1zM1060 461h1v1h-1zM1060 476h1v1h-1zM1060 491h1v1h-1zM1060 507h1v1h-1zM1060 522h1v1h-1zM1060 537h1v1h-1zM1060 552h1v1h-1zM1060 567h1v1h-1zM1060 582h1v1h-1zM1060 597h1v1h-1zM1060 612h1v1h-1zM1060 628h1v1h-1zM1060 643h1v1h-1zM1060 658h1v1h-1zM1060 673h1v1h-1zM1060 688h1v1h-1zM1060 703h1v1h-1zM1060 718h1v1h-1zM1060 734h1v1h-1zM1060 749h1v1h-1zM1060 764h1v1h-1zM1060 779h1v1h-1zM1060 794h1v1h-1zM1060 809h1v1h-1zM1060 824h1v1h-1zM1060 839h1v1h-1zM1060 855h1v1h-1zM1060 870h1v1h-1zM1060 885h1v1h-1zM1060 900h1v1h-1zM1060 915h1v1h-1zM1060 930h1v1h-1zM1060 945h1v1h-1zM1060 960h1v1h-1zM1060 976h1v1h-1zM1075 83h1v1h-1zM1075 98h1v1h-1zM1075 113h1v1h-1zM1075 128h1v1h-1zM1075 144h1v1h-1zM1075 159h1v1h-1zM1075 174h1v1h-1zM1075 189h1v1h-1zM1075 204h1v1h-1zM1075 219h1v1h-1zM1075 234h1v1h-1zM1075 249h1v1h-1zM1075 265h1v1h-1zM1075 280h1v1h-1zM1075 295h1v1h-1zM1075 310h1v1h-1zM1075 325h1v1h-1zM1075 340h1v1h-1zM1075 355h1v1h-1zM1075 370h1v1h-1zM1075 386h1v1h-1zM1075 401h1v1h-1zM1075 416h1v1h-1zM1075 431h1v1h-1zM1075 446h1v1h-1zM1075 461h1v1h-1zM1075 476h1v1h-1zM1075 491h1v1h-1zM1075 507h1v1h-1zM1075 522h1v1h-1zM1075 537h1v1h-1zM1075 552h1v1h-1zM1075 567h1v1h-1zM1075 582h1v1h-1zM1075 597h1v1h-1zM1075 612h1v1h-1zM1075 628h1v1h-1zM1075 643h1v1h-1zM1075 658h1v1h-1zM1075 673h1v1h-1zM1075 688h1v1h-1zM1075 703h1v1h-1zM1075 718h1v1h-1zM1075 734h1v1h-1zM1075 749h1v1h-1zM1075 764h1v1h-1zM1075 779h1v1h-1zM1075 794h1v1h-1zM1075 809h1v1h-1zM1075 824h1v1h-1zM1075 839h1v1h-1zM1075 855h1v1h-1zM1075 870h1v1h-1zM1075 885h1v1h-1zM1075 900h1v1h-1zM1075 915h1v1h-1zM1075 930h1v1h-1zM1075 945h1v1h-1zM1075 960h1v1h-1zM1075 976h1v1h-1zM1090 83h1v1h-1zM1090 98h1v1h-1zM1090 113h1v1h-1zM1090 128h1v1h-1zM1090 144h1v1h-1zM1090 159h1v1h-1zM1090 174h1v1h-1zM1090 189h1v1h-1zM1090 204h1v1h-1zM1090 219h1v1h-1zM1090 234h1v1h-1zM1090 249h1v1h-1zM1090 265h1v1h-1zM1090 280h1v1h-1zM1090 295h1v1h-1zM1090 310h1v1h-1zM1090 325h1v1h-1zM1090 340h1v1h-1zM1090 355h1v1h-1zM1090 370h1v1h-1zM1090 386h1v1h-1zM1090 401h1v1h-1zM1090 416h1v1h-1zM1090 431h1v1h-1zM1090 446h1v1h-1zM1090 461h1v1h-1zM1090 476h1v1h-1zM1090 491h1v1h-1zM1090 507h1v1h-1zM1090 522h1v1h-1zM1090 537h1v1h-1zM1090 552h1v1h-1zM1090 567h1v1h-1zM1090 582h1v1h-1zM1090 597h1v1h-1zM1090 612h1v1h-1zM1090 628h1v1h-1zM1090 643h1v1h-1zM1090 658h1v1h-1zM1090 673h1v1h-1zM1090 688h1v1h-1zM1090 703h1v1h-1zM1090 718h1v1h-1zM1090 734h1v1h-1zM1090 749h1v1h-1zM1090 764h1v1h-1zM1090 779h1v1h-1zM1090 794h1v1h-1zM1090 809h1v1h-1zM1090 824h1v1h-1zM1090 839h1v1h-1zM1090 855h1v1h-1zM1090 870h1v1h-1zM1090 885h1v1h-1zM1090 900h1v1h-1zM1090 915h1v1h-1zM1090 930h1v1h-1zM1090 945h1v1h-1zM1090 960h1v1h-1zM1090 976h1v1h-1zM1105 83h1v1h-1zM1105 98h1v1h-1zM1105 113h1v1h-1zM1105 128h1v1h-1zM1105 144h1v1h-1zM1105 159h1v1h-1zM1105 174h1v1h-1zM1105 189h1v1h-1zM1105 204h1v1h-1zM1105 219h1v1h-1zM1105 234h1v1h-1zM1105 249h1v1h-1zM1105 265h1v1h-1zM1105 280h1v1h-1zM1105 295h1v1h-1zM1105 310h1v1h-1zM1105 325h1v1h-1zM1105 340h1v1h-1zM1105 355h1v1h-1zM1105 370h1v1h-1zM1105 386h1v1h-1zM1105 401h1v1h-1zM1105 416h1v1h-1zM1105 431h1v1h-1zM1105 446h1v1h-1zM1105 461h1v1h-1zM1105 476h1v1h-1zM1105 491h1v1h-1zM1105 507h1v1h-1zM1105 522h1v1h-1zM1105 537h1v1h-1zM1105 552h1v1h-1zM1105 567h1v1h-1zM1105 582h1v1h-1zM1105 597h1v1h-1zM1105 612h1v1h-1zM1105 628h1v1h-1zM1105 643h1v1h-1zM1105 658h1v1h-1zM1105 673h1v1h-1zM1105 688h1v1h-1zM1105 703h1v1h-1zM1105 718h1v1h-1zM1105 734h1v1h-1zM1105 749h1v1h-1zM1105 764h1v1h-1zM1105 779h1v1h-1zM1105 794h1v1h-1zM1105 809h1v1h-1zM1105 824h1v1h-1zM1105 839h1v1h-1zM1105 855h1v1h-1zM1105 870h1v1h-1zM1105 885h1v1h-1zM1105 900h1v1h-1zM1105 915h1v1h-1zM1105 930h1v1h-1zM1105 945h1v1h-1zM1105 960h1v1h-1zM1105 976h1v1h-1zM1120 83h1v1h-1zM1120 98h1v1h-1zM1120 113h1v1h-1zM1120 128h1v1h-1zM1120 144h1v1h-1zM1120 159h1v1h-1zM1120 174h1v1h-1zM1120 189h1v1h-1zM1120 204h1v1h-1zM1120 219h1v1h-1zM1120 234h1v1h-1zM1120 249h1v1h-1zM1120 265h1v1h-1zM1120 280h1v1h-1zM1120 295h1v1h-1zM1120 310h1v1h-1zM1120 325h1v1h-1zM1120 340h1v1h-1zM1120 355h1v1h-1zM1120 370h1v1h-1zM1120 386h1v1h-1zM1120 401h1v1h-1zM1120 416h1v1h-1zM1120 431h1v1h-1zM1120 446h1v1h-1zM1120 461h1v1h-1zM1120 476h1v1h-1zM1120 491h1v1h-1zM1120 507h1v1h-1zM1120 522h1v1h-1zM1120 537h1v1h-1zM1120 552h1v1h-1zM1120 567h1v1h-1zM1120 582h1v1h-1zM1120 597h1v1h-1zM1120 612h1v1h-1zM1120 628h1v1h-1zM1120 643h1v1h-1zM1120 658h1v1h-1zM1120 673h1v1h-1zM1120 688h1v1h-1zM1120 703h1v1h-1zM1120 718h1v1h-1zM1120 734h1v1h-1zM1120 749h1v1h-1zM1120 764h1v1h-1zM1120 779h1v1h-1zM1120 794h1v1h-1zM1120 809h1v1h-1zM1120 824h1v1h-1zM1120 839h1v1h-1zM1120 855h1v1h-1zM1120 870h1v1h-1zM1120 885h1v1h-1zM1120 900h1v1h-1zM1120 915h1v1h-1zM1120 930h1v1h-1zM1120 945h1v1h-1zM1120 960h1v1h-1zM1120 976h1v1h-1zM1136 83h1v1h-1zM1136 98h1v1h-1zM1136 113h1v1h-1zM1136 128h1v1h-1zM1136 144h1v1h-1zM1136 159h1v1h-1zM1136 174h1v1h-1zM1136 189h1v1h-1zM1136 204h1v1h-1zM1136 219h1v1h-1zM1136 234h1v1h-1zM1136 249h1v1h-1zM1136 265h1v1h-1zM1136 280h1v1h-1zM1136 295h1v1h-1zM1136 310h1v1h-1zM1136 325h1v1h-1zM1136 340h1v1h-1zM1136 355h1v1h-1zM1136 370h1v1h-1zM1136 386h1v1h-1zM1136 401h1v1h-1zM1136 416h1v1h-1zM1136 431h1v1h-1zM1136 446h1v1h-1zM1136 461h1v1h-1zM1136 476h1v1h-1zM1136 491h1v1h-1zM1136 507h1v1h-1zM1136 522h1v1h-1zM1136 537h1v1h-1zM1136 552h1v1h-1zM1136 567h1v1h-1zM1136 582h1v1h-1zM1136 597h1v1h-1zM1136 612h1v1h-1zM1136 628h1v1h-1zM1136 643h1v1h-1zM1136 658h1v1h-1zM1136 673h1v1h-1zM1136 688h1v1h-1zM1136 703h1v1h-1zM1136 718h1v1h-1zM1136 734h1v1h-1zM1136 749h1v1h-1zM1136 764h1v1h-1zM1136 779h1v1h-1zM1136 794h1v1h-1zM1136 809h1v1h-1zM1136 824h1v1h-1zM1136 839h1v1h-1zM1136 855h1v1h-1zM1136 870h1v1h-1zM1136 885h1v1h-1zM1136 900h1v1h-1zM1136 915h1v1h-1zM1136 930h1v1h-1zM1136 945h1v1h-1zM1136 960h1v1h-1zM1136 976h1v1h-1zM1151 83h1v1h-1zM1151 98h1v1h-1zM1151 113h1v1h-1zM1151 128h1v1h-1zM1151 144h1v1h-1zM1151 159h1v1h-1zM1151 174h1v1h-1zM1151 189h1v1h-1zM1151 204h1v1h-1zM1151 219h1v1h-1zM1151 234h1v1h-1zM1151 249h1v1h-1zM1151 265h1v1h-1zM1151 280h1v1h-1zM1151 295h1v1h-1zM1151 310h1v1h-1zM1151 325h1v1h-1zM1151 340h1v1h-1zM1151 355h1v1h-1zM1151 370h1v1h-1zM1151 386h1v1h-1zM1151 401h1v1h-1zM1151 416h1v1h-1zM1151 431h1v1h-1zM1151 446h1v1h-1zM1151 461h1v1h-1zM1151 476h1v1h-1zM1151 491h1v1h-1zM1151 507h1v1h-1zM1151 522h1v1h-1zM1151 537h1v1h-1zM1151 552h1v1h-1zM1151 567h1v1h-1zM1151 582h1v1h-1zM1151 597h1v1h-1zM1151 612h1v1h-1zM1151 628h1v1h-1zM1151 643h1v1h-1zM1151 658h1v1h-1zM1151 673h1v1h-1zM1151 688h1v1h-1zM1151 703h1v1h-1zM1151 718h1v1h-1zM1151 734h1v1h-1zM1151 749h1v1h-1zM1151 764h1v1h-1zM1151 779h1v1h-1zM1151 794h1v1h-1zM1151 809h1v1h-1zM1151 824h1v1h-1zM1151 839h1v1h-1zM1151 855h1v1h-1zM1151 870h1v1h-1zM1151 885h1v1h-1zM1151 900h1v1h-1zM1151 915h1v1h-1zM1151 930h1v1h-1zM1151 945h1v1h-1zM1151 960h1v1h-1zM1151 976h1v1h-1zM1166 83h1v1h-1zM1166 98h1v1h-1zM1166 113h1v1h-1zM1166 128h1v1h-1zM1166 144h1v1h-1zM1166 159h1v1h-1zM1166 174h1v1h-1zM1166 189h1v1h-1zM1166 204h1v1h-1zM1166 219h1v1h-1zM1166 234h1v1h-1zM1166 249h1v1h-1zM1166 265h1v1h-1zM1166 280h1v1h-1zM1166 295h1v1h-1zM1166 310h1v1h-1zM1166 325h1v1h-1zM1166 340h1v1h-1zM1166 355h1v1h-1zM1166 370h1v1h-1zM1166 386h1v1h-1zM1166 401h1v1h-1zM1166 416h1v1h-1zM1166 431h1v1h-1zM1166 446h1v1h-1zM1166 461h1v1h-1zM1166 476h1v1h-1zM1166 491h1v1h-1zM1166 507h1v1h-1zM1166 522h1v1h-1zM1166 537h1v1h-1zM1166 552h1v1h-1zM1166 567h1v1h-1zM1166 582h1v1h-1zM1166 597h1v1h-1zM1166 612h1v1h-1zM1166 628h1v1h-1zM1166 643h1v1h-1zM1166 658h1v1h-1zM1166 673h1v1h-1zM1166 688h1v1h-1zM1166 703h1v1h-1zM1166 718h1v1h-1zM1166 734h1v1h-1zM1166 749h1v1h-1zM1166 764h1v1h-1zM1166 779h1v1h-1zM1166 794h1v1h-1zM1166 809h1v1h-1zM1166 824h1v1h-1zM1166 839h1v1h-1zM1166 855h1v1h-1zM1166 870h1v1h-1zM1166 885h1v1h-1zM1166 900h1v1h-1zM1166 915h1v1h-1zM1166 930h1v1h-1zM1166 945h1v1h-1zM1166 960h1v1h-1zM1166 976h1v1h-1zM1181 83h1v1h-1zM1181 98h1v1h-1zM1181 113h1v1h-1zM1181 128h1v1h-1zM1181 144h1v1h-1zM1181 159h1v1h-1zM1181 174h1v1h-1zM1181 189h1v1h-1zM1181 204h1v1h-1zM1181 219h1v1h-1zM1181 234h1v1h-1zM1181 249h1v1h-1zM1181 265h1v1h-1zM1181 280h1v1h-1zM1181 295h1v1h-1zM1181 310h1v1h-1zM1181 325h1v1h-1zM1181 340h1v1h-1zM1181 355h1v1h-1zM1181 370h1v1h-1zM1181 386h1v1h-1zM1181 401h1v1h-1zM1181 416h1v1h-1zM1181 431h1v1h-1zM1181 446h1v1h-1zM1181 461h1v1h-1zM1181 476h1v1h-1zM1181 491h1v1h-1zM1181 507h1v1h-1zM1181 522h1v1h-1zM1181 537h1v1h-1zM1181 552h1v1h-1zM1181 567h1v1h-1zM1181 582h1v1h-1zM1181 597h1v1h-1zM1181 612h1v1h-1zM1181 628h1v1h-1zM1181 643h1v1h-1zM1181 658h1v1h-1zM1181 673h1v1h-1zM1181 688h1v1h-1zM1181 703h1v1h-1zM1181 718h1v1h-1zM1181 734h1v1h-1zM1181 749h1v1h-1zM1181 764h1v1h-1zM1181 779h1v1h-1zM1181 794h1v1h-1zM1181 809h1v1h-1zM1181 824h1v1h-1zM1181 839h1v1h-1zM1181 855h1v1h-1zM1181 870h1v1h-1zM1181 885h1v1h-1zM1181 900h1v1h-1zM1181 915h1v1h-1zM1181 930h1v1h-1zM1181 945h1v1h-1zM1181 960h1v1h-1zM1181 976h1v1h-1zM1196 83h1v1h-1zM1196 98h1v1h-1zM1196 113h1v1h-1zM1196 128h1v1h-1zM1196 144h1v1h-1zM1196 159h1v1h-1zM1196 174h1v1h-1zM1196 189h1v1h-1zM1196 204h1v1h-1zM1196 219h1v1h-1zM1196 234h1v1h-1zM1196 249h1v1h-1zM1196 265h1v1h-1zM1196 280h1v1h-1zM1196 295h1v1h-1zM1196 310h1v1h-1zM1196 325h1v1h-1zM1196 340h1v1h-1zM1196 355h1v1h-1zM1196 370h1v1h-1zM1196 386h1v1h-1zM1196 401h1v1h-1zM1196 416h1v1h-1zM1196 431h1v1h-1zM1196 446h1v1h-1zM1196 461h1v1h-1zM1196 476h1v1h-1zM1196 491h1v1h-1zM1196 507h1v1h-1zM1196 522h1v1h-1zM1196 537h1v1h-1zM1196 552h1v1h-1zM1196 567h1v1h-1zM1196 582h1v1h-1zM1196 597h1v1h-1zM1196 612h1v1h-1zM1196 628h1v1h-1zM1196 643h1v1h-1zM1196 658h1v1h-1zM1196 673h1v1h-1zM1196 688h1v1h-1zM1196 703h1v1h-1zM1196 718h1v1h-1zM1196 734h1v1h-1zM1196 749h1v1h-1zM1196 764h1v1h-1zM1196 779h1v1h-1zM1196 794h1v1h-1zM1196 809h1v1h-1zM1196 824h1v1h-1zM1196 839h1v1h-1zM1196 855h1v1h-1zM1196 870h1v1h-1zM1196 885h1v1h-1zM1196 900h1v1h-1zM1196 915h1v1h-1zM1196 930h1v1h-1zM1196 945h1v1h-1zM1196 960h1v1h-1zM1196 976h1v1h-1zM1211 83h1v1h-1zM1211 98h1v1h-1zM1211 113h1v1h-1zM1211 128h1v1h-1zM1211 144h1v1h-1zM1211 159h1v1h-1zM1211 174h1v1h-1zM1211 189h1v1h-1zM1211 204h1v1h-1zM1211 219h1v1h-1zM1211 234h1v1h-1zM1211 249h1v1h-1zM1211 265h1v1h-1zM1211 280h1v1h-1zM1211 295h1v1h-1zM1211 310h1v1h-1zM1211 325h1v1h-1zM1211 340h1v1h-1zM1211 355h1v1h-1zM1211 370h1v1h-1zM1211 386h1v1h-1zM1211 401h1v1h-1zM1211 416h1v1h-1zM1211 431h1v1h-1zM1211 446h1v1h-1zM1211 461h1v1h-1zM1211 476h1v1h-1zM1211 491h1v1h-1zM1211 507h1v1h-1zM1211 522h1v1h-1zM1211 537h1v1h-1zM1211 552h1v1h-1zM1211 567h1v1h-1zM1211 582h1v1h-1zM1211 597h1v1h-1zM1211 612h1v1h-1zM1211 628h1v1h-1zM1211 643h1v1h-1zM1211 658h1v1h-1zM1211 673h1v1h-1zM1211 688h1v1h-1zM1211 703h1v1h-1zM1211 718h1v1h-1zM1211 734h1v1h-1zM1211 749h1v1h-1zM1211 764h1v1h-1zM1211 779h1v1h-1zM1211 794h1v1h-1zM1211 809h1v1h-1zM1211 824h1v1h-1zM1211 839h1v1h-1zM1211 855h1v1h-1zM1211 870h1v1h-1zM1211 885h1v1h-1zM1211 900h1v1h-1zM1211 915h1v1h-1zM1211 930h1v1h-1zM1211 945h1v1h-1zM1211 960h1v1h-1zM1211 976h1v1h-1zM1226 83h1v1h-1zM1226 98h1v1h-1zM1226 113h1v1h-1zM1226 128h1v1h-1zM1226 144h1v1h-1zM1226 159h1v1h-1zM1226 174h1v1h-1zM1226 189h1v1h-1zM1226 204h1v1h-1zM1226 219h1v1h-1zM1226 234h1v1h-1zM1226 249h1v1h-1zM1226 265h1v1h-1zM1226 280h1v1h-1zM1226 295h1v1h-1zM1226 310h1v1h-1zM1226 325h1v1h-1zM1226 340h1v1h-1zM1226 355h1v1h-1zM1226 370h1v1h-1zM1226 386h1v1h-1zM1226 401h1v1h-1zM1226 416h1v1h-1zM1226 431h1v1h-1zM1226 446h1v1h-1zM1226 461h1v1h-1zM1226 476h1v1h-1zM1226 491h1v1h-1zM1226 507h1v1h-1zM1226 522h1v1h-1zM1226 537h1v1h-1zM1226 552h1v1h-1zM1226 567h1v1h-1zM1226 582h1v1h-1zM1226 597h1v1h-1zM1226 612h1v1h-1zM1226 628h1v1h-1zM1226 643h1v1h-1zM1226 658h1v1h-1zM1226 673h1v1h-1zM1226 688h1v1h-1zM1226 703h1v1h-1zM1226 718h1v1h-1zM1226 734h1v1h-1zM1226 749h1v1h-1zM1226 764h1v1h-1zM1226 779h1v1h-1zM1226 794h1v1h-1zM1226 809h1v1h-1zM1226 824h1v1h-1zM1226 839h1v1h-1zM1226 855h1v1h-1zM1226 870h1v1h-1zM1226 885h1v1h-1zM1226 900h1v1h-1zM1226 915h1v1h-1zM1226 930h1v1h-1zM1226 945h1v1h-1zM1226 960h1v1h-1zM1226 976h1v1h-1zM1241 83h1v1h-1zM1241 98h1v1h-1zM1241 113h1v1h-1zM1241 128h1v1h-1zM1241 144h1v1h-1zM1241 159h1v1h-1zM1241 174h1v1h-1zM1241 189h1v1h-1zM1241 204h1v1h-1zM1241 219h1v1h-1zM1241 234h1v1h-1zM1241 249h1v1h-1zM1241 265h1v1h-1zM1241 280h1v1h-1zM1241 295h1v1h-1zM1241 310h1v1h-1zM1241 325h1v1h-1zM1241 340h1v1h-1zM1241 355h1v1h-1zM1241 370h1v1h-1zM1241 386h1v1h-1zM1241 401h1v1h-1zM1241 416h1v1h-1zM1241 431h1v1h-1zM1241 446h1v1h-1zM1241 461h1v1h-1zM1241 476h1v1h-1zM1241 491h1v1h-1zM1241 507h1v1h-1zM1241 522h1v1h-1zM1241 537h1v1h-1zM1241 552h1v1h-1zM1241 567h1v1h-1zM1241 582h1v1h-1zM1241 597h1v1h-1zM1241 612h1v1h-1zM1241 628h1v1h-1zM1241 643h1v1h-1zM1241 658h1v1h-1zM1241 673h1v1h-1zM1241 688h1v1h-1zM1241 703h1v1h-1zM1241 718h1v1h-1zM1241 734h1v1h-1zM1241 749h1v1h-1zM1241 764h1v1h-1zM1241 779h1v1h-1zM1241 794h1v1h-1zM1241 809h1v1h-1zM1241 824h1v1h-1zM1241 839h1v1h-1zM1241 855h1v1h-1zM1241 870h1v1h-1zM1241 885h1v1h-1zM1241 900h1v1h-1zM1241 915h1v1h-1zM1241 930h1v1h-1zM1241 945h1v1h-1zM1241 960h1v1h-1zM1241 976h1v1h-1zM1257 83h1v1h-1zM1257 98h1v1h-1zM1257 113h1v1h-1zM1257 128h1v1h-1zM1257 144h1v1h-1zM1257 159h1v1h-1zM1257 174h1v1h-1zM1257 189h1v1h-1zM1257 204h1v1h-1zM1257 219h1v1h-1zM1257 234h1v1h-1zM1257 249h1v1h-1zM1257 265h1v1h-1zM1257 280h1v1h-1zM1257 295h1v1h-1zM1257 310h1v1h-1zM1257 325h1v1h-1zM1257 340h1v1h-1zM1257 355h1v1h-1zM1257 370h1v1h-1zM1257 386h1v1h-1zM1257 401h1v1h-1zM1257 416h1v1h-1zM1257 431h1v1h-1zM1257 446h1v1h-1zM1257 461h1v1h-1zM1257 476h1v1h-1zM1257 491h1v1h-1zM1257 507h1v1h-1zM1257 522h1v1h-1zM1257 537h1v1h-1zM1257 552h1v1h-1zM1257 567h1v1h-1zM1257 582h1v1h-1zM1257 597h1v1h-1zM1257 612h1v1h-1zM1257 628h1v1h-1zM1257 643h1v1h-1zM1257 658h1v1h-1zM1257 673h1v1h-1zM1257 688h1v1h-1zM1257 703h1v1h-1zM1257 718h1v1h-1zM1257 734h1v1h-1zM1257 749h1v1h-1zM1257 764h1v1h-1zM1257 779h1v1h-1zM1257 794h1v1h-1zM1257 809h1v1h-1zM1257 824h1v1h-1zM1257 839h1v1h-1zM1257 855h1v1h-1zM1257 870h1v1h-1zM1257 885h1v1h-1zM1257 900h1v1h-1zM1257 915h1v1h-1zM1257 930h1v1h-1zM1257 945h1v1h-1zM1257 960h1v1h-1zM1257 976h1v1h-1zM1272 83h1v1h-1zM1272 98h1v1h-1zM1272 113h1v1h-1zM1272 128h1v1h-1zM1272 144h1v1h-1zM1272 159h1v1h-1zM1272 174h1v1h-1zM1272 189h1v1h-1zM1272 204h1v1h-1zM1272 219h1v1h-1zM1272 234h1v1h-1zM1272 249h1v1h-1zM1272 265h1v1h-1zM1272 280h1v1h-1zM1272 295h1v1h-1zM1272 310h1v1h-1zM1272 325h1v1h-1zM1272 340h1v1h-1zM1272 355h1v1h-1zM1272 370h1v1h-1zM1272 386h1v1h-1zM1272 401h1v1h-1zM1272 416h1v1h-1zM1272 431h1v1h-1zM1272 446h1v1h-1zM1272 461h1v1h-1zM1272 476h1v1h-1zM1272 491h1v1h-1zM1272 507h1v1h-1zM1272 522h1v1h-1zM1272 537h1v1h-1zM1272 552h1v1h-1zM1272 567h1v1h-1zM1272 582h1v1h-1zM1272 597h1v1h-1zM1272 612h1v1h-1zM1272 628h1v1h-1zM1272 643h1v1h-1zM1272 658h1v1h-1zM1272 673h1v1h-1zM1272 688h1v1h-1zM1272 703h1v1h-1zM1272 718h1v1h-1zM1272 734h1v1h-1zM1272 749h1v1h-1zM1272 764h1v1h-1zM1272 779h1v1h-1zM1272 794h1v1h-1zM1272 809h1v1h-1zM1272 824h1v1h-1zM1272 839h1v1h-1zM1272 855h1v1h-1zM1272 870h1v1h-1zM1272 885h1v1h-1zM1272 900h1v1h-1zM1272 915h1v1h-1zM1272 930h1v1h-1zM1272 945h1v1h-1zM1272 960h1v1h-1zM1272 976h1v1h-1zM1287 83h1v1h-1zM1287 98h1v1h-1zM1287 113h1v1h-1zM1287 128h1v1h-1zM1287 144h1v1h-1zM1287 159h1v1h-1zM1287 174h1v1h-1zM1287 189h1v1h-1zM1287 204h1v1h-1zM1287 219h1v1h-1zM1287 234h1v1h-1zM1287 249h1v1h-1zM1287 265h1v1h-1zM1287 280h1v1h-1zM1287 295h1v1h-1zM1287 310h1v1h-1zM1287 325h1v1h-1zM1287 340h1v1h-1zM1287 355h1v1h-1zM1287 370h1v1h-1zM1287 386h1v1h-1zM1287 401h1v1h-1zM1287 416h1v1h-1zM1287 431h1v1h-1zM1287 446h1v1h-1zM1287 461h1v1h-1zM1287 476h1v1h-1zM1287 491h1v1h-1zM1287 507h1v1h-1zM1287 522h1v1h-1zM1287 537h1v1h-1zM1287 552h1v1h-1zM1287 567h1v1h-1zM1287 582h1v1h-1zM1287 597h1v1h-1zM1287 612h1v1h-1zM1287 628h1v1h-1zM1287 643h1v1h-1zM1287 658h1v1h-1zM1287 673h1v1h-1zM1287 688h1v1h-1zM1287 703h1v1h-1zM1287 718h1v1h-1zM1287 734h1v1h-1zM1287 749h1v1h-1zM1287 764h1v1h-1zM1287 779h1v1h-1zM1287 794h1v1h-1zM1287 809h1v1h-1zM1287 824h1v1h-1zM1287 839h1v1h-1zM1287 855h1v1h-1zM1287 870h1v1h-1zM1287 885h1v1h-1zM1287 900h1v1h-1zM1287 915h1v1h-1zM1287 930h1v1h-1zM1287 945h1v1h-1zM1287 960h1v1h-1zM1287 976h1v1h-1zM1302 83h1v1h-1zM1302 98h1v1h-1zM1302 113h1v1h-1zM1302 128h1v1h-1zM1302 144h1v1h-1zM1302 159h1v1h-1zM1302 174h1v1h-1zM1302 189h1v1h-1zM1302 204h1v1h-1zM1302 219h1v1h-1zM1302 234h1v1h-1zM1302 249h1v1h-1zM1302 265h1v1h-1zM1302 280h1v1h-1zM1302 295h1v1h-1zM1302 310h1v1h-1zM1302 325h1v1h-1zM1302 340h1v1h-1zM1302 355h1v1h-1zM1302 370h1v1h-1zM1302 386h1v1h-1zM1302 401h1v1h-1zM1302 416h1v1h-1zM1302 431h1v1h-1zM1302 446h1v1h-1zM1302 461h1v1h-1zM1302 476h1v1h-1zM1302 491h1v1h-1zM1302 507h1v1h-1zM1302 522h1v1h-1zM1302 537h1v1h-1zM1302 552h1v1h-1zM1302 567h1v1h-1zM1302 582h1v1h-1zM1302 597h1v1h-1zM1302 612h1v1h-1zM1302 628h1v1h-1zM1302 643h1v1h-1zM1302 658h1v1h-1zM1302 673h1v1h-1zM1302 688h1v1h-1zM1302 703h1v1h-1zM1302 718h1v1h-1zM1302 734h1v1h-1zM1302 749h1v1h-1zM1302 764h1v1h-1zM1302 779h1v1h-1zM1302 794h1v1h-1zM1302 809h1v1h-1zM1302 824h1v1h-1zM1302 839h1v1h-1zM1302 855h1v1h-1zM1302 870h1v1h-1zM1302 885h1v1h-1zM1302 900h1v1h-1zM1302 915h1v1h-1zM1302 930h1v1h-1zM1302 945h1v1h-1zM1302 960h1v1h-1zM1302 976h1v1h-1zM1317 83h1v1h-1zM1317 98h1v1h-1zM1317 113h1v1h-1zM1317 128h1v1h-1zM1317 144h1v1h-1zM1317 159h1v1h-1zM1317 174h1v1h-1zM1317 189h1v1h-1zM1317 204h1v1h-1zM1317 219h1v1h-1zM1317 234h1v1h-1zM1317 249h1v1h-1zM1317 265h1v1h-1zM1317 280h1v1h-1zM1317 295h1v1h-1zM1317 310h1v1h-1zM1317 325h1v1h-1zM1317 340h1v1h-1zM1317 355h1v1h-1zM1317 370h1v1h-1zM1317 386h1v1h-1zM1317 401h1v1h-1zM1317 416h1v1h-1zM1317 431h1v1h-1zM1317 446h1v1h-1zM1317 461h1v1h-1zM1317 476h1v1h-1zM1317 491h1v1h-1zM1317 507h1v1h-1zM1317 522h1v1h-1zM1317 537h1v1h-1zM1317 552h1v1h-1zM1317 567h1v1h-1zM1317 582h1v1h-1zM1317 597h1v1h-1zM1317 612h1v1h-1zM1317 628h1v1h-1zM1317 643h1v1h-1zM1317 658h1v1h-1zM1317 673h1v1h-1zM1317 688h1v1h-1zM1317 703h1v1h-1zM1317 718h1v1h-1zM1317 734h1v1h-1zM1317 749h1v1h-1zM1317 764h1v1h-1zM1317 779h1v1h-1zM1317 794h1v1h-1zM1317 809h1v1h-1zM1317 824h1v1h-1zM1317 839h1v1h-1zM1317 855h1v1h-1zM1317 870h1v1h-1zM1317 885h1v1h-1zM1317 900h1v1h-1zM1317 915h1v1h-1zM1317 930h1v1h-1zM1317 945h1v1h-1zM1317 960h1v1h-1zM1317 976h1v1h-1zM1332 83h1v1h-1zM1332 98h1v1h-1zM1332 113h1v1h-1zM1332 128h1v1h-1zM1332 144h1v1h-1zM1332 159h1v1h-1zM1332 174h1v1h-1zM1332 189h1v1h-1zM1332 204h1v1h-1zM1332 219h1v1h-1zM1332 234h1v1h-1zM1332 249h1v1h-1zM1332 265h1v1h-1zM1332 280h1v1h-1zM1332 295h1v1h-1zM1332 310h1v1h-1zM1332 325h1v1h-1zM1332 340h1v1h-1zM1332 355h1v1h-1zM1332 370h1v1h-1zM1332 386h1v1h-1zM1332 401h1v1h-1zM1332 416h1v1h-1zM1332 431h1v1h-1zM1332 446h1v1h-1zM1332 461h1v1h-1zM1332 476h1v1h-1zM1332 491h1v1h-1zM1332 507h1v1h-1zM1332 522h1v1h-1zM1332 537h1v1h-1zM1332 552h1v1h-1zM1332 567h1v1h-1zM1332 582h1v1h-1zM1332 597h1v1h-1zM1332 612h1v1h-1zM1332 628h1v1h-1zM1332 643h1v1h-1zM1332 658h1v1h-1zM1332 673h1v1h-1zM1332 688h1v1h-1zM1332 703h1v1h-1zM1332 718h1v1h-1zM1332 734h1v1h-1zM1332 749h1v1h-1zM1332 764h1v1h-1zM1332 779h1v1h-1zM1332 794h1v1h-1zM1332 809h1v1h-1zM1332 824h1v1h-1zM1332 839h1v1h-1zM1332 855h1v1h-1zM1332 870h1v1h-1zM1332 885h1v1h-1zM1332 900h1v1h-1zM1332 915h1v1h-1zM1332 930h1v1h-1zM1332 945h1v1h-1zM1332 960h1v1h-1zM1332 976h1v1h-1zM1347 83h1v1h-1zM1347 98h1v1h-1zM1347 113h1v1h-1zM1347 128h1v1h-1zM1347 144h1v1h-1zM1347 159h1v1h-1zM1347 174h1v1h-1zM1347 189h1v1h-1zM1347 204h1v1h-1zM1347 219h1v1h-1zM1347 234h1v1h-1zM1347 249h1v1h-1zM1347 265h1v1h-1zM1347 280h1v1h-1zM1347 295h1v1h-1zM1347 310h1v1h-1zM1347 325h1v1h-1zM1347 340h1v1h-1zM1347 355h1v1h-1zM1347 370h1v1h-1zM1347 386h1v1h-1zM1347 401h1v1h-1zM1347 416h1v1h-1zM1347 431h1v1h-1zM1347 446h1v1h-1zM1347 461h1v1h-1zM1347 476h1v1h-1zM1347 491h1v1h-1zM1347 507h1v1h-1zM1347 522h1v1h-1zM1347 537h1v1h-1zM1347 552h1v1h-1zM1347 567h1v1h-1zM1347 582h1v1h-1zM1347 597h1v1h-1zM1347 612h1v1h-1zM1347 628h1v1h-1zM1347 643h1v1h-1zM1347 658h1v1h-1zM1347 673h1v1h-1zM1347 688h1v1h-1zM1347 703h1v1h-1zM1347 718h1v1h-1zM1347 734h1v1h-1zM1347 749h1v1h-1zM1347 764h1v1h-1zM1347 779h1v1h-1zM1347 794h1v1h-1zM1347 809h1v1h-1zM1347 824h1v1h-1zM1347 839h1v1h-1zM1347 855h1v1h-1zM1347 870h1v1h-1zM1347 885h1v1h-1zM1347 900h1v1h-1zM1347 915h1v1h-1zM1347 930h1v1h-1zM1347 945h1v1h-1zM1347 960h1v1h-1zM1347 976h1v1h-1zM1362 83h1v1h-1zM1362 98h1v1h-1zM1362 113h1v1h-1zM1362 128h1v1h-1zM1362 144h1v1h-1zM1362 159h1v1h-1zM1362 174h1v1h-1zM1362 189h1v1h-1zM1362 204h1v1h-1zM1362 219h1v1h-1zM1362 234h1v1h-1zM1362 249h1v1h-1zM1362 265h1v1h-1zM1362 280h1v1h-1zM1362 295h1v1h-1zM1362 310h1v1h-1zM1362 325h1v1h-1zM1362 340h1v1h-1zM1362 355h1v1h-1zM1362 370h1v1h-1zM1362 386h1v1h-1zM1362 401h1v1h-1zM1362 416h1v1h-1zM1362 431h1v1h-1zM1362 446h1v1h-1zM1362 461h1v1h-1zM1362 476h1v1h-1zM1362 491h1v1h-1zM1362 507h1v1h-1zM1362 522h1v1h-1zM1362 537h1v1h-1zM1362 552h1v1h-1zM1362 567h1v1h-1zM1362 582h1v1h-1zM1362 597h1v1h-1zM1362 612h1v1h-1zM1362 628h1v1h-1zM1362 643h1v1h-1zM1362 658h1v1h-1zM1362 673h1v1h-1zM1362 688h1v1h-1zM1362 703h1v1h-1zM1362 718h1v1h-1zM1362 734h1v1h-1zM1362 749h1v1h-1zM1362 764h1v1h-1zM1362 779h1v1h-1zM1362 794h1v1h-1zM1362 809h1v1h-1zM1362 824h1v1h-1zM1362 839h1v1h-1zM1362 855h1v1h-1zM1362 870h1v1h-1zM1362 885h1v1h-1zM1362 900h1v1h-1zM1362 915h1v1h-1zM1362 930h1v1h-1zM1362 945h1v1h-1zM1362 960h1v1h-1zM1362 976h1v1h-1zM1378 83h1v1h-1zM1378 98h1v1h-1zM1378 113h1v1h-1zM1378 128h1v1h-1zM1378 144h1v1h-1zM1378 159h1v1h-1zM1378 174h1v1h-1zM1378 189h1v1h-1zM1378 204h1v1h-1zM1378 219h1v1h-1zM1378 234h1v1h-1zM1378 249h1v1h-1zM1378 265h1v1h-1zM1378 280h1v1h-1zM1378 295h1v1h-1zM1378 310h1v1h-1zM1378 325h1v1h-1zM1378 340h1v1h-1zM1378 355h1v1h-1zM1378 370h1v1h-1zM1378 386h1v1h-1zM1378 401h1v1h-1zM1378 416h1v1h-1zM1378 431h1v1h-1zM1378 446h1v1h-1zM1378 461h1v1h-1zM1378 476h1v1h-1zM1378 491h1v1h-1zM1378 507h1v1h-1zM1378 522h1v1h-1zM1378 537h1v1h-1zM1378 552h1v1h-1zM1378 567h1v1h-1zM1378 582h1v1h-1zM1378 597h1v1h-1zM1378 612h1v1h-1zM1378 628h1v1h-1zM1378 643h1v1h-1zM1378 658h1v1h-1zM1378 673h1v1h-1zM1378 688h1v1h-1zM1378 703h1v1h-1zM1378 718h1v1h-1zM1378 734h1v1h-1zM1378 749h1v1h-1zM1378 764h1v1h-1zM1378 779h1v1h-1zM1378 794h1v1h-1zM1378 809h1v1h-1zM1378 824h1v1h-1zM1378 839h1v1h-1zM1378 855h1v1h-1zM1378 870h1v1h-1zM1378 885h1v1h-1zM1378 900h1v1h-1zM1378 915h1v1h-1zM1378 930h1v1h-1zM1378 945h1v1h-1zM1378 960h1v1h-1zM1378 976h1v1h-1z" fill="#ffffff"/>
</svg>
<svg class="a" style="left:0;top:0" width="400" height="500"><g font-family="Liberation Mono" font-weight="bold" font-size="18.5" letter-spacing="1.87" fill="#000"><text x="73" y="422.5">Asteroids Speed Hack</text><text x="73" y="445.5">Mark Spaeth, 2005</text></g></svg>
<div class="a dither" style="left:1382px;top:74px;width:16px;height:917px"></div>
<div class="b" style="left:1382px;top:74px;width:16px;height:16px;box-shadow: inset -1px -1px #404040, inset 1px 1px #ffffff, inset -2px -2px #808080, inset 2px 2px #d4d0c8;"><svg class="a" width="16" height="16"><path d="M4,10 L8,6 L12,10 Z" fill="#000"/></svg></div>
<div class="b" style="left:1382px;top:117px;width:16px;height:16px;box-shadow: inset -1px -1px #404040, inset 1px 1px #ffffff, inset -2px -2px #808080, inset 2px 2px #d4d0c8;"></div>
<div class="b" style="left:1382px;top:974px;width:16px;height:16px;box-shadow: inset -1px -1px #404040, inset 1px 1px #ffffff, inset -2px -2px #808080, inset 2px 2px #d4d0c8;"><svg class="a" width="16" height="16"><path d="M4,6.5 L8,10.5 L12,6.5 Z" fill="#000"/></svg></div>
<div class="a dither" style="left:2px;top:991px;width:1380px;height:16px"></div>
<div class="b" style="left:2px;top:991px;width:16px;height:16px;box-shadow: inset -1px -1px #404040, inset 1px 1px #ffffff, inset -2px -2px #808080, inset 2px 2px #d4d0c8;"><svg class="a" width="16" height="16"><path d="M10,4 L6,8 L10,12 Z" fill="#000"/></svg></div>
<div class="b" style="left:36px;top:991px;width:16px;height:16px;box-shadow: inset -1px -1px #404040, inset 1px 1px #ffffff, inset -2px -2px #808080, inset 2px 2px #d4d0c8;"></div>
<div class="b" style="left:1366px;top:991px;width:16px;height:16px;box-shadow: inset -1px -1px #404040, inset 1px 1px #ffffff, inset -2px -2px #808080, inset 2px 2px #d4d0c8;"><svg class="a" width="16" height="16"><path d="M6,4 L10,8 L6,12 Z" fill="#000"/></svg></div>
<div class="a" style="left:0;top:1008px;width:1400px;height:1px;background:#ffffff"></div>
<div class="a" style="left:0;top:1011px;width:1398px;height:1px;background:#808080"></div>
<div class="a" style="left:0;top:1011px;width:1px;height:15px;background:#808080"></div>
<div class="a" style="left:1398px;top:1011px;width:1px;height:16px;background:#ffffff"></div>
<div class="a" style="left:3px;top:1012px;font-size:11.5px;line-height:14px;letter-spacing:-0.34px">Redraw the active view at the extent of all objects in the current sheet. View Extent</div>
<div class="a" style="left:0;top:1026px;width:1400px;height:1px;background:#ffffff"></div>
<div class="field" style="left:1px;top:1030px;width:70px;height:19px">6100.0</div>
<div class="field" style="left:72px;top:1030px;width:70px;height:19px">6700.0</div>
<div class="a" style="left:147px;top:1030px;width:33px;height:19px;box-shadow:inset 1px 1px #808080, inset -1px -1px #ffffff, inset 2px 2px #404040"></div>
<div class="b" style="left:150px;top:1032px;width:27px;height:16px;box-shadow: inset -1px -1px #404040, inset 1px 1px #ffffff, inset -2px -2px #808080, inset 2px 2px #d4d0c8;"><div class="a" style="left:3px;top:1px;font-size:12px">Abs</div></div>
<div class="field" style="left:181px;top:1030px;width:86px;height:19px">100.0</div>
<div class="b" style="left:251px;top:1032px;width:15px;height:16px;box-shadow: inset -1px -1px #404040, inset 1px 1px #ffffff, inset -2px -2px #808080, inset 2px 2px #d4d0c8;"><svg class="a" width="15" height="16"><path d="M4,6 L11,6 L7.5,10 Z" fill="#000"/></svg></div>
<div class="a" style="left:270px;top:1030px;width:21px;height:19px;box-shadow:inset 1px 1px #808080, inset -1px -1px #ffffff, inset 2px 2px #404040"></div>
<div class="b" style="left:272px;top:1032px;width:16px;height:16px;box-shadow: inset -1px -1px #404040, inset 1px 1px #ffffff, inset -2px -2px #808080, inset 2px 2px #d4d0c8;"><div class="a" style="left:3px;top:1px;font-size:12px">M</div></div>
<div class="field" style="left:293px;top:1030px;width:91px;height:19px">Sheet1</div>
<div class="b" style="left:368px;top:1032px;width:15px;height:16px;box-shadow: inset -1px -1px #404040, inset 1px 1px #ffffff, inset -2px -2px #808080, inset 2px 2px #d4d0c8;"><svg class="a" width="15" height="16"><path d="M4,6 L11,6 L7.5,10 Z" fill="#000"/></svg></div>
<div class="field" style="left:384px;top:1030px;width:21px;height:19px"></div>
<div class="b" style="left:406px;top:1030px;width:16px;height:9px;box-shadow: inset -1px -1px #404040, inset 1px 1px #ffffff, inset -2px -2px #808080, inset 2px 2px #d4d0c8;"><svg class="a" width="16" height="9"><path d="M5,6 L8,3 L11,6 Z" fill="#000"/></svg></div>
<div class="b" style="left:406px;top:1039px;width:16px;height:10px;box-shadow: inset -1px -1px #404040, inset 1px 1px #ffffff, inset -2px -2px #808080, inset 2px 2px #d4d0c8;"><svg class="a" width="16" height="10"><path d="M5,3 L8,6 L11,3 Z" fill="#000"/></svg></div>
<div class="field" style="left:425px;top:1030px;width:84px;height:19px">10.0mil</div>
<div class="b" style="left:493px;top:1032px;width:15px;height:16px;box-shadow: inset -1px -1px #404040, inset 1px 1px #ffffff, inset -2px -2px #808080, inset 2px 2px #d4d0c8;"><svg class="a" width="15" height="16"><path d="M4,6 L11,6 L7.5,10 Z" fill="#000"/></svg></div>
<div class="a" style="left:513px;top:1030px;width:887px;height:20px;box-shadow:inset 1px 1px #808080, inset -1px -1px #ffffff"></div>
</body></html>
